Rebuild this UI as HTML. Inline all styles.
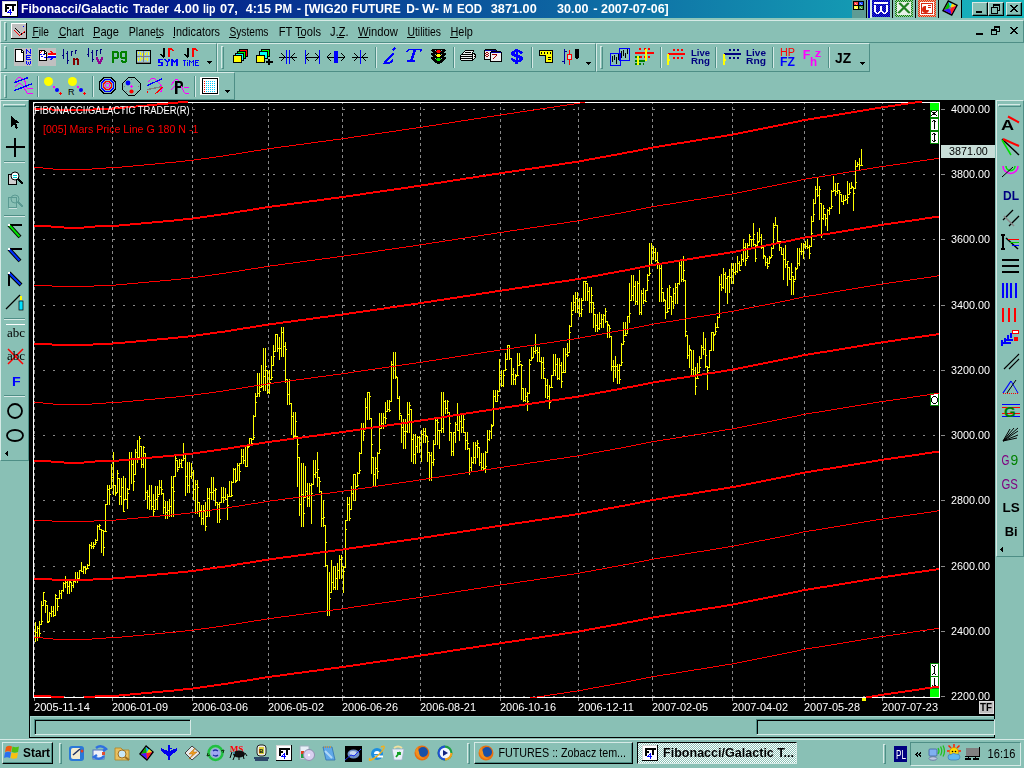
<!DOCTYPE html><html><head><meta charset="utf-8"><style>
html,body{margin:0;padding:0;}body{width:1024px;height:768px;overflow:hidden;position:relative;background:#89C0B5;font-family:"Liberation Sans",sans-serif;}
svg{overflow:visible}
</style></head><body>
<div style="position:absolute;left:0px;top:0px;width:1024px;height:18px;background:linear-gradient(to right,#000080 0%,#18B8BD 100%)"></div>
<svg style="position:absolute;left:2px;top:1px" width="16" height="16" viewBox="0 0 16 16" shape-rendering="crispEdges" ><rect x="0" y="0" width="15" height="1" fill="#d8d8d8"/><rect x="15" y="0" width="1" height="1" fill="#000000"/><rect x="0" y="1" width="1" height="1" fill="#d8d8d8"/><rect x="1" y="1" width="14" height="1" fill="#ffffff"/><rect x="15" y="1" width="1" height="1" fill="#000000"/><rect x="0" y="2" width="1" height="1" fill="#d8d8d8"/><rect x="1" y="2" width="14" height="1" fill="#ffffff"/><rect x="15" y="2" width="1" height="1" fill="#000000"/><rect x="0" y="3" width="1" height="1" fill="#d8d8d8"/><rect x="1" y="3" width="2" height="1" fill="#ffffff"/><rect x="3" y="3" width="11" height="1" fill="#000000"/><rect x="14" y="3" width="1" height="1" fill="#ffffff"/><rect x="15" y="3" width="1" height="1" fill="#000000"/><rect x="0" y="4" width="1" height="1" fill="#d8d8d8"/><rect x="1" y="4" width="2" height="1" fill="#ffffff"/><rect x="3" y="4" width="11" height="1" fill="#000000"/><rect x="14" y="4" width="1" height="1" fill="#ffffff"/><rect x="15" y="4" width="1" height="1" fill="#000000"/><rect x="0" y="5" width="1" height="1" fill="#d8d8d8"/><rect x="1" y="5" width="2" height="1" fill="#ffffff"/><rect x="3" y="5" width="2" height="1" fill="#000000"/><rect x="5" y="5" width="5" height="1" fill="#ffffff"/><rect x="10" y="5" width="2" height="1" fill="#000000"/><rect x="12" y="5" width="3" height="1" fill="#ffffff"/><rect x="15" y="5" width="1" height="1" fill="#000000"/><rect x="0" y="6" width="1" height="1" fill="#d8d8d8"/><rect x="1" y="6" width="2" height="1" fill="#ffffff"/><rect x="3" y="6" width="4" height="1" fill="#000000"/><rect x="7" y="6" width="3" height="1" fill="#ffffff"/><rect x="10" y="6" width="2" height="1" fill="#000000"/><rect x="12" y="6" width="3" height="1" fill="#ffffff"/><rect x="15" y="6" width="1" height="1" fill="#000000"/><rect x="0" y="7" width="1" height="1" fill="#d8d8d8"/><rect x="1" y="7" width="2" height="1" fill="#ffffff"/><rect x="3" y="7" width="4" height="1" fill="#000000"/><rect x="7" y="7" width="3" height="1" fill="#ffffff"/><rect x="10" y="7" width="2" height="1" fill="#000000"/><rect x="12" y="7" width="3" height="1" fill="#ffffff"/><rect x="15" y="7" width="1" height="1" fill="#000000"/><rect x="0" y="8" width="1" height="1" fill="#d8d8d8"/><rect x="1" y="8" width="2" height="1" fill="#ffffff"/><rect x="3" y="8" width="2" height="1" fill="#000000"/><rect x="5" y="8" width="3" height="1" fill="#ffffff"/><rect x="8" y="8" width="1" height="1" fill="#0000ff"/><rect x="9" y="8" width="1" height="1" fill="#ffffff"/><rect x="10" y="8" width="2" height="1" fill="#000000"/><rect x="12" y="8" width="3" height="1" fill="#ffffff"/><rect x="15" y="8" width="1" height="1" fill="#000000"/><rect x="0" y="9" width="1" height="1" fill="#d8d8d8"/><rect x="1" y="9" width="2" height="1" fill="#ffffff"/><rect x="3" y="9" width="2" height="1" fill="#000000"/><rect x="5" y="9" width="2" height="1" fill="#ffffff"/><rect x="7" y="9" width="2" height="1" fill="#0000ff"/><rect x="9" y="9" width="1" height="1" fill="#ffffff"/><rect x="10" y="9" width="2" height="1" fill="#000000"/><rect x="12" y="9" width="3" height="1" fill="#ffffff"/><rect x="15" y="9" width="1" height="1" fill="#000000"/><rect x="0" y="10" width="1" height="1" fill="#d8d8d8"/><rect x="1" y="10" width="2" height="1" fill="#ffffff"/><rect x="3" y="10" width="2" height="1" fill="#000000"/><rect x="5" y="10" width="1" height="1" fill="#ffffff"/><rect x="6" y="10" width="1" height="1" fill="#0000ff"/><rect x="7" y="10" width="1" height="1" fill="#ffffff"/><rect x="8" y="10" width="1" height="1" fill="#0000ff"/><rect x="9" y="10" width="6" height="1" fill="#ffffff"/><rect x="15" y="10" width="1" height="1" fill="#000000"/><rect x="0" y="11" width="1" height="1" fill="#d8d8d8"/><rect x="1" y="11" width="4" height="1" fill="#ffffff"/><rect x="5" y="11" width="5" height="1" fill="#0000ff"/><rect x="10" y="11" width="5" height="1" fill="#ffffff"/><rect x="15" y="11" width="1" height="1" fill="#000000"/><rect x="0" y="12" width="1" height="1" fill="#d8d8d8"/><rect x="1" y="12" width="7" height="1" fill="#ffffff"/><rect x="8" y="12" width="1" height="1" fill="#0000ff"/><rect x="9" y="12" width="6" height="1" fill="#ffffff"/><rect x="15" y="12" width="1" height="1" fill="#000000"/><rect x="0" y="13" width="1" height="1" fill="#d8d8d8"/><rect x="1" y="13" width="7" height="1" fill="#ffffff"/><rect x="8" y="13" width="1" height="1" fill="#0000ff"/><rect x="9" y="13" width="6" height="1" fill="#ffffff"/><rect x="15" y="13" width="1" height="1" fill="#000000"/><rect x="0" y="14" width="1" height="1" fill="#d8d8d8"/><rect x="1" y="14" width="14" height="1" fill="#ffffff"/><rect x="15" y="14" width="1" height="1" fill="#000000"/><rect x="0" y="15" width="16" height="1" fill="#000000"/></svg>
<div style="position:absolute;left:852px;top:0px;width:110px;height:18px;background:#89C0B5"></div>
<div style="position:absolute;left:852px;top:0px;width:14px;height:18px;background:#5E9C94"></div>
<svg style="position:absolute;left:853px;top:1px" width="12" height="10" viewBox="0 0 12 10" shape-rendering="crispEdges" ><rect x="0" y="0" width="11" height="9" fill="#000"/><rect x="1" y="1" width="4" height="3" fill="#ff4040"/><rect x="6" y="1" width="4" height="3" fill="#2050ff"/><rect x="1" y="5" width="4" height="3" fill="#ffff40"/><rect x="6" y="5" width="4" height="3" fill="#40a040"/><path d="M2 2h1M3 3h1M7 2h1M8 3h1M2 6h1M3 7h1M7 6h1M8 7h1" stroke="#fff" transform="translate(0,0.5)" opacity="0.6"/></svg>
<div style="position:absolute;left:866px;top:0px;width:1px;height:18px;background:#000"></div>
<div style="position:absolute;left:868px;top:0px;width:2px;height:18px;background:#0000c0"></div>
<div style="position:absolute;left:870px;top:0px;width:2px;height:18px;background:#D6EAE6"></div>
<svg style="position:absolute;left:872px;top:0px" width="18" height="17" viewBox="0 0 18 17" shape-rendering="crispEdges" ><defs><pattern id="pw" width="2" height="2" patternUnits="userSpaceOnUse"><rect width="2" height="2" fill="#0000a0"/><rect width="1" height="1" fill="#2020e0"/><rect x="1" y="1" width="1" height="1" fill="#2020e0"/></pattern></defs><rect width="18" height="17" fill="url(#pw)"/></svg>
<svg style="position:absolute;left:872px;top:0px" width="18" height="15" viewBox="0 0 18 15" shape-rendering="crispEdges" ><rect x="2" y="2" width="14" height="1" fill="#ffffff"/><rect x="2" y="3" width="14" height="1" fill="#ffffff"/><rect x="2" y="5" width="2" height="1" fill="#ffffff"/><rect x="14" y="5" width="2" height="1" fill="#ffffff"/><rect x="2" y="6" width="2" height="1" fill="#ffffff"/><rect x="8" y="6" width="2" height="1" fill="#ffffff"/><rect x="14" y="6" width="2" height="1" fill="#ffffff"/><rect x="2" y="7" width="2" height="1" fill="#ffffff"/><rect x="8" y="7" width="2" height="1" fill="#ffffff"/><rect x="14" y="7" width="2" height="1" fill="#ffffff"/><rect x="2" y="8" width="2" height="1" fill="#ffffff"/><rect x="8" y="8" width="2" height="1" fill="#ffffff"/><rect x="14" y="8" width="2" height="1" fill="#ffffff"/><rect x="2" y="9" width="2" height="1" fill="#ffffff"/><rect x="8" y="9" width="2" height="1" fill="#ffffff"/><rect x="14" y="9" width="2" height="1" fill="#ffffff"/><rect x="2" y="10" width="2" height="1" fill="#ffffff"/><rect x="8" y="10" width="2" height="1" fill="#ffffff"/><rect x="14" y="10" width="2" height="1" fill="#ffffff"/><rect x="2" y="11" width="2" height="1" fill="#ffffff"/><rect x="7" y="11" width="4" height="1" fill="#ffffff"/><rect x="14" y="11" width="2" height="1" fill="#ffffff"/><rect x="3" y="12" width="2" height="1" fill="#ffffff"/><rect x="6" y="12" width="2" height="1" fill="#ffffff"/><rect x="10" y="12" width="2" height="1" fill="#ffffff"/><rect x="13" y="12" width="2" height="1" fill="#ffffff"/><rect x="4" y="13" width="3" height="1" fill="#ffffff"/><rect x="11" y="13" width="3" height="1" fill="#ffffff"/></svg>
<div style="position:absolute;left:892px;top:0px;width:1px;height:18px;background:#000"></div>
<svg style="position:absolute;left:895px;top:0px" width="18" height="17" viewBox="0 0 18 17" shape-rendering="crispEdges" ><defs><pattern id="px" width="2" height="2" patternUnits="userSpaceOnUse"><rect width="2" height="2" fill="#108010"/><rect width="1" height="1" fill="#a0d0a0"/><rect x="1" y="1" width="1" height="1" fill="#a0d0a0"/></pattern></defs><rect width="18" height="17" fill="url(#px)"/><rect x="2" y="2" width="14" height="13" fill="#e8f0e8"/><path d="M4 3 L14 13 M5 3 L15 13 M14 3 L4 13 M13 3 L3 13" stroke="#208020" stroke-width="1.5" shape-rendering="auto"/></svg>
<div style="position:absolute;left:915px;top:0px;width:1px;height:18px;background:#000"></div>
<svg style="position:absolute;left:918px;top:0px" width="18" height="17" viewBox="0 0 18 17" shape-rendering="crispEdges" ><defs><pattern id="pp" width="2" height="2" patternUnits="userSpaceOnUse"><rect width="2" height="2" fill="#e03010"/><rect width="1" height="1" fill="#f0a080"/><rect x="1" y="1" width="1" height="1" fill="#f0a080"/></pattern></defs><rect width="18" height="17" fill="url(#pp)"/><rect x="2" y="2" width="14" height="13" fill="#fff"/><rect x="3" y="3" width="12" height="11" fill="#d82810"/><rect x="4" y="4" width="10" height="9" fill="#fff"/><path d="M8 6 A3.5 3.5 0 1 0 11 10 H8 Z" fill="#d82810" shape-rendering="auto"/><path d="M10 5h3M10 7h3" stroke="#d82810"/></svg>
<div style="position:absolute;left:938px;top:0px;width:1px;height:18px;background:#000"></div>
<svg style="position:absolute;left:941px;top:0px" width="18" height="17" viewBox="0 0 18 17" shape-rendering="crispEdges" ><g shape-rendering="auto"><polygon points="7,0 17,5 11,16 1,11" fill="#000"/><polygon points="7.5,2 15,5.8 10.5,14 3,10.3" fill="#ff00c0"/><polygon points="7.5,2 15,5.8 9,8" fill="#00e0ff"/><polygon points="3,10.3 7.5,2 9,8" fill="#00c000"/><polygon points="3,10.3 10.5,14 9,8" fill="#3020ff"/><polygon points="15,5.8 10.5,14 9,8" fill="#ff2020"/><polygon points="11,3.5 15,5.8 9,8" fill="#ffe000"/><circle cx="9" cy="8" r="1.3" fill="#808080"/></g></svg>
<div style="position:absolute;left:961px;top:0px;width:1px;height:18px;background:#000"></div>
<div style="position:absolute;left:972px;top:2px;width:16px;height:14px;box-sizing:border-box;background:#89C0B5;border-top:1px solid #D6EAE6;border-left:1px solid #D6EAE6;border-right:1px solid #000;border-bottom:1px solid #000;box-shadow:inset -1px -1px 0 #4E8E86"></div>
<svg style="position:absolute;left:972px;top:2px" width="16" height="14" viewBox="0 0 16 14" shape-rendering="crispEdges" ><rect x="4" y="9" width="6" height="2" fill="#000"/></svg>
<div style="position:absolute;left:988px;top:2px;width:16px;height:14px;box-sizing:border-box;background:#89C0B5;border-top:1px solid #D6EAE6;border-left:1px solid #D6EAE6;border-right:1px solid #000;border-bottom:1px solid #000;box-shadow:inset -1px -1px 0 #4E8E86"></div>
<svg style="position:absolute;left:988px;top:2px" width="16" height="14" viewBox="0 0 16 14" shape-rendering="crispEdges" ><rect x="3" y="5" width="6" height="6" fill="none" stroke="#000" stroke-width="1" transform="translate(0.5,0.5)"/><rect x="3" y="5" width="7" height="1" fill="#000"/><rect x="5" y="2" width="7" height="2" fill="#000"/><rect x="11" y="2" width="1" height="6" fill="#000"/><rect x="5" y="2" width="1" height="3" fill="#000"/><rect x="9" y="8" width="3" height="1" fill="#000"/></svg>
<div style="position:absolute;left:1006px;top:2px;width:16px;height:14px;box-sizing:border-box;background:#89C0B5;border-top:1px solid #D6EAE6;border-left:1px solid #D6EAE6;border-right:1px solid #000;border-bottom:1px solid #000;box-shadow:inset -1px -1px 0 #4E8E86"></div>
<svg style="position:absolute;left:1006px;top:2px" width="16" height="14" viewBox="0 0 16 14" shape-rendering="crispEdges" ><path d="M4 3 L11 10 M5 3 L12 10 M11 3 L4 10 M12 3 L5 10" stroke="#000" stroke-width="1" shape-rendering="crispEdges"/></svg>
<div style="position:absolute;left:0px;top:18px;width:1024px;height:2px;background:#8EC6BA"></div>
<div style="position:absolute;left:0px;top:20px;width:1024px;height:23px;box-sizing:border-box;border-top:1px solid #D6EAE6;border-left:1px solid #D6EAE6;border-bottom:1px solid #4E8E86;border-right:1px solid #4E8E86;"></div>
<div style="position:absolute;left:4px;top:22px;width:3px;height:19px;box-sizing:border-box;border-left:1px solid #D6EAE6;border-top:1px solid #D6EAE6;border-right:1px solid #4E8E86;border-bottom:1px solid #4E8E86;"></div>
<svg style="position:absolute;left:11px;top:23px" width="16" height="16" viewBox="0 0 16 16" shape-rendering="crispEdges" ><rect x="0" y="0" width="15" height="1" fill="#ffffff"/><rect x="15" y="0" width="1" height="1" fill="#000000"/><rect x="0" y="1" width="1" height="1" fill="#ffffff"/><rect x="1" y="1" width="14" height="1" fill="#c0c0c0"/><rect x="15" y="1" width="1" height="1" fill="#000000"/><rect x="0" y="2" width="1" height="1" fill="#ffffff"/><rect x="1" y="2" width="14" height="1" fill="#c0c0c0"/><rect x="15" y="2" width="1" height="1" fill="#000000"/><rect x="0" y="3" width="1" height="1" fill="#ffffff"/><rect x="1" y="3" width="11" height="1" fill="#c0c0c0"/><rect x="12" y="3" width="1" height="1" fill="#0000ff"/><rect x="13" y="3" width="2" height="1" fill="#c0c0c0"/><rect x="15" y="3" width="1" height="1" fill="#000000"/><rect x="0" y="4" width="1" height="1" fill="#ffffff"/><rect x="1" y="4" width="14" height="1" fill="#c0c0c0"/><rect x="15" y="4" width="1" height="1" fill="#000000"/><rect x="0" y="5" width="1" height="1" fill="#ffffff"/><rect x="1" y="5" width="3" height="1" fill="#c0c0c0"/><rect x="4" y="5" width="1" height="1" fill="#000000"/><rect x="5" y="5" width="10" height="1" fill="#c0c0c0"/><rect x="15" y="5" width="1" height="1" fill="#000000"/><rect x="0" y="6" width="1" height="1" fill="#ffffff"/><rect x="1" y="6" width="4" height="1" fill="#c0c0c0"/><rect x="5" y="6" width="1" height="1" fill="#000000"/><rect x="6" y="6" width="9" height="1" fill="#c0c0c0"/><rect x="15" y="6" width="1" height="1" fill="#000000"/><rect x="0" y="7" width="1" height="1" fill="#ffffff"/><rect x="1" y="7" width="2" height="1" fill="#c0c0c0"/><rect x="3" y="7" width="1" height="1" fill="#ff0000"/><rect x="4" y="7" width="2" height="1" fill="#c0c0c0"/><rect x="6" y="7" width="1" height="1" fill="#000000"/><rect x="7" y="7" width="8" height="1" fill="#c0c0c0"/><rect x="15" y="7" width="1" height="1" fill="#000000"/><rect x="0" y="8" width="1" height="1" fill="#ffffff"/><rect x="1" y="8" width="3" height="1" fill="#c0c0c0"/><rect x="4" y="8" width="1" height="1" fill="#ff0000"/><rect x="5" y="8" width="2" height="1" fill="#c0c0c0"/><rect x="7" y="8" width="1" height="1" fill="#000000"/><rect x="8" y="8" width="5" height="1" fill="#c0c0c0"/><rect x="13" y="8" width="1" height="1" fill="#ff0000"/><rect x="14" y="8" width="1" height="1" fill="#c0c0c0"/><rect x="15" y="8" width="1" height="1" fill="#000000"/><rect x="0" y="9" width="1" height="1" fill="#ffffff"/><rect x="1" y="9" width="4" height="1" fill="#c0c0c0"/><rect x="5" y="9" width="1" height="1" fill="#ff0000"/><rect x="6" y="9" width="2" height="1" fill="#c0c0c0"/><rect x="8" y="9" width="1" height="1" fill="#000000"/><rect x="9" y="9" width="3" height="1" fill="#c0c0c0"/><rect x="12" y="9" width="1" height="1" fill="#ff0000"/><rect x="13" y="9" width="1" height="1" fill="#000000"/><rect x="14" y="9" width="1" height="1" fill="#c0c0c0"/><rect x="15" y="9" width="1" height="1" fill="#000000"/><rect x="0" y="10" width="1" height="1" fill="#ffffff"/><rect x="1" y="10" width="5" height="1" fill="#c0c0c0"/><rect x="6" y="10" width="1" height="1" fill="#ff0000"/><rect x="7" y="10" width="3" height="1" fill="#c0c0c0"/><rect x="10" y="10" width="1" height="1" fill="#000000"/><rect x="11" y="10" width="1" height="1" fill="#ff0000"/><rect x="12" y="10" width="3" height="1" fill="#c0c0c0"/><rect x="15" y="10" width="1" height="1" fill="#000000"/><rect x="0" y="11" width="1" height="1" fill="#ffffff"/><rect x="1" y="11" width="6" height="1" fill="#c0c0c0"/><rect x="7" y="11" width="1" height="1" fill="#ff0000"/><rect x="8" y="11" width="1" height="1" fill="#c0c0c0"/><rect x="9" y="11" width="1" height="1" fill="#ff0000"/><rect x="10" y="11" width="1" height="1" fill="#000000"/><rect x="11" y="11" width="4" height="1" fill="#c0c0c0"/><rect x="15" y="11" width="1" height="1" fill="#000000"/><rect x="0" y="12" width="1" height="1" fill="#ffffff"/><rect x="1" y="12" width="7" height="1" fill="#c0c0c0"/><rect x="8" y="12" width="1" height="1" fill="#ff0000"/><rect x="9" y="12" width="6" height="1" fill="#c0c0c0"/><rect x="15" y="12" width="1" height="1" fill="#000000"/><rect x="0" y="13" width="1" height="1" fill="#ffffff"/><rect x="1" y="13" width="14" height="1" fill="#c0c0c0"/><rect x="15" y="13" width="1" height="1" fill="#000000"/><rect x="0" y="14" width="1" height="1" fill="#ffffff"/><rect x="1" y="14" width="14" height="1" fill="#c0c0c0"/><rect x="15" y="14" width="1" height="1" fill="#000000"/><rect x="0" y="15" width="16" height="1" fill="#000000"/></svg>
<svg style="position:absolute;left:976px;top:33px" width="7" height="2" viewBox="0 0 7 2" shape-rendering="crispEdges" ><rect x="0" y="0" width="7" height="1" fill="#000"/><rect x="0" y="1" width="7" height="1" fill="#000"/></svg>
<svg style="position:absolute;left:991px;top:26px" width="9" height="9" viewBox="0 0 9 9" shape-rendering="crispEdges" ><rect x="3" y="0" width="6" height="1" fill="#000"/><rect x="3" y="1" width="6" height="1" fill="#000"/><rect x="3" y="2" width="1" height="1" fill="#000"/><rect x="8" y="2" width="1" height="1" fill="#000"/><rect x="0" y="3" width="6" height="1" fill="#000"/><rect x="8" y="3" width="1" height="1" fill="#000"/><rect x="0" y="4" width="6" height="1" fill="#000"/><rect x="8" y="4" width="1" height="1" fill="#000"/><rect x="0" y="5" width="1" height="1" fill="#000"/><rect x="5" y="5" width="4" height="1" fill="#000"/><rect x="0" y="6" width="1" height="1" fill="#000"/><rect x="5" y="6" width="1" height="1" fill="#000"/><rect x="0" y="7" width="1" height="1" fill="#000"/><rect x="5" y="7" width="1" height="1" fill="#000"/><rect x="0" y="8" width="6" height="1" fill="#000"/></svg>
<svg style="position:absolute;left:1010px;top:27px" width="8" height="7" viewBox="0 0 8 7" shape-rendering="crispEdges" ><rect x="0" y="0" width="2" height="1" fill="#000"/><rect x="6" y="0" width="2" height="1" fill="#000"/><rect x="1" y="1" width="2" height="1" fill="#000"/><rect x="5" y="1" width="2" height="1" fill="#000"/><rect x="2" y="2" width="4" height="1" fill="#000"/><rect x="3" y="3" width="2" height="1" fill="#000"/><rect x="2" y="4" width="4" height="1" fill="#000"/><rect x="1" y="5" width="2" height="1" fill="#000"/><rect x="5" y="5" width="2" height="1" fill="#000"/><rect x="0" y="6" width="2" height="1" fill="#000"/><rect x="6" y="6" width="2" height="1" fill="#000"/></svg>
<div style="position:absolute;left:0px;top:43px;width:217px;height:29px;box-sizing:border-box;border-top:1px solid #D6EAE6;border-left:1px solid #D6EAE6;border-bottom:1px solid #4E8E86;border-right:1px solid #4E8E86;"></div>
<div style="position:absolute;left:217px;top:43px;width:379px;height:29px;box-sizing:border-box;border-top:1px solid #D6EAE6;border-left:1px solid #D6EAE6;border-bottom:1px solid #4E8E86;border-right:1px solid #4E8E86;"></div>
<div style="position:absolute;left:596px;top:43px;width:274px;height:29px;box-sizing:border-box;border-top:1px solid #D6EAE6;border-left:1px solid #D6EAE6;border-bottom:1px solid #4E8E86;border-right:1px solid #4E8E86;"></div>
<div style="position:absolute;left:0px;top:72px;width:235px;height:28px;box-sizing:border-box;border-top:1px solid #D6EAE6;border-left:1px solid #D6EAE6;border-bottom:1px solid #4E8E86;border-right:1px solid #4E8E86;"></div>
<div style="position:absolute;left:4px;top:46px;width:3px;height:23px;box-sizing:border-box;border-left:1px solid #D6EAE6;border-top:1px solid #D6EAE6;border-right:1px solid #4E8E86;border-bottom:1px solid #4E8E86;"></div>
<div style="position:absolute;left:221px;top:46px;width:3px;height:23px;box-sizing:border-box;border-left:1px solid #D6EAE6;border-top:1px solid #D6EAE6;border-right:1px solid #4E8E86;border-bottom:1px solid #4E8E86;"></div>
<div style="position:absolute;left:600px;top:46px;width:3px;height:23px;box-sizing:border-box;border-left:1px solid #D6EAE6;border-top:1px solid #D6EAE6;border-right:1px solid #4E8E86;border-bottom:1px solid #4E8E86;"></div>
<div style="position:absolute;left:4px;top:75px;width:3px;height:23px;box-sizing:border-box;border-left:1px solid #D6EAE6;border-top:1px solid #D6EAE6;border-right:1px solid #4E8E86;border-bottom:1px solid #4E8E86;"></div>
<svg style="position:absolute;left:14px;top:48px" width="18" height="18" viewBox="0 0 18 18" shape-rendering="crispEdges" ><rect x="0" y="0" width="18" height="1" fill="#c0c0c0"/><rect x="0" y="1" width="1" height="1" fill="#c0c0c0"/><rect x="1" y="1" width="7" height="1" fill="#000"/><rect x="8" y="1" width="4" height="1" fill="#c0c0c0"/><rect x="12" y="1" width="1" height="1" fill="#0000ff"/><rect x="13" y="1" width="3" height="1" fill="#c0c0c0"/><rect x="16" y="1" width="1" height="1" fill="#0000ff"/><rect x="17" y="1" width="1" height="1" fill="#c0c0c0"/><rect x="0" y="2" width="1" height="1" fill="#c0c0c0"/><rect x="1" y="2" width="1" height="1" fill="#000"/><rect x="2" y="2" width="5" height="1" fill="#fff"/><rect x="7" y="2" width="2" height="1" fill="#000"/><rect x="9" y="2" width="3" height="1" fill="#c0c0c0"/><rect x="12" y="2" width="2" height="1" fill="#0000ff"/><rect x="14" y="2" width="2" height="1" fill="#c0c0c0"/><rect x="16" y="2" width="1" height="1" fill="#0000ff"/><rect x="17" y="2" width="1" height="1" fill="#c0c0c0"/><rect x="0" y="3" width="1" height="1" fill="#c0c0c0"/><rect x="1" y="3" width="1" height="1" fill="#000"/><rect x="2" y="3" width="5" height="1" fill="#fff"/><rect x="7" y="3" width="1" height="1" fill="#000"/><rect x="8" y="3" width="1" height="1" fill="#fff"/><rect x="9" y="3" width="1" height="1" fill="#000"/><rect x="10" y="3" width="2" height="1" fill="#c0c0c0"/><rect x="12" y="3" width="1" height="1" fill="#0000ff"/><rect x="13" y="3" width="1" height="1" fill="#c0c0c0"/><rect x="14" y="3" width="1" height="1" fill="#0000ff"/><rect x="15" y="3" width="1" height="1" fill="#c0c0c0"/><rect x="16" y="3" width="1" height="1" fill="#0000ff"/><rect x="17" y="3" width="1" height="1" fill="#c0c0c0"/><rect x="0" y="4" width="1" height="1" fill="#c0c0c0"/><rect x="1" y="4" width="1" height="1" fill="#000"/><rect x="2" y="4" width="5" height="1" fill="#fff"/><rect x="7" y="4" width="3" height="1" fill="#000"/><rect x="10" y="4" width="2" height="1" fill="#c0c0c0"/><rect x="12" y="4" width="1" height="1" fill="#0000ff"/><rect x="13" y="4" width="2" height="1" fill="#c0c0c0"/><rect x="15" y="4" width="2" height="1" fill="#0000ff"/><rect x="17" y="4" width="1" height="1" fill="#c0c0c0"/><rect x="0" y="5" width="1" height="1" fill="#c0c0c0"/><rect x="1" y="5" width="1" height="1" fill="#000"/><rect x="2" y="5" width="7" height="1" fill="#fff"/><rect x="9" y="5" width="1" height="1" fill="#000"/><rect x="10" y="5" width="2" height="1" fill="#c0c0c0"/><rect x="12" y="5" width="1" height="1" fill="#0000ff"/><rect x="13" y="5" width="3" height="1" fill="#c0c0c0"/><rect x="16" y="5" width="1" height="1" fill="#0000ff"/><rect x="17" y="5" width="1" height="1" fill="#c0c0c0"/><rect x="0" y="6" width="1" height="1" fill="#c0c0c0"/><rect x="1" y="6" width="1" height="1" fill="#000"/><rect x="2" y="6" width="7" height="1" fill="#fff"/><rect x="9" y="6" width="1" height="1" fill="#000"/><rect x="10" y="6" width="8" height="1" fill="#c0c0c0"/><rect x="0" y="7" width="1" height="1" fill="#c0c0c0"/><rect x="1" y="7" width="1" height="1" fill="#000"/><rect x="2" y="7" width="7" height="1" fill="#fff"/><rect x="9" y="7" width="1" height="1" fill="#000"/><rect x="10" y="7" width="2" height="1" fill="#c0c0c0"/><rect x="12" y="7" width="5" height="1" fill="#0000ff"/><rect x="17" y="7" width="1" height="1" fill="#c0c0c0"/><rect x="0" y="8" width="1" height="1" fill="#c0c0c0"/><rect x="1" y="8" width="1" height="1" fill="#000"/><rect x="2" y="8" width="7" height="1" fill="#fff"/><rect x="9" y="8" width="1" height="1" fill="#000"/><rect x="10" y="8" width="2" height="1" fill="#c0c0c0"/><rect x="12" y="8" width="1" height="1" fill="#0000ff"/><rect x="13" y="8" width="5" height="1" fill="#c0c0c0"/><rect x="0" y="9" width="1" height="1" fill="#c0c0c0"/><rect x="1" y="9" width="1" height="1" fill="#000"/><rect x="2" y="9" width="7" height="1" fill="#fff"/><rect x="9" y="9" width="1" height="1" fill="#000"/><rect x="10" y="9" width="2" height="1" fill="#c0c0c0"/><rect x="12" y="9" width="4" height="1" fill="#0000ff"/><rect x="16" y="9" width="2" height="1" fill="#c0c0c0"/><rect x="0" y="10" width="1" height="1" fill="#c0c0c0"/><rect x="1" y="10" width="1" height="1" fill="#000"/><rect x="2" y="10" width="7" height="1" fill="#fff"/><rect x="9" y="10" width="1" height="1" fill="#000"/><rect x="10" y="10" width="2" height="1" fill="#c0c0c0"/><rect x="12" y="10" width="1" height="1" fill="#0000ff"/><rect x="13" y="10" width="5" height="1" fill="#c0c0c0"/><rect x="0" y="11" width="1" height="1" fill="#c0c0c0"/><rect x="1" y="11" width="1" height="1" fill="#000"/><rect x="2" y="11" width="7" height="1" fill="#fff"/><rect x="9" y="11" width="1" height="1" fill="#000"/><rect x="10" y="11" width="2" height="1" fill="#c0c0c0"/><rect x="12" y="11" width="5" height="1" fill="#0000ff"/><rect x="17" y="11" width="1" height="1" fill="#c0c0c0"/><rect x="0" y="12" width="1" height="1" fill="#c0c0c0"/><rect x="1" y="12" width="1" height="1" fill="#000"/><rect x="2" y="12" width="7" height="1" fill="#fff"/><rect x="9" y="12" width="1" height="1" fill="#000"/><rect x="10" y="12" width="8" height="1" fill="#c0c0c0"/><rect x="0" y="13" width="1" height="1" fill="#c0c0c0"/><rect x="1" y="13" width="9" height="1" fill="#000"/><rect x="10" y="13" width="2" height="1" fill="#c0c0c0"/><rect x="12" y="13" width="1" height="1" fill="#0000ff"/><rect x="13" y="13" width="3" height="1" fill="#c0c0c0"/><rect x="16" y="13" width="1" height="1" fill="#0000ff"/><rect x="17" y="13" width="1" height="1" fill="#c0c0c0"/><rect x="0" y="14" width="12" height="1" fill="#c0c0c0"/><rect x="12" y="14" width="1" height="1" fill="#0000ff"/><rect x="13" y="14" width="1" height="1" fill="#c0c0c0"/><rect x="14" y="14" width="1" height="1" fill="#0000ff"/><rect x="15" y="14" width="1" height="1" fill="#c0c0c0"/><rect x="16" y="14" width="1" height="1" fill="#0000ff"/><rect x="17" y="14" width="1" height="1" fill="#c0c0c0"/><rect x="0" y="15" width="12" height="1" fill="#c0c0c0"/><rect x="12" y="15" width="1" height="1" fill="#0000ff"/><rect x="13" y="15" width="1" height="1" fill="#c0c0c0"/><rect x="14" y="15" width="1" height="1" fill="#0000ff"/><rect x="15" y="15" width="1" height="1" fill="#c0c0c0"/><rect x="16" y="15" width="1" height="1" fill="#0000ff"/><rect x="17" y="15" width="1" height="1" fill="#c0c0c0"/><rect x="0" y="16" width="13" height="1" fill="#c0c0c0"/><rect x="13" y="16" width="1" height="1" fill="#0000ff"/><rect x="14" y="16" width="1" height="1" fill="#c0c0c0"/><rect x="15" y="16" width="1" height="1" fill="#0000ff"/><rect x="16" y="16" width="2" height="1" fill="#c0c0c0"/><rect x="0" y="17" width="18" height="1" fill="#c0c0c0"/></svg>
<svg style="position:absolute;left:38px;top:48px" width="18" height="18" viewBox="0 0 18 18" shape-rendering="crispEdges" ><rect x="0" y="0" width="18" height="1" fill="#c0c0c0"/><rect x="0" y="1" width="18" height="1" fill="#c0c0c0"/><rect x="0" y="2" width="1" height="1" fill="#c0c0c0"/><rect x="1" y="2" width="6" height="1" fill="#000"/><rect x="7" y="2" width="11" height="1" fill="#c0c0c0"/><rect x="0" y="3" width="1" height="1" fill="#c0c0c0"/><rect x="1" y="3" width="1" height="1" fill="#000"/><rect x="2" y="3" width="1" height="1" fill="#fff"/><rect x="3" y="3" width="1" height="1" fill="#ff0000"/><rect x="4" y="3" width="2" height="1" fill="#fff"/><rect x="6" y="3" width="2" height="1" fill="#000"/><rect x="8" y="3" width="4" height="1" fill="#c0c0c0"/><rect x="12" y="3" width="2" height="1" fill="#ff0000"/><rect x="14" y="3" width="4" height="1" fill="#c0c0c0"/><rect x="0" y="4" width="1" height="1" fill="#c0c0c0"/><rect x="1" y="4" width="1" height="1" fill="#000"/><rect x="2" y="4" width="1" height="1" fill="#ff0000"/><rect x="3" y="4" width="3" height="1" fill="#fff"/><rect x="6" y="4" width="1" height="1" fill="#000"/><rect x="7" y="4" width="1" height="1" fill="#fff"/><rect x="8" y="4" width="1" height="1" fill="#000"/><rect x="9" y="4" width="4" height="1" fill="#c0c0c0"/><rect x="13" y="4" width="2" height="1" fill="#ff0000"/><rect x="15" y="4" width="3" height="1" fill="#c0c0c0"/><rect x="0" y="5" width="1" height="1" fill="#c0c0c0"/><rect x="1" y="5" width="1" height="1" fill="#000"/><rect x="2" y="5" width="4" height="1" fill="#fff"/><rect x="6" y="5" width="3" height="1" fill="#000"/><rect x="9" y="5" width="1" height="1" fill="#c0c0c0"/><rect x="10" y="5" width="8" height="1" fill="#ff0000"/><rect x="0" y="6" width="1" height="1" fill="#c0c0c0"/><rect x="1" y="6" width="1" height="1" fill="#000"/><rect x="2" y="6" width="2" height="1" fill="#0000ff"/><rect x="4" y="6" width="1" height="1" fill="#fff"/><rect x="5" y="6" width="2" height="1" fill="#0000ff"/><rect x="7" y="6" width="1" height="1" fill="#fff"/><rect x="8" y="6" width="1" height="1" fill="#000"/><rect x="9" y="6" width="1" height="1" fill="#c0c0c0"/><rect x="10" y="6" width="8" height="1" fill="#ff0000"/><rect x="0" y="7" width="1" height="1" fill="#c0c0c0"/><rect x="1" y="7" width="1" height="1" fill="#000"/><rect x="2" y="7" width="6" height="1" fill="#fff"/><rect x="8" y="7" width="1" height="1" fill="#000"/><rect x="9" y="7" width="1" height="1" fill="#c0c0c0"/><rect x="10" y="7" width="8" height="1" fill="#fff"/><rect x="0" y="8" width="1" height="1" fill="#c0c0c0"/><rect x="1" y="8" width="1" height="1" fill="#000"/><rect x="2" y="8" width="1" height="1" fill="#fff"/><rect x="3" y="8" width="2" height="1" fill="#0000ff"/><rect x="5" y="8" width="3" height="1" fill="#fff"/><rect x="8" y="8" width="1" height="1" fill="#000"/><rect x="9" y="8" width="1" height="1" fill="#c0c0c0"/><rect x="10" y="8" width="8" height="1" fill="#0000ff"/><rect x="0" y="9" width="1" height="1" fill="#c0c0c0"/><rect x="1" y="9" width="1" height="1" fill="#000"/><rect x="2" y="9" width="4" height="1" fill="#fff"/><rect x="6" y="9" width="2" height="1" fill="#0000ff"/><rect x="8" y="9" width="1" height="1" fill="#000"/><rect x="9" y="9" width="9" height="1" fill="#0000ff"/><rect x="0" y="10" width="1" height="1" fill="#c0c0c0"/><rect x="1" y="10" width="1" height="1" fill="#000"/><rect x="2" y="10" width="6" height="1" fill="#fff"/><rect x="8" y="10" width="1" height="1" fill="#000"/><rect x="9" y="10" width="4" height="1" fill="#c0c0c0"/><rect x="13" y="10" width="2" height="1" fill="#0000ff"/><rect x="15" y="10" width="3" height="1" fill="#c0c0c0"/><rect x="0" y="11" width="1" height="1" fill="#c0c0c0"/><rect x="1" y="11" width="1" height="1" fill="#000"/><rect x="2" y="11" width="6" height="1" fill="#fff"/><rect x="8" y="11" width="1" height="1" fill="#000"/><rect x="9" y="11" width="3" height="1" fill="#c0c0c0"/><rect x="12" y="11" width="2" height="1" fill="#0000ff"/><rect x="14" y="11" width="4" height="1" fill="#c0c0c0"/><rect x="0" y="12" width="1" height="1" fill="#c0c0c0"/><rect x="1" y="12" width="8" height="1" fill="#000"/><rect x="9" y="12" width="9" height="1" fill="#c0c0c0"/><rect x="0" y="13" width="18" height="1" fill="#c0c0c0"/><rect x="0" y="14" width="18" height="1" fill="#c0c0c0"/><rect x="0" y="15" width="18" height="1" fill="#c0c0c0"/><rect x="0" y="16" width="18" height="1" fill="#c0c0c0"/><rect x="0" y="17" width="18" height="1" fill="#c0c0c0"/></svg>
<svg style="position:absolute;left:61px;top:48px" width="18" height="18" viewBox="0 0 18 18" shape-rendering="crispEdges" ><rect x="2" y="1" width="1" height="1" fill="#000080"/><rect x="2" y="2" width="1" height="1" fill="#000080"/><rect x="14" y="2" width="2" height="1" fill="#000080"/><rect x="2" y="3" width="1" height="1" fill="#000080"/><rect x="6" y="3" width="1" height="1" fill="#000080"/><rect x="10" y="3" width="2" height="1" fill="#000080"/><rect x="14" y="3" width="1" height="1" fill="#000080"/><rect x="2" y="4" width="1" height="1" fill="#000080"/><rect x="6" y="4" width="1" height="1" fill="#000080"/><rect x="10" y="4" width="1" height="1" fill="#000080"/><rect x="14" y="4" width="1" height="1" fill="#000080"/><rect x="2" y="5" width="1" height="1" fill="#000080"/><rect x="5" y="5" width="2" height="1" fill="#000080"/><rect x="10" y="5" width="1" height="1" fill="#000080"/><rect x="14" y="5" width="1" height="1" fill="#000080"/><rect x="2" y="6" width="1" height="1" fill="#000080"/><rect x="6" y="6" width="1" height="1" fill="#000080"/><rect x="10" y="6" width="1" height="1" fill="#000080"/><rect x="1" y="7" width="2" height="1" fill="#000080"/><rect x="6" y="7" width="1" height="1" fill="#000080"/><rect x="10" y="7" width="1" height="1" fill="#000080"/><rect x="2" y="8" width="1" height="1" fill="#000080"/><rect x="6" y="8" width="1" height="1" fill="#000080"/><rect x="2" y="9" width="1" height="1" fill="#000080"/><rect x="6" y="9" width="1" height="1" fill="#000080"/><rect x="2" y="10" width="1" height="1" fill="#000080"/><rect x="6" y="10" width="1" height="1" fill="#000080"/><rect x="12" y="10" width="2" height="1" fill="#800000"/><rect x="15" y="10" width="2" height="1" fill="#800000"/><rect x="6" y="11" width="1" height="1" fill="#000080"/><rect x="12" y="11" width="6" height="1" fill="#800000"/><rect x="6" y="12" width="2" height="1" fill="#000080"/><rect x="12" y="12" width="2" height="1" fill="#800000"/><rect x="16" y="12" width="2" height="1" fill="#800000"/><rect x="6" y="13" width="1" height="1" fill="#000080"/><rect x="12" y="13" width="2" height="1" fill="#800000"/><rect x="16" y="13" width="2" height="1" fill="#800000"/><rect x="6" y="14" width="1" height="1" fill="#000080"/><rect x="12" y="14" width="2" height="1" fill="#800000"/><rect x="16" y="14" width="2" height="1" fill="#800000"/><rect x="6" y="15" width="1" height="1" fill="#000080"/><rect x="12" y="15" width="2" height="1" fill="#800000"/><rect x="16" y="15" width="2" height="1" fill="#800000"/><rect x="12" y="16" width="2" height="1" fill="#800000"/><rect x="16" y="16" width="2" height="1" fill="#800000"/></svg>
<svg style="position:absolute;left:86px;top:47px" width="18" height="18" viewBox="0 0 18 18" shape-rendering="crispEdges" ><rect x="2" y="1" width="1" height="1" fill="#000080"/><rect x="2" y="2" width="1" height="1" fill="#000080"/><rect x="14" y="2" width="2" height="1" fill="#000080"/><rect x="2" y="3" width="1" height="1" fill="#000080"/><rect x="6" y="3" width="1" height="1" fill="#000080"/><rect x="10" y="3" width="2" height="1" fill="#000080"/><rect x="14" y="3" width="1" height="1" fill="#000080"/><rect x="2" y="4" width="1" height="1" fill="#000080"/><rect x="6" y="4" width="1" height="1" fill="#000080"/><rect x="10" y="4" width="1" height="1" fill="#000080"/><rect x="14" y="4" width="1" height="1" fill="#000080"/><rect x="2" y="5" width="1" height="1" fill="#000080"/><rect x="5" y="5" width="2" height="1" fill="#000080"/><rect x="10" y="5" width="1" height="1" fill="#000080"/><rect x="14" y="5" width="1" height="1" fill="#000080"/><rect x="2" y="6" width="1" height="1" fill="#000080"/><rect x="6" y="6" width="1" height="1" fill="#000080"/><rect x="10" y="6" width="1" height="1" fill="#000080"/><rect x="14" y="6" width="1" height="1" fill="#000080"/><rect x="1" y="7" width="2" height="1" fill="#000080"/><rect x="6" y="7" width="1" height="1" fill="#000080"/><rect x="10" y="7" width="1" height="1" fill="#000080"/><rect x="2" y="8" width="1" height="1" fill="#000080"/><rect x="6" y="8" width="1" height="1" fill="#000080"/><rect x="10" y="8" width="1" height="1" fill="#000080"/><rect x="2" y="9" width="1" height="1" fill="#000080"/><rect x="6" y="9" width="1" height="1" fill="#000080"/><rect x="6" y="10" width="1" height="1" fill="#000080"/><rect x="10" y="10" width="2" height="1" fill="#900090"/><rect x="15" y="10" width="2" height="1" fill="#900090"/><rect x="6" y="11" width="1" height="1" fill="#000080"/><rect x="10" y="11" width="2" height="1" fill="#900090"/><rect x="15" y="11" width="2" height="1" fill="#900090"/><rect x="6" y="12" width="2" height="1" fill="#000080"/><rect x="10" y="12" width="3" height="1" fill="#900090"/><rect x="14" y="12" width="3" height="1" fill="#900090"/><rect x="6" y="13" width="1" height="1" fill="#000080"/><rect x="11" y="13" width="2" height="1" fill="#900090"/><rect x="14" y="13" width="2" height="1" fill="#900090"/><rect x="6" y="14" width="1" height="1" fill="#000080"/><rect x="11" y="14" width="5" height="1" fill="#900090"/><rect x="12" y="15" width="3" height="1" fill="#900090"/><rect x="12" y="16" width="3" height="1" fill="#900090"/></svg>
<svg style="position:absolute;left:112px;top:51px" width="15" height="12" viewBox="0 0 15 12" shape-rendering="crispEdges" ><rect x="0" y="0" width="6" height="1" fill="#008000"/><rect x="9" y="0" width="6" height="1" fill="#008000"/><rect x="0" y="1" width="7" height="1" fill="#008000"/><rect x="8" y="1" width="7" height="1" fill="#008000"/><rect x="0" y="2" width="2" height="1" fill="#008000"/><rect x="5" y="2" width="2" height="1" fill="#008000"/><rect x="8" y="2" width="2" height="1" fill="#008000"/><rect x="13" y="2" width="2" height="1" fill="#008000"/><rect x="0" y="3" width="2" height="1" fill="#008000"/><rect x="5" y="3" width="2" height="1" fill="#008000"/><rect x="8" y="3" width="2" height="1" fill="#008000"/><rect x="13" y="3" width="2" height="1" fill="#008000"/><rect x="0" y="4" width="2" height="1" fill="#008000"/><rect x="5" y="4" width="2" height="1" fill="#008000"/><rect x="8" y="4" width="2" height="1" fill="#008000"/><rect x="13" y="4" width="2" height="1" fill="#008000"/><rect x="0" y="5" width="2" height="1" fill="#008000"/><rect x="5" y="5" width="2" height="1" fill="#008000"/><rect x="8" y="5" width="2" height="1" fill="#008000"/><rect x="13" y="5" width="2" height="1" fill="#008000"/><rect x="0" y="6" width="7" height="1" fill="#008000"/><rect x="8" y="6" width="7" height="1" fill="#008000"/><rect x="0" y="7" width="6" height="1" fill="#008000"/><rect x="9" y="7" width="6" height="1" fill="#008000"/><rect x="0" y="8" width="2" height="1" fill="#008000"/><rect x="13" y="8" width="2" height="1" fill="#008000"/><rect x="0" y="9" width="2" height="1" fill="#008000"/><rect x="9" y="9" width="2" height="1" fill="#008000"/><rect x="13" y="9" width="2" height="1" fill="#008000"/><rect x="0" y="10" width="2" height="1" fill="#008000"/><rect x="9" y="10" width="6" height="1" fill="#008000"/><rect x="0" y="11" width="2" height="1" fill="#008000"/><rect x="10" y="11" width="4" height="1" fill="#008000"/></svg>
<svg style="position:absolute;left:136px;top:50px" width="15" height="14" viewBox="0 0 15 14" shape-rendering="crispEdges" ><rect x="0" y="0" width="15" height="1" fill="#000"/><rect x="0" y="1" width="1" height="1" fill="#000"/><rect x="1" y="1" width="6" height="1" fill="#a0c8d0"/><rect x="7" y="1" width="1" height="1" fill="#808080"/><rect x="8" y="1" width="6" height="1" fill="#a0c8d0"/><rect x="14" y="1" width="1" height="1" fill="#000"/><rect x="0" y="2" width="1" height="1" fill="#000"/><rect x="1" y="2" width="1" height="1" fill="#a0c8d0"/><rect x="2" y="2" width="1" height="1" fill="#ffff00"/><rect x="3" y="2" width="1" height="1" fill="#a0c8d0"/><rect x="4" y="2" width="1" height="1" fill="#ffff00"/><rect x="5" y="2" width="2" height="1" fill="#a0c8d0"/><rect x="7" y="2" width="1" height="1" fill="#808080"/><rect x="8" y="2" width="2" height="1" fill="#a0c8d0"/><rect x="10" y="2" width="1" height="1" fill="#ffff00"/><rect x="11" y="2" width="1" height="1" fill="#a0c8d0"/><rect x="12" y="2" width="1" height="1" fill="#ffff00"/><rect x="13" y="2" width="1" height="1" fill="#a0c8d0"/><rect x="14" y="2" width="1" height="1" fill="#000"/><rect x="0" y="3" width="1" height="1" fill="#000"/><rect x="1" y="3" width="1" height="1" fill="#a0c8d0"/><rect x="2" y="3" width="1" height="1" fill="#ffff00"/><rect x="3" y="3" width="1" height="1" fill="#a0c8d0"/><rect x="4" y="3" width="1" height="1" fill="#ffff00"/><rect x="5" y="3" width="1" height="1" fill="#a0c8d0"/><rect x="6" y="3" width="1" height="1" fill="#ffff00"/><rect x="7" y="3" width="1" height="1" fill="#808080"/><rect x="8" y="3" width="1" height="1" fill="#a0c8d0"/><rect x="9" y="3" width="1" height="1" fill="#ffff00"/><rect x="10" y="3" width="2" height="1" fill="#a0c8d0"/><rect x="12" y="3" width="1" height="1" fill="#ffff00"/><rect x="13" y="3" width="1" height="1" fill="#a0c8d0"/><rect x="14" y="3" width="1" height="1" fill="#000"/><rect x="0" y="4" width="1" height="1" fill="#000"/><rect x="1" y="4" width="3" height="1" fill="#a0c8d0"/><rect x="4" y="4" width="1" height="1" fill="#ffff00"/><rect x="5" y="4" width="1" height="1" fill="#a0c8d0"/><rect x="6" y="4" width="1" height="1" fill="#ffff00"/><rect x="7" y="4" width="1" height="1" fill="#808080"/><rect x="8" y="4" width="1" height="1" fill="#a0c8d0"/><rect x="9" y="4" width="1" height="1" fill="#ffff00"/><rect x="10" y="4" width="2" height="1" fill="#a0c8d0"/><rect x="12" y="4" width="1" height="1" fill="#ffff00"/><rect x="13" y="4" width="1" height="1" fill="#a0c8d0"/><rect x="14" y="4" width="1" height="1" fill="#000"/><rect x="0" y="5" width="1" height="1" fill="#000"/><rect x="1" y="5" width="5" height="1" fill="#a0c8d0"/><rect x="6" y="5" width="1" height="1" fill="#ffff00"/><rect x="7" y="5" width="1" height="1" fill="#808080"/><rect x="8" y="5" width="6" height="1" fill="#a0c8d0"/><rect x="14" y="5" width="1" height="1" fill="#000"/><rect x="0" y="6" width="1" height="1" fill="#000"/><rect x="1" y="6" width="13" height="1" fill="#808080"/><rect x="14" y="6" width="1" height="1" fill="#000"/><rect x="0" y="7" width="1" height="1" fill="#000"/><rect x="1" y="7" width="3" height="1" fill="#a0c8d0"/><rect x="4" y="7" width="1" height="1" fill="#ffff00"/><rect x="5" y="7" width="2" height="1" fill="#a0c8d0"/><rect x="7" y="7" width="1" height="1" fill="#808080"/><rect x="8" y="7" width="6" height="1" fill="#a0c8d0"/><rect x="14" y="7" width="1" height="1" fill="#000"/><rect x="0" y="8" width="1" height="1" fill="#000"/><rect x="1" y="8" width="1" height="1" fill="#a0c8d0"/><rect x="2" y="8" width="1" height="1" fill="#ffff00"/><rect x="3" y="8" width="1" height="1" fill="#a0c8d0"/><rect x="4" y="8" width="1" height="1" fill="#ffff00"/><rect x="5" y="8" width="1" height="1" fill="#a0c8d0"/><rect x="6" y="8" width="1" height="1" fill="#ffff00"/><rect x="7" y="8" width="1" height="1" fill="#808080"/><rect x="8" y="8" width="1" height="1" fill="#a0c8d0"/><rect x="9" y="8" width="1" height="1" fill="#ffff00"/><rect x="10" y="8" width="1" height="1" fill="#a0c8d0"/><rect x="11" y="8" width="1" height="1" fill="#ffff00"/><rect x="12" y="8" width="2" height="1" fill="#a0c8d0"/><rect x="14" y="8" width="1" height="1" fill="#000"/><rect x="0" y="9" width="1" height="1" fill="#000"/><rect x="1" y="9" width="1" height="1" fill="#a0c8d0"/><rect x="2" y="9" width="1" height="1" fill="#ffff00"/><rect x="3" y="9" width="2" height="1" fill="#a0c8d0"/><rect x="5" y="9" width="1" height="1" fill="#ffff00"/><rect x="6" y="9" width="1" height="1" fill="#a0c8d0"/><rect x="7" y="9" width="1" height="1" fill="#808080"/><rect x="8" y="9" width="1" height="1" fill="#a0c8d0"/><rect x="9" y="9" width="1" height="1" fill="#ffff00"/><rect x="10" y="9" width="1" height="1" fill="#a0c8d0"/><rect x="11" y="9" width="1" height="1" fill="#ffff00"/><rect x="12" y="9" width="2" height="1" fill="#a0c8d0"/><rect x="14" y="9" width="1" height="1" fill="#000"/><rect x="0" y="10" width="1" height="1" fill="#000"/><rect x="1" y="10" width="1" height="1" fill="#a0c8d0"/><rect x="2" y="10" width="1" height="1" fill="#ffff00"/><rect x="3" y="10" width="1" height="1" fill="#a0c8d0"/><rect x="4" y="10" width="1" height="1" fill="#ffff00"/><rect x="5" y="10" width="2" height="1" fill="#a0c8d0"/><rect x="7" y="10" width="1" height="1" fill="#808080"/><rect x="8" y="10" width="3" height="1" fill="#a0c8d0"/><rect x="11" y="10" width="1" height="1" fill="#ffff00"/><rect x="12" y="10" width="2" height="1" fill="#a0c8d0"/><rect x="14" y="10" width="1" height="1" fill="#000"/><rect x="0" y="11" width="1" height="1" fill="#000"/><rect x="1" y="11" width="6" height="1" fill="#a0c8d0"/><rect x="7" y="11" width="1" height="1" fill="#808080"/><rect x="8" y="11" width="6" height="1" fill="#a0c8d0"/><rect x="14" y="11" width="1" height="1" fill="#000"/><rect x="0" y="12" width="1" height="1" fill="#000"/><rect x="1" y="12" width="13" height="1" fill="#808080"/><rect x="14" y="12" width="1" height="1" fill="#000"/><rect x="0" y="13" width="15" height="1" fill="#000"/></svg>
<svg style="position:absolute;left:157px;top:48px" width="17" height="10" viewBox="0 0 17 10" shape-rendering="crispEdges" ><rect x="6" y="0" width="2" height="1" fill="#000"/><rect x="11" y="0" width="4" height="1" fill="#ff0000"/><rect x="6" y="1" width="2" height="1" fill="#000"/><rect x="11" y="1" width="5" height="1" fill="#ff0000"/><rect x="6" y="2" width="2" height="1" fill="#000"/><rect x="11" y="2" width="2" height="1" fill="#ff0000"/><rect x="15" y="2" width="2" height="1" fill="#ff0000"/><rect x="6" y="3" width="2" height="1" fill="#000"/><rect x="11" y="3" width="2" height="1" fill="#ff0000"/><rect x="6" y="4" width="2" height="1" fill="#000"/><rect x="11" y="4" width="2" height="1" fill="#ff0000"/><rect x="6" y="5" width="2" height="1" fill="#000"/><rect x="11" y="5" width="2" height="1" fill="#ff0000"/><rect x="3" y="6" width="2" height="1" fill="#000"/><rect x="6" y="6" width="2" height="1" fill="#000"/><rect x="11" y="6" width="2" height="1" fill="#ff0000"/><rect x="4" y="7" width="4" height="1" fill="#000"/><rect x="11" y="7" width="2" height="1" fill="#ff0000"/><rect x="5" y="8" width="3" height="1" fill="#000"/><rect x="11" y="8" width="2" height="1" fill="#ff0000"/><rect x="6" y="9" width="1" height="1" fill="#000"/></svg>
<svg style="position:absolute;left:181px;top:48px" width="17" height="10" viewBox="0 0 17 10" shape-rendering="crispEdges" ><rect x="6" y="0" width="2" height="1" fill="#000"/><rect x="11" y="0" width="4" height="1" fill="#ff0000"/><rect x="6" y="1" width="2" height="1" fill="#000"/><rect x="11" y="1" width="5" height="1" fill="#ff0000"/><rect x="6" y="2" width="2" height="1" fill="#000"/><rect x="11" y="2" width="2" height="1" fill="#ff0000"/><rect x="15" y="2" width="2" height="1" fill="#ff0000"/><rect x="6" y="3" width="2" height="1" fill="#000"/><rect x="11" y="3" width="2" height="1" fill="#ff0000"/><rect x="6" y="4" width="2" height="1" fill="#000"/><rect x="11" y="4" width="2" height="1" fill="#ff0000"/><rect x="6" y="5" width="2" height="1" fill="#000"/><rect x="11" y="5" width="2" height="1" fill="#ff0000"/><rect x="3" y="6" width="2" height="1" fill="#000"/><rect x="6" y="6" width="2" height="1" fill="#000"/><rect x="11" y="6" width="2" height="1" fill="#ff0000"/><rect x="4" y="7" width="4" height="1" fill="#000"/><rect x="11" y="7" width="2" height="1" fill="#ff0000"/><rect x="5" y="8" width="3" height="1" fill="#000"/><rect x="11" y="8" width="2" height="1" fill="#ff0000"/><rect x="6" y="9" width="1" height="1" fill="#000"/></svg>
<svg style="position:absolute;left:158px;top:59px" width="20" height="7" viewBox="0 0 20 7" shape-rendering="crispEdges" ><rect x="0" y="0" width="5" height="1" fill="#0000ff"/><rect x="6" y="0" width="2" height="1" fill="#0000ff"/><rect x="10" y="0" width="2" height="1" fill="#0000ff"/><rect x="13" y="0" width="2" height="1" fill="#0000ff"/><rect x="18" y="0" width="2" height="1" fill="#0000ff"/><rect x="0" y="1" width="2" height="1" fill="#0000ff"/><rect x="7" y="1" width="2" height="1" fill="#0000ff"/><rect x="10" y="1" width="2" height="1" fill="#0000ff"/><rect x="13" y="1" width="3" height="1" fill="#0000ff"/><rect x="17" y="1" width="3" height="1" fill="#0000ff"/><rect x="0" y="2" width="2" height="1" fill="#0000ff"/><rect x="8" y="2" width="3" height="1" fill="#0000ff"/><rect x="13" y="2" width="7" height="1" fill="#0000ff"/><rect x="0" y="3" width="5" height="1" fill="#0000ff"/><rect x="9" y="3" width="1" height="1" fill="#0000ff"/><rect x="13" y="3" width="2" height="1" fill="#0000ff"/><rect x="16" y="3" width="1" height="1" fill="#0000ff"/><rect x="18" y="3" width="2" height="1" fill="#0000ff"/><rect x="3" y="4" width="2" height="1" fill="#0000ff"/><rect x="9" y="4" width="1" height="1" fill="#0000ff"/><rect x="13" y="4" width="2" height="1" fill="#0000ff"/><rect x="18" y="4" width="2" height="1" fill="#0000ff"/><rect x="3" y="5" width="2" height="1" fill="#0000ff"/><rect x="9" y="5" width="1" height="1" fill="#0000ff"/><rect x="13" y="5" width="2" height="1" fill="#0000ff"/><rect x="18" y="5" width="2" height="1" fill="#0000ff"/><rect x="0" y="6" width="5" height="1" fill="#0000ff"/><rect x="8" y="6" width="2" height="1" fill="#0000ff"/><rect x="13" y="6" width="2" height="1" fill="#0000ff"/><rect x="18" y="6" width="2" height="1" fill="#0000ff"/></svg>
<svg style="position:absolute;left:183px;top:60px" width="16" height="6" viewBox="0 0 16 6" shape-rendering="crispEdges" ><rect x="0" y="0" width="3" height="1" fill="#0000ff"/><rect x="4" y="0" width="1" height="1" fill="#0000ff"/><rect x="6" y="0" width="1" height="1" fill="#0000ff"/><rect x="10" y="0" width="1" height="1" fill="#0000ff"/><rect x="12" y="0" width="4" height="1" fill="#0000ff"/><rect x="1" y="1" width="1" height="1" fill="#0000ff"/><rect x="6" y="1" width="2" height="1" fill="#0000ff"/><rect x="9" y="1" width="2" height="1" fill="#0000ff"/><rect x="12" y="1" width="1" height="1" fill="#0000ff"/><rect x="1" y="2" width="1" height="1" fill="#0000ff"/><rect x="4" y="2" width="1" height="1" fill="#0000ff"/><rect x="6" y="2" width="1" height="1" fill="#0000ff"/><rect x="8" y="2" width="1" height="1" fill="#0000ff"/><rect x="10" y="2" width="1" height="1" fill="#0000ff"/><rect x="12" y="2" width="3" height="1" fill="#0000ff"/><rect x="1" y="3" width="1" height="1" fill="#0000ff"/><rect x="4" y="3" width="1" height="1" fill="#0000ff"/><rect x="6" y="3" width="1" height="1" fill="#0000ff"/><rect x="10" y="3" width="1" height="1" fill="#0000ff"/><rect x="12" y="3" width="1" height="1" fill="#0000ff"/><rect x="1" y="4" width="1" height="1" fill="#0000ff"/><rect x="4" y="4" width="1" height="1" fill="#0000ff"/><rect x="6" y="4" width="1" height="1" fill="#0000ff"/><rect x="10" y="4" width="1" height="1" fill="#0000ff"/><rect x="12" y="4" width="1" height="1" fill="#0000ff"/><rect x="1" y="5" width="1" height="1" fill="#0000ff"/><rect x="4" y="5" width="1" height="1" fill="#0000ff"/><rect x="6" y="5" width="1" height="1" fill="#0000ff"/><rect x="10" y="5" width="1" height="1" fill="#0000ff"/><rect x="12" y="5" width="4" height="1" fill="#0000ff"/></svg>
<svg style="position:absolute;left:207px;top:61px" width="5" height="3" viewBox="0 0 5 3" shape-rendering="crispEdges" ><path d="M0 0 H5 V1 H4 V2 H3 V3 H2 V2 H1 V1 H0 Z" fill="#000"/></svg>
<svg style="position:absolute;left:233px;top:49px" width="15" height="15" viewBox="0 0 15 15" shape-rendering="crispEdges" ><rect x="6" y="0" width="8" height="7" fill="#f00" stroke="#000" transform="translate(0.5,0.5)"/><rect x="4" y="2" width="8" height="7" fill="#0f0" stroke="#000" transform="translate(0.5,0.5)"/><rect x="2" y="4" width="8" height="7" fill="#0ff" stroke="#000" transform="translate(0.5,0.5)"/><rect x="0" y="6" width="8" height="7" fill="#ff0" stroke="#000" transform="translate(0.5,0.5)"/></svg>
<svg style="position:absolute;left:256px;top:49px" width="18" height="16" viewBox="0 0 18 16" shape-rendering="crispEdges" ><rect x="5" y="0" width="8" height="7" fill="#0f0" stroke="#000" transform="translate(0.5,0.5)"/><rect x="3" y="2" width="8" height="7" fill="#0ff" stroke="#000" transform="translate(0.5,0.5)"/><rect x="0" y="6" width="8" height="7" fill="#ff0" stroke="#000" transform="translate(0.5,0.5)"/><path d="M10 13 H17 M13 10 V16" stroke="#000" stroke-width="2"/></svg>
<svg style="position:absolute;left:279px;top:50px" width="18" height="14" viewBox="0 0 18 14" shape-rendering="crispEdges" ><path d="M0 7 H18" stroke="#000"/><path d="M2 3 L6 7 L2 11 M16 3 L12 7 L16 11" stroke="#000" fill="none"/><path d="M7 0 V14 M10 0 V14" stroke="#00f" stroke-width="1"/></svg>
<svg style="position:absolute;left:304px;top:50px" width="16" height="14" viewBox="0 0 16 14" shape-rendering="crispEdges" ><path d="M1 7 H15" stroke="#000"/><path d="M5 3 L1 7 L5 11 M11 3 L15 7 L11 11" stroke="#000" fill="none"/><path d="M1 0 V14 M15 0 V14" stroke="#00f"/></svg>
<svg style="position:absolute;left:327px;top:50px" width="18" height="14" viewBox="0 0 18 14" shape-rendering="crispEdges" ><path d="M0 7 H18" stroke="#000"/><path d="M4 3 L0 7 L4 11 M14 3 L18 7 L14 11" stroke="#000" fill="none"/><rect x="7" y="1" width="4" height="12" fill="#00f"/></svg>
<svg style="position:absolute;left:352px;top:50px" width="16" height="14" viewBox="0 0 16 14" shape-rendering="crispEdges" ><path d="M0 7 H16" stroke="#000"/><path d="M2 3 L6 7 L2 11 M14 3 L10 7 L14 11" stroke="#000" fill="none"/><path d="M8 0 V14" stroke="#00f"/></svg>
<div style="position:absolute;left:375px;top:47px;width:1px;height:21px;background:#4E8E86"></div>
<div style="position:absolute;left:376px;top:47px;width:1px;height:21px;background:#D6EAE6"></div>
<svg style="position:absolute;left:383px;top:47px" width="14" height="17" viewBox="0 0 14 17" shape-rendering="crispEdges" ><rect x="11" y="0" width="1" height="1" fill="#0000ff"/><rect x="10" y="1" width="3" height="1" fill="#0000ff"/><rect x="9" y="2" width="3" height="1" fill="#0000ff"/><rect x="10" y="3" width="1" height="1" fill="#0000ff"/><rect x="9" y="6" width="2" height="1" fill="#0000ff"/><rect x="8" y="7" width="3" height="1" fill="#0000ff"/><rect x="7" y="8" width="3" height="1" fill="#0000ff"/><rect x="6" y="9" width="3" height="1" fill="#0000ff"/><rect x="5" y="10" width="3" height="1" fill="#0000ff"/><rect x="4" y="11" width="3" height="1" fill="#0000ff"/><rect x="3" y="12" width="3" height="1" fill="#0000ff"/><rect x="9" y="12" width="1" height="1" fill="#0000ff"/><rect x="2" y="13" width="3" height="1" fill="#0000ff"/><rect x="8" y="13" width="2" height="1" fill="#0000ff"/><rect x="1" y="14" width="3" height="1" fill="#0000ff"/><rect x="7" y="14" width="3" height="1" fill="#0000ff"/><rect x="1" y="15" width="8" height="1" fill="#0000ff"/><rect x="0" y="16" width="7" height="1" fill="#0000ff"/></svg>
<svg style="position:absolute;left:405px;top:49px" width="17" height="13" viewBox="0 0 17 13" shape-rendering="crispEdges" ><rect x="3" y="0" width="14" height="1" fill="#0000ff"/><rect x="2" y="1" width="2" height="1" fill="#0000ff"/><rect x="8" y="1" width="3" height="1" fill="#0000ff"/><rect x="15" y="1" width="2" height="1" fill="#0000ff"/><rect x="1" y="2" width="2" height="1" fill="#0000ff"/><rect x="8" y="2" width="3" height="1" fill="#0000ff"/><rect x="15" y="2" width="1" height="1" fill="#0000ff"/><rect x="8" y="3" width="2" height="1" fill="#0000ff"/><rect x="7" y="4" width="3" height="1" fill="#0000ff"/><rect x="7" y="5" width="3" height="1" fill="#0000ff"/><rect x="7" y="6" width="2" height="1" fill="#0000ff"/><rect x="6" y="7" width="3" height="1" fill="#0000ff"/><rect x="6" y="8" width="3" height="1" fill="#0000ff"/><rect x="6" y="9" width="2" height="1" fill="#0000ff"/><rect x="5" y="10" width="3" height="1" fill="#0000ff"/><rect x="2" y="11" width="8" height="1" fill="#0000ff"/><rect x="2" y="12" width="8" height="1" fill="#0000ff"/></svg>
<svg style="position:absolute;left:431px;top:49px" width="15" height="15" viewBox="0 0 15 15" shape-rendering="crispEdges" ><rect x="0" y="0" width="1" height="1" fill="none"/><rect x="1" y="0" width="13" height="1" fill="#000"/><rect x="14" y="0" width="1" height="1" fill="none"/><rect x="0" y="1" width="4" height="1" fill="#000"/><rect x="4" y="1" width="1" height="1" fill="none"/><rect x="5" y="1" width="1" height="1" fill="#000"/><rect x="6" y="1" width="3" height="1" fill="#ff0000"/><rect x="9" y="1" width="1" height="1" fill="#000"/><rect x="10" y="1" width="1" height="1" fill="none"/><rect x="11" y="1" width="4" height="1" fill="#000"/><rect x="0" y="2" width="1" height="1" fill="none"/><rect x="1" y="2" width="4" height="1" fill="#000"/><rect x="5" y="2" width="5" height="1" fill="#ff0000"/><rect x="10" y="2" width="4" height="1" fill="#000"/><rect x="14" y="2" width="1" height="1" fill="none"/><rect x="0" y="3" width="2" height="1" fill="none"/><rect x="2" y="3" width="4" height="1" fill="#000"/><rect x="6" y="3" width="3" height="1" fill="#ff0000"/><rect x="9" y="3" width="4" height="1" fill="#000"/><rect x="13" y="3" width="2" height="1" fill="none"/><rect x="0" y="4" width="15" height="1" fill="#000"/><rect x="0" y="5" width="4" height="1" fill="#000"/><rect x="4" y="5" width="1" height="1" fill="none"/><rect x="5" y="5" width="1" height="1" fill="#000"/><rect x="6" y="5" width="3" height="1" fill="#ffff00"/><rect x="9" y="5" width="1" height="1" fill="#000"/><rect x="10" y="5" width="1" height="1" fill="none"/><rect x="11" y="5" width="4" height="1" fill="#000"/><rect x="0" y="6" width="1" height="1" fill="none"/><rect x="1" y="6" width="4" height="1" fill="#000"/><rect x="5" y="6" width="5" height="1" fill="#ffff00"/><rect x="10" y="6" width="4" height="1" fill="#000"/><rect x="14" y="6" width="1" height="1" fill="none"/><rect x="0" y="7" width="2" height="1" fill="none"/><rect x="2" y="7" width="4" height="1" fill="#000"/><rect x="6" y="7" width="3" height="1" fill="#ffff00"/><rect x="9" y="7" width="4" height="1" fill="#000"/><rect x="13" y="7" width="2" height="1" fill="none"/><rect x="0" y="8" width="15" height="1" fill="#000"/><rect x="0" y="9" width="4" height="1" fill="#000"/><rect x="4" y="9" width="1" height="1" fill="none"/><rect x="5" y="9" width="1" height="1" fill="#000"/><rect x="6" y="9" width="3" height="1" fill="#00e000"/><rect x="9" y="9" width="1" height="1" fill="#000"/><rect x="10" y="9" width="1" height="1" fill="none"/><rect x="11" y="9" width="4" height="1" fill="#000"/><rect x="0" y="10" width="1" height="1" fill="none"/><rect x="1" y="10" width="4" height="1" fill="#000"/><rect x="5" y="10" width="5" height="1" fill="#00e000"/><rect x="10" y="10" width="4" height="1" fill="#000"/><rect x="14" y="10" width="1" height="1" fill="none"/><rect x="0" y="11" width="2" height="1" fill="none"/><rect x="2" y="11" width="4" height="1" fill="#000"/><rect x="6" y="11" width="3" height="1" fill="#00e000"/><rect x="9" y="11" width="4" height="1" fill="#000"/><rect x="13" y="11" width="2" height="1" fill="none"/><rect x="0" y="12" width="3" height="1" fill="none"/><rect x="3" y="12" width="9" height="1" fill="#000"/><rect x="12" y="12" width="3" height="1" fill="none"/><rect x="0" y="13" width="4" height="1" fill="none"/><rect x="4" y="13" width="7" height="1" fill="#000"/><rect x="11" y="13" width="4" height="1" fill="none"/><rect x="0" y="14" width="6" height="1" fill="none"/><rect x="6" y="14" width="3" height="1" fill="#000"/><rect x="9" y="14" width="6" height="1" fill="none"/></svg>
<div style="position:absolute;left:453px;top:47px;width:1px;height:21px;background:#4E8E86"></div>
<div style="position:absolute;left:454px;top:47px;width:1px;height:21px;background:#D6EAE6"></div>
<svg style="position:absolute;left:460px;top:50px" width="17" height="11" viewBox="0 0 17 11" shape-rendering="crispEdges" ><rect x="5" y="0" width="9" height="1" fill="#000"/><rect x="4" y="1" width="1" height="1" fill="#000"/><rect x="5" y="1" width="8" height="1" fill="#f0f0f0"/><rect x="13" y="1" width="1" height="1" fill="#000"/><rect x="3" y="2" width="1" height="1" fill="#000"/><rect x="4" y="2" width="1" height="1" fill="#f0f0f0"/><rect x="5" y="2" width="6" height="1" fill="#000"/><rect x="11" y="2" width="1" height="1" fill="#f0f0f0"/><rect x="12" y="2" width="1" height="1" fill="#000"/><rect x="2" y="3" width="1" height="1" fill="#000"/><rect x="3" y="3" width="9" height="1" fill="#f0f0f0"/><rect x="12" y="3" width="3" height="1" fill="#000"/><rect x="1" y="4" width="12" height="1" fill="#000"/><rect x="13" y="4" width="1" height="1" fill="#f0f0f0"/><rect x="14" y="4" width="2" height="1" fill="#000"/><rect x="0" y="5" width="1" height="1" fill="#000"/><rect x="1" y="5" width="11" height="1" fill="#f0f0f0"/><rect x="12" y="5" width="1" height="1" fill="#000"/><rect x="13" y="5" width="2" height="1" fill="#f0f0f0"/><rect x="15" y="5" width="1" height="1" fill="#000"/><rect x="0" y="6" width="13" height="1" fill="#000"/><rect x="13" y="6" width="1" height="1" fill="#f0f0f0"/><rect x="14" y="6" width="2" height="1" fill="#000"/><rect x="0" y="7" width="1" height="1" fill="#000"/><rect x="1" y="7" width="11" height="1" fill="#f0f0f0"/><rect x="12" y="7" width="1" height="1" fill="#000"/><rect x="13" y="7" width="2" height="1" fill="#f0f0f0"/><rect x="15" y="7" width="1" height="1" fill="#000"/><rect x="0" y="8" width="13" height="1" fill="#000"/><rect x="13" y="8" width="1" height="1" fill="#f0f0f0"/><rect x="14" y="8" width="1" height="1" fill="#000"/><rect x="0" y="9" width="1" height="1" fill="#000"/><rect x="1" y="9" width="11" height="1" fill="#f0f0f0"/><rect x="12" y="9" width="2" height="1" fill="#000"/><rect x="1" y="10" width="12" height="1" fill="#000"/></svg>
<svg style="position:absolute;left:484px;top:49px" width="18" height="13" viewBox="0 0 18 13" shape-rendering="crispEdges" ><rect x="1" y="0" width="11" height="1" fill="#000"/><rect x="0" y="1" width="1" height="1" fill="#000"/><rect x="1" y="1" width="11" height="1" fill="#0000a0"/><rect x="12" y="1" width="1" height="1" fill="#000"/><rect x="0" y="2" width="1" height="1" fill="#000"/><rect x="1" y="2" width="6" height="1" fill="#f0f0f0"/><rect x="7" y="2" width="10" height="1" fill="#000"/><rect x="0" y="3" width="1" height="1" fill="#000"/><rect x="1" y="3" width="1" height="1" fill="#f0f0f0"/><rect x="2" y="3" width="2" height="1" fill="#a00000"/><rect x="4" y="3" width="2" height="1" fill="#f0f0f0"/><rect x="6" y="3" width="1" height="1" fill="#000"/><rect x="7" y="3" width="10" height="1" fill="#0000a0"/><rect x="17" y="3" width="1" height="1" fill="#000"/><rect x="0" y="4" width="1" height="1" fill="#000"/><rect x="1" y="4" width="1" height="1" fill="#a00000"/><rect x="2" y="4" width="2" height="1" fill="#f0f0f0"/><rect x="4" y="4" width="1" height="1" fill="#a00000"/><rect x="5" y="4" width="1" height="1" fill="#f0f0f0"/><rect x="6" y="4" width="1" height="1" fill="#000"/><rect x="7" y="4" width="10" height="1" fill="#f0f0f0"/><rect x="17" y="4" width="1" height="1" fill="#000"/><rect x="0" y="5" width="1" height="1" fill="#000"/><rect x="1" y="5" width="1" height="1" fill="#f0f0f0"/><rect x="2" y="5" width="2" height="1" fill="#a00000"/><rect x="4" y="5" width="2" height="1" fill="#f0f0f0"/><rect x="6" y="5" width="1" height="1" fill="#000"/><rect x="7" y="5" width="1" height="1" fill="#f0f0f0"/><rect x="8" y="5" width="5" height="1" fill="#a00000"/><rect x="13" y="5" width="4" height="1" fill="#f0f0f0"/><rect x="17" y="5" width="1" height="1" fill="#000"/><rect x="0" y="6" width="1" height="1" fill="#000"/><rect x="1" y="6" width="1" height="1" fill="#a00000"/><rect x="2" y="6" width="2" height="1" fill="#f0f0f0"/><rect x="4" y="6" width="1" height="1" fill="#a00000"/><rect x="5" y="6" width="1" height="1" fill="#f0f0f0"/><rect x="6" y="6" width="1" height="1" fill="#000"/><rect x="7" y="6" width="5" height="1" fill="#f0f0f0"/><rect x="12" y="6" width="1" height="1" fill="#a00000"/><rect x="13" y="6" width="4" height="1" fill="#f0f0f0"/><rect x="17" y="6" width="1" height="1" fill="#000"/><rect x="0" y="7" width="1" height="1" fill="#000"/><rect x="1" y="7" width="1" height="1" fill="#f0f0f0"/><rect x="2" y="7" width="2" height="1" fill="#a00000"/><rect x="4" y="7" width="2" height="1" fill="#f0f0f0"/><rect x="6" y="7" width="1" height="1" fill="#000"/><rect x="7" y="7" width="4" height="1" fill="#f0f0f0"/><rect x="11" y="7" width="1" height="1" fill="#a00000"/><rect x="12" y="7" width="5" height="1" fill="#f0f0f0"/><rect x="17" y="7" width="1" height="1" fill="#000"/><rect x="0" y="8" width="1" height="1" fill="#000"/><rect x="1" y="8" width="5" height="1" fill="#f0f0f0"/><rect x="6" y="8" width="1" height="1" fill="#000"/><rect x="7" y="8" width="3" height="1" fill="#f0f0f0"/><rect x="10" y="8" width="1" height="1" fill="#a00000"/><rect x="11" y="8" width="6" height="1" fill="#f0f0f0"/><rect x="17" y="8" width="1" height="1" fill="#000"/><rect x="0" y="9" width="1" height="1" fill="#000"/><rect x="1" y="9" width="5" height="1" fill="#f0f0f0"/><rect x="6" y="9" width="1" height="1" fill="#000"/><rect x="7" y="9" width="2" height="1" fill="#f0f0f0"/><rect x="9" y="9" width="1" height="1" fill="#a00000"/><rect x="10" y="9" width="7" height="1" fill="#f0f0f0"/><rect x="17" y="9" width="1" height="1" fill="#000"/><rect x="0" y="10" width="7" height="1" fill="#000"/><rect x="7" y="10" width="10" height="1" fill="#f0f0f0"/><rect x="17" y="10" width="1" height="1" fill="#000"/><rect x="6" y="11" width="1" height="1" fill="#000"/><rect x="7" y="11" width="10" height="1" fill="#f0f0f0"/><rect x="17" y="11" width="1" height="1" fill="#000"/><rect x="6" y="12" width="12" height="1" fill="#000"/></svg>
<svg style="position:absolute;left:511px;top:49px" width="12" height="15" viewBox="0 0 12 15" shape-rendering="crispEdges" ><rect x="4" y="0" width="3" height="1" fill="#0000ff"/><rect x="3" y="1" width="6" height="1" fill="#0000ff"/><rect x="1" y="2" width="10" height="1" fill="#0000ff"/><rect x="0" y="3" width="4" height="1" fill="#0000ff"/><rect x="5" y="3" width="2" height="1" fill="#0000ff"/><rect x="8" y="3" width="4" height="1" fill="#0000ff"/><rect x="0" y="4" width="4" height="1" fill="#0000ff"/><rect x="5" y="4" width="2" height="1" fill="#0000ff"/><rect x="9" y="4" width="2" height="1" fill="#0000ff"/><rect x="0" y="5" width="7" height="1" fill="#0000ff"/><rect x="1" y="6" width="8" height="1" fill="#0000ff"/><rect x="3" y="7" width="8" height="1" fill="#0000ff"/><rect x="5" y="8" width="7" height="1" fill="#0000ff"/><rect x="0" y="9" width="2" height="1" fill="#0000ff"/><rect x="5" y="9" width="2" height="1" fill="#0000ff"/><rect x="8" y="9" width="4" height="1" fill="#0000ff"/><rect x="0" y="10" width="4" height="1" fill="#0000ff"/><rect x="5" y="10" width="2" height="1" fill="#0000ff"/><rect x="8" y="10" width="4" height="1" fill="#0000ff"/><rect x="1" y="11" width="10" height="1" fill="#0000ff"/><rect x="2" y="12" width="8" height="1" fill="#0000ff"/><rect x="4" y="13" width="3" height="1" fill="#0000ff"/><rect x="4" y="14" width="3" height="1" fill="#0000ff"/></svg>
<div style="position:absolute;left:531px;top:47px;width:1px;height:21px;background:#4E8E86"></div>
<div style="position:absolute;left:532px;top:47px;width:1px;height:21px;background:#D6EAE6"></div>
<svg style="position:absolute;left:539px;top:50px" width="14" height="13" viewBox="0 0 14 13" shape-rendering="crispEdges" ><rect x="0" y="0" width="14" height="1" fill="#000"/><rect x="0" y="1" width="1" height="1" fill="#000"/><rect x="1" y="1" width="12" height="1" fill="#ffff00"/><rect x="13" y="1" width="1" height="1" fill="#000"/><rect x="0" y="2" width="1" height="1" fill="#000"/><rect x="1" y="2" width="1" height="1" fill="#ffff00"/><rect x="2" y="2" width="1" height="1" fill="#000"/><rect x="3" y="2" width="2" height="1" fill="#ffff00"/><rect x="5" y="2" width="1" height="1" fill="#000"/><rect x="6" y="2" width="2" height="1" fill="#ffff00"/><rect x="8" y="2" width="1" height="1" fill="#000"/><rect x="9" y="2" width="2" height="1" fill="#ffff00"/><rect x="11" y="2" width="1" height="1" fill="#000"/><rect x="12" y="2" width="1" height="1" fill="#ffff00"/><rect x="13" y="2" width="1" height="1" fill="#000"/><rect x="0" y="3" width="1" height="1" fill="#000"/><rect x="1" y="3" width="1" height="1" fill="#ffff00"/><rect x="2" y="3" width="1" height="1" fill="#000"/><rect x="3" y="3" width="2" height="1" fill="#ffff00"/><rect x="5" y="3" width="1" height="1" fill="#000"/><rect x="6" y="3" width="2" height="1" fill="#ffff00"/><rect x="8" y="3" width="1" height="1" fill="#000"/><rect x="9" y="3" width="2" height="1" fill="#ffff00"/><rect x="11" y="3" width="1" height="1" fill="#000"/><rect x="12" y="3" width="1" height="1" fill="#ffff00"/><rect x="13" y="3" width="1" height="1" fill="#000"/><rect x="0" y="4" width="1" height="1" fill="#000"/><rect x="1" y="4" width="12" height="1" fill="#ffff00"/><rect x="13" y="4" width="1" height="1" fill="#000"/><rect x="0" y="5" width="7" height="1" fill="#000"/><rect x="7" y="5" width="6" height="1" fill="#ffff00"/><rect x="13" y="5" width="1" height="1" fill="#000"/><rect x="6" y="6" width="1" height="1" fill="#000"/><rect x="7" y="6" width="6" height="1" fill="#ffff00"/><rect x="13" y="6" width="1" height="1" fill="#000"/><rect x="6" y="7" width="1" height="1" fill="#000"/><rect x="7" y="7" width="2" height="1" fill="#ffff00"/><rect x="9" y="7" width="3" height="1" fill="#000"/><rect x="12" y="7" width="1" height="1" fill="#ffff00"/><rect x="13" y="7" width="1" height="1" fill="#000"/><rect x="6" y="8" width="1" height="1" fill="#000"/><rect x="7" y="8" width="6" height="1" fill="#ffff00"/><rect x="13" y="8" width="1" height="1" fill="#000"/><rect x="6" y="9" width="1" height="1" fill="#000"/><rect x="7" y="9" width="2" height="1" fill="#ffff00"/><rect x="9" y="9" width="3" height="1" fill="#000"/><rect x="12" y="9" width="1" height="1" fill="#ffff00"/><rect x="13" y="9" width="1" height="1" fill="#000"/><rect x="6" y="10" width="1" height="1" fill="#000"/><rect x="7" y="10" width="6" height="1" fill="#ffff00"/><rect x="13" y="10" width="1" height="1" fill="#000"/><rect x="6" y="11" width="1" height="1" fill="#000"/><rect x="7" y="11" width="6" height="1" fill="#ffff00"/><rect x="13" y="11" width="1" height="1" fill="#000"/><rect x="6" y="12" width="8" height="1" fill="#000"/></svg>
<svg style="position:absolute;left:562px;top:49px" width="17" height="16" viewBox="0 0 17 16" shape-rendering="crispEdges" ><rect x="2" y="0" width="1" height="1" fill="#0000a0"/><rect x="13" y="0" width="4" height="1" fill="#000"/><rect x="2" y="1" width="1" height="1" fill="#0000a0"/><rect x="7" y="1" width="1" height="1" fill="#ff0000"/><rect x="13" y="1" width="4" height="1" fill="#000"/><rect x="2" y="2" width="3" height="1" fill="#0000a0"/><rect x="7" y="2" width="1" height="1" fill="#ff0000"/><rect x="13" y="2" width="4" height="1" fill="#000"/><rect x="2" y="3" width="1" height="1" fill="#0000a0"/><rect x="7" y="3" width="1" height="1" fill="#ff0000"/><rect x="13" y="3" width="4" height="1" fill="#000"/><rect x="2" y="4" width="1" height="1" fill="#0000a0"/><rect x="7" y="4" width="1" height="1" fill="#ff0000"/><rect x="13" y="4" width="4" height="1" fill="#000"/><rect x="2" y="5" width="1" height="1" fill="#0000a0"/><rect x="5" y="5" width="5" height="1" fill="#ff0000"/><rect x="13" y="5" width="4" height="1" fill="#000"/><rect x="2" y="6" width="1" height="1" fill="#0000a0"/><rect x="5" y="6" width="1" height="1" fill="#ff0000"/><rect x="6" y="6" width="3" height="1" fill="#d0d8d8"/><rect x="9" y="6" width="1" height="1" fill="#ff0000"/><rect x="13" y="6" width="4" height="1" fill="#000"/><rect x="2" y="7" width="1" height="1" fill="#0000a0"/><rect x="5" y="7" width="1" height="1" fill="#ff0000"/><rect x="6" y="7" width="3" height="1" fill="#d0d8d8"/><rect x="9" y="7" width="1" height="1" fill="#ff0000"/><rect x="13" y="7" width="4" height="1" fill="#000"/><rect x="2" y="8" width="1" height="1" fill="#0000a0"/><rect x="5" y="8" width="1" height="1" fill="#ff0000"/><rect x="6" y="8" width="3" height="1" fill="#d0d8d8"/><rect x="9" y="8" width="1" height="1" fill="#ff0000"/><rect x="13" y="8" width="4" height="1" fill="#000"/><rect x="2" y="9" width="1" height="1" fill="#0000a0"/><rect x="5" y="9" width="1" height="1" fill="#ff0000"/><rect x="6" y="9" width="3" height="1" fill="#d0d8d8"/><rect x="9" y="9" width="1" height="1" fill="#ff0000"/><rect x="14" y="9" width="2" height="1" fill="#000"/><rect x="2" y="10" width="1" height="1" fill="#0000a0"/><rect x="5" y="10" width="5" height="1" fill="#ff0000"/><rect x="2" y="11" width="1" height="1" fill="#0000a0"/><rect x="7" y="11" width="1" height="1" fill="#ff0000"/><rect x="0" y="12" width="3" height="1" fill="#0000a0"/><rect x="7" y="12" width="1" height="1" fill="#ff0000"/><rect x="2" y="13" width="1" height="1" fill="#0000a0"/><rect x="7" y="13" width="1" height="1" fill="#ff0000"/><rect x="2" y="14" width="1" height="1" fill="#0000a0"/><rect x="7" y="14" width="1" height="1" fill="#ff0000"/><rect x="7" y="15" width="1" height="1" fill="#ff0000"/></svg>
<svg style="position:absolute;left:586px;top:62px" width="5" height="3" viewBox="0 0 5 3" shape-rendering="crispEdges" ><path d="M0 0 H5 V1 H4 V2 H3 V3 H2 V2 H1 V1 H0 Z" fill="#000"/></svg>
<svg style="position:absolute;left:610px;top:48px" width="20" height="18" viewBox="0 0 20 18" shape-rendering="crispEdges" ><rect x="0" y="5" width="10" height="12" fill="none" stroke="#00f" transform="translate(0.5,0.5)"/><rect x="9" y="0" width="10" height="12" fill="none" stroke="#00f" transform="translate(0.5,0.5)"/><path d="M2 8 V14 M4 7 V12 M6 9 V16 M8 6 V12 M11 3 V10 M13 2 V8 M15 5 V10 M17 1 V6" stroke="#000"/></svg>
<svg style="position:absolute;left:635px;top:48px" width="19" height="17" viewBox="0 0 19 17" shape-rendering="crispEdges" ><path d="M0 5 H19" stroke="#f00" stroke-width="2"/><path d="M4 1 H6 M9 1 H11 M13 1 H15 M5 9 H7 M9 9 H11 M13 9 H15" stroke="#f00" stroke-width="2"/><path d="M0 13 H10" stroke="#008000" stroke-width="2"/><path d="M0 9 H2 M4 9 H5 M0 16 H2 M4 16 H6 M8 16 H9" stroke="#008000" stroke-width="1.5"/><path d="M3 8 V17 M11 1 V13" stroke="#ff0" stroke-width="2"/></svg>
<div style="position:absolute;left:660px;top:47px;width:1px;height:21px;background:#4E8E86"></div>
<div style="position:absolute;left:661px;top:47px;width:1px;height:21px;background:#D6EAE6"></div>
<svg style="position:absolute;left:667px;top:48px" width="18" height="17" viewBox="0 0 18 17" shape-rendering="crispEdges" ><path d="M1 6 H18" stroke="#f00" stroke-width="2"/><path d="M6 2 H8 M10 2 H12 M14 2 H16 M6 10 H8 M10 10 H12 M14 10 H16" stroke="#f00" stroke-width="2"/><path d="M1 6 V17 M1 12 H3" stroke="#ff0" stroke-width="2"/></svg>
<div style="position:absolute;left:715px;top:47px;width:1px;height:21px;background:#4E8E86"></div>
<div style="position:absolute;left:716px;top:47px;width:1px;height:21px;background:#D6EAE6"></div>
<svg style="position:absolute;left:723px;top:48px" width="18" height="17" viewBox="0 0 18 17" shape-rendering="crispEdges" ><path d="M1 6 H18" stroke="#000080" stroke-width="2"/><path d="M6 2 H8 M10 2 H12 M14 2 H16 M6 10 H8 M10 10 H12 M14 10 H16" stroke="#000080" stroke-width="2"/><path d="M1 6 V17 M1 12 H3" stroke="#ff0" stroke-width="2"/></svg>
<div style="position:absolute;left:772px;top:47px;width:1px;height:21px;background:#4E8E86"></div>
<div style="position:absolute;left:773px;top:47px;width:1px;height:21px;background:#D6EAE6"></div>
<div style="position:absolute;left:828px;top:47px;width:1px;height:21px;background:#4E8E86"></div>
<div style="position:absolute;left:829px;top:47px;width:1px;height:21px;background:#D6EAE6"></div>
<svg style="position:absolute;left:860px;top:62px" width="5" height="3" viewBox="0 0 5 3" shape-rendering="crispEdges" ><path d="M0 0 H5 V1 H4 V2 H3 V3 H2 V2 H1 V1 H0 Z" fill="#000"/></svg>
<svg style="position:absolute;left:14px;top:77px" width="19" height="18" viewBox="0 0 19 18" shape-rendering="crispEdges" ><polyline points="0.5,4.5 4.5,0.5 6.5,0.5 10.5,3.5 11.5,5.5 11.5,8.5 12.5,10.5 13.5,11.5 18.5,11.5" stroke="#ff00ff" fill="none"/><polyline points="0.5,10.5 4.5,6.5 6.5,6.5 9.5,9.5 10.5,11.5 11.5,13.5 13.5,16.5 18.5,16.5" stroke="#ff00ff" fill="none"/><path d="M0.5 5.5 L14.5 0.5 M0.5 13.5 L18.5 6.5" stroke="#0000ff" stroke-width="1.4"/></svg>
<div style="position:absolute;left:37px;top:76px;width:1px;height:21px;background:#4E8E86"></div>
<div style="position:absolute;left:38px;top:76px;width:1px;height:21px;background:#D6EAE6"></div>
<svg style="position:absolute;left:44px;top:77px" width="18" height="18" viewBox="0 0 18 18" shape-rendering="crispEdges" ><circle cx="4.5" cy="4.5" r="4.5" fill="#ff0" shape-rendering="auto"/><rect x="9" y="9" width="2" height="2" fill="#f0f"/><circle cx="13" cy="13" r="2" fill="#00f" shape-rendering="auto"/><path d="M15 16 H18 M16.5 14.5 V17.5" stroke="#f00"/></svg>
<svg style="position:absolute;left:68px;top:77px" width="18" height="18" viewBox="0 0 18 18" shape-rendering="crispEdges" ><circle cx="4.5" cy="4.5" r="4.5" fill="#ff0" shape-rendering="auto"/><text x="0" y="18" font-family="Liberation Sans" font-size="9" fill="#000">R</text><rect x="9" y="9" width="2" height="2" fill="#f0f"/><circle cx="13" cy="13" r="2" fill="#00f" shape-rendering="auto"/><path d="M15 16 H18 M16.5 14.5 V17.5" stroke="#f00"/></svg>
<div style="position:absolute;left:92px;top:76px;width:1px;height:21px;background:#4E8E86"></div>
<div style="position:absolute;left:93px;top:76px;width:1px;height:21px;background:#D6EAE6"></div>
<svg style="position:absolute;left:99px;top:77px" width="17" height="17" viewBox="0 0 17 17" shape-rendering="crispEdges" ><polygon points="5.19,0.50 11.81,0.50 16.50,5.19 16.50,11.81 11.81,16.50 5.19,16.50 0.50,11.81 0.50,5.19" fill="none" stroke="#000" stroke-width="1.1"/><polygon points="6.02,2.50 10.98,2.50 14.50,6.02 14.50,10.98 10.98,14.50 6.02,14.50 2.50,10.98 2.50,6.02" fill="none" stroke="#0000ff" stroke-width="1.1"/><polygon points="6.84,4.50 10.16,4.50 12.50,6.84 12.50,10.16 10.16,12.50 6.84,12.50 4.50,10.16 4.50,6.84" fill="none" stroke="#ff0000" stroke-width="1.1"/><polygon points="7.67,6.50 9.33,6.50 10.50,7.67 10.50,9.33 9.33,10.50 7.67,10.50 6.50,9.33 6.50,7.67" fill="none" stroke="#ff00ff" stroke-width="1.1"/></svg>
<svg style="position:absolute;left:122px;top:77px" width="19" height="19" viewBox="0 0 19 19" shape-rendering="crispEdges" ><polygon points="5.94,0.90 13.06,0.90 18.10,5.94 18.10,13.06 13.06,18.10 5.94,18.10 0.90,13.06 0.90,5.94" fill="none" stroke="#000" stroke-width="1.1"/><g shape-rendering="auto"><circle cx="6" cy="6" r="2.4" fill="#0000ff"/><circle cx="9.5" cy="14.5" r="2.1" fill="#ff0000"/></g><path d="M9.5 8 V11 M8 9.5 H11" stroke="#ff00ff" stroke-width="1.2"/><path d="M9.5 2v1 M16 9.5h1 M2 9.5h1 M14.5 14.5h1 M4 14.5h1" stroke="#808080"/></svg>
<svg style="position:absolute;left:147px;top:77px" width="17" height="18" viewBox="0 0 17 18" shape-rendering="crispEdges" ><polyline points="0.5,5.5 4.5,1.5 7.5,1.5 12.5,6.5 15.5,10.5 14.5,13.5 13.5,15.5" stroke="#ff00ff" fill="none"/><path d="M0.5 8.5 L15.5 1.5" stroke="#0000ff" stroke-width="1.3"/><path d="M0.5 12.5 L15.5 9.5" stroke="#808080" stroke-width="1.3"/><polyline points="0.5,13.5 0.5,15.5 1.5,16.5" stroke="#ff0000" fill="none"/><path d="M8.5 16.5 L16.5 9.5" stroke="#ff0000" stroke-width="1.2"/></svg>
<svg style="position:absolute;left:170px;top:77px" width="19" height="19" viewBox="0 0 19 19" shape-rendering="crispEdges" ><polyline points="0.5,8.5 5.5,2.5 7.5,2.5 11.5,6.5" stroke="#ff00ff" fill="none"/><polyline points="0.5,13.5 5.5,8.5" stroke="#ff00ff" fill="none"/><path d="M5 4 H10 Q13 4 13 7.5 Q13 11 10 11 H7.5 V17 H5 Z M7.5 6 V9 H9.5 Q10.8 9 10.8 7.5 Q10.8 6 9.5 6 Z" fill="#000" fill-rule="evenodd" shape-rendering="auto"/><polyline points="11.5,9.5 13.5,14.5 15.5,16.5 18.5,16.5" stroke="#ff00ff" fill="none"/><path d="M14 10.5 H18.5" stroke="#ff00ff"/></svg>
<div style="position:absolute;left:194px;top:76px;width:1px;height:21px;background:#4E8E86"></div>
<div style="position:absolute;left:195px;top:76px;width:1px;height:21px;background:#D6EAE6"></div>
<svg style="position:absolute;left:200px;top:77px" width="19" height="18" viewBox="0 0 19 18" shape-rendering="crispEdges" ><rect x="0" y="0" width="19" height="18" fill="#fff"/><rect x="2" y="1" width="15" height="15" fill="#fff" stroke="#000" transform="translate(0.5,0.5)"/><rect x="4" y="4" width="1" height="1" fill="#f00"/><rect x="4" y="6" width="1" height="1" fill="#f00"/><rect x="4" y="8" width="1" height="1" fill="#f00"/><rect x="4" y="10" width="1" height="1" fill="#f00"/><rect x="4" y="12" width="1" height="1" fill="#f00"/><rect x="4" y="14" width="1" height="1" fill="#f00"/><rect x="6" y="4" width="1" height="1" fill="#0cf"/><rect x="6" y="6" width="1" height="1" fill="#0cf"/><rect x="6" y="8" width="1" height="1" fill="#0cf"/><rect x="6" y="10" width="1" height="1" fill="#0cf"/><rect x="6" y="12" width="1" height="1" fill="#0cf"/><rect x="6" y="14" width="1" height="1" fill="#0cf"/><rect x="8" y="4" width="1" height="1" fill="#0cf"/><rect x="8" y="6" width="1" height="1" fill="#0cf"/><rect x="8" y="8" width="1" height="1" fill="#0cf"/><rect x="8" y="10" width="1" height="1" fill="#0cf"/><rect x="8" y="12" width="1" height="1" fill="#0cf"/><rect x="8" y="14" width="1" height="1" fill="#0cf"/><rect x="10" y="4" width="1" height="1" fill="#0cf"/><rect x="10" y="6" width="1" height="1" fill="#0cf"/><rect x="10" y="8" width="1" height="1" fill="#0cf"/><rect x="10" y="10" width="1" height="1" fill="#0cf"/><rect x="10" y="12" width="1" height="1" fill="#0cf"/><rect x="10" y="14" width="1" height="1" fill="#0cf"/><rect x="12" y="4" width="1" height="1" fill="#0cf"/><rect x="12" y="6" width="1" height="1" fill="#0cf"/><rect x="12" y="8" width="1" height="1" fill="#0cf"/><rect x="12" y="10" width="1" height="1" fill="#0cf"/><rect x="12" y="12" width="1" height="1" fill="#0cf"/><rect x="12" y="14" width="1" height="1" fill="#0cf"/><rect x="14" y="4" width="1" height="1" fill="#0cf"/><rect x="14" y="6" width="1" height="1" fill="#0cf"/><rect x="14" y="8" width="1" height="1" fill="#0cf"/><rect x="14" y="10" width="1" height="1" fill="#0cf"/><rect x="14" y="12" width="1" height="1" fill="#0cf"/><rect x="14" y="14" width="1" height="1" fill="#0cf"/><path d="M2 3 V15" stroke="#000" stroke-dasharray="1 1"/></svg>
<svg style="position:absolute;left:225px;top:90px" width="5" height="3" viewBox="0 0 5 3" shape-rendering="crispEdges" ><path d="M0 0 H5 V1 H4 V2 H3 V3 H2 V2 H1 V1 H0 Z" fill="#000"/></svg>
<div style="position:absolute;left:0px;top:100px;width:29px;height:361px;box-sizing:border-box;border-top:1px solid #D6EAE6;border-left:1px solid #D6EAE6;border-bottom:1px solid #4E8E86;border-right:1px solid #4E8E86;"></div>
<div style="position:absolute;left:3px;top:104px;width:23px;height:3px;box-sizing:border-box;border-top:1px solid #D6EAE6;border-left:1px solid #D6EAE6;border-right:1px solid #4E8E86;border-bottom:1px solid #4E8E86;"></div>
<svg style="position:absolute;left:11px;top:116px" width="9" height="14" viewBox="0 0 9 14" shape-rendering="crispEdges" ><path d="M0 0 V11 L3 8 L5 13 L7 12 L5 7 L9 7 Z" fill="#000"/></svg>
<svg style="position:absolute;left:6px;top:138px" width="19" height="19" viewBox="0 0 19 19" shape-rendering="crispEdges" ><path d="M9 0 V19 M0 9 H19" stroke="#000" stroke-width="2"/></svg>
<div style="position:absolute;left:4px;top:161px;width:21px;height:1px;background:#4E8E86"></div>
<div style="position:absolute;left:4px;top:162px;width:21px;height:1px;background:#D6EAE6"></div>
<svg style="position:absolute;left:7px;top:170px" width="17" height="16" viewBox="0 0 17 16" shape-rendering="crispEdges" ><rect x="1" y="4" width="8" height="10" fill="#d0d0d0" stroke="#000" transform="translate(0.5,0.5)"/><circle cx="8" cy="6" r="4" fill="#fff" stroke="#000" shape-rendering="auto"/><path d="M6 5 H10 M6 7 H10" stroke="#0cc"/><path d="M11 9 L16 14" stroke="#000" stroke-width="2"/></svg>
<svg style="position:absolute;left:7px;top:193px" width="17" height="16" viewBox="0 0 17 16" shape-rendering="crispEdges" ><rect x="1" y="4" width="8" height="10" fill="none" stroke="#5a9a92" transform="translate(0.5,0.5)"/><circle cx="8" cy="6" r="4" fill="none" stroke="#5a9a92" shape-rendering="auto"/><path d="M11 9 L16 14" stroke="#5a9a92" stroke-width="2"/><path d="M2 15 H10" stroke="#c8e0dc"/></svg>
<div style="position:absolute;left:4px;top:215px;width:21px;height:1px;background:#4E8E86"></div>
<div style="position:absolute;left:4px;top:216px;width:21px;height:1px;background:#D6EAE6"></div>
<svg style="position:absolute;left:7px;top:223px" width="16" height="16" viewBox="0 0 16 16" shape-rendering="crispEdges" ><path d="M2 2 H15" stroke="#000" stroke-width="1.5"/><path d="M2 2 L13 14" stroke="#000" stroke-width="4" shape-rendering="auto"/><path d="M2.5 2.5 L12.5 13.5" stroke="#00e000" stroke-width="2" shape-rendering="auto"/><rect x="1" y="1" width="2" height="2" fill="#fff"/></svg>
<svg style="position:absolute;left:7px;top:247px" width="16" height="16" viewBox="0 0 16 16" shape-rendering="crispEdges" ><path d="M2 2 H15" stroke="#000" stroke-width="1.5"/><path d="M2 2 L13 14" stroke="#000" stroke-width="4" shape-rendering="auto"/><path d="M2.5 2.5 L12.5 13.5" stroke="#0030ff" stroke-width="2" shape-rendering="auto"/><rect x="1" y="1" width="2" height="2" fill="#fff"/></svg>
<svg style="position:absolute;left:7px;top:271px" width="16" height="16" viewBox="0 0 16 16" shape-rendering="crispEdges" ><path d="M2 2 V15" stroke="#000" stroke-width="1.5"/><path d="M2 2 L14 14" stroke="#000" stroke-width="4" shape-rendering="auto"/><path d="M2.5 2.5 L13.5 13.5" stroke="#0030ff" stroke-width="2" shape-rendering="auto"/><rect x="1" y="1" width="2" height="2" fill="#fff"/></svg>
<svg style="position:absolute;left:6px;top:294px" width="18" height="17" viewBox="0 0 18 17" shape-rendering="crispEdges" ><path d="M0 15 L14 1" stroke="#000" stroke-width="1.3" shape-rendering="auto"/><rect x="13" y="7" width="4" height="9" fill="#00e0ff" stroke="#000" stroke-width="0.7" shape-rendering="auto"/><path d="M15 2 V6" stroke="#ff0" stroke-width="2"/></svg>
<div style="position:absolute;left:4px;top:318px;width:21px;height:1px;background:#4E8E86"></div>
<div style="position:absolute;left:4px;top:319px;width:21px;height:1px;background:#D6EAE6"></div>
<div style="position:absolute;left:6px;top:324px;width:19px;height:1px;background:#fff"></div>
<svg style="position:absolute;left:8px;top:349px" width="15" height="15" viewBox="0 0 15 15" shape-rendering="crispEdges" ><path d="M0 0 L15 15 M15 0 L0 15" stroke="#f00" stroke-width="1.5" shape-rendering="auto"/></svg>
<div style="position:absolute;left:4px;top:395px;width:21px;height:1px;background:#4E8E86"></div>
<div style="position:absolute;left:4px;top:396px;width:21px;height:1px;background:#D6EAE6"></div>
<svg style="position:absolute;left:7px;top:403px" width="16" height="16" viewBox="0 0 16 16" shape-rendering="crispEdges" ><circle cx="8" cy="8" r="7" fill="none" stroke="#000" stroke-width="1.8" shape-rendering="auto"/></svg>
<svg style="position:absolute;left:6px;top:429px" width="18" height="13" viewBox="0 0 18 13" shape-rendering="crispEdges" ><ellipse cx="9" cy="6.5" rx="8" ry="5.5" fill="none" stroke="#000" stroke-width="1.8" shape-rendering="auto"/></svg>
<svg style="position:absolute;left:4px;top:451px" width="4" height="5" viewBox="0 0 4 5" shape-rendering="crispEdges" ><rect x="3" y="0" width="1" height="1" fill="#000"/><rect x="2" y="1" width="2" height="1" fill="#000"/><rect x="1" y="2" width="3" height="1" fill="#000"/><rect x="2" y="3" width="2" height="1" fill="#000"/><rect x="3" y="4" width="1" height="1" fill="#000"/></svg>
<div style="position:absolute;left:996px;top:100px;width:28px;height:457px;box-sizing:border-box;border-top:1px solid #D6EAE6;border-left:1px solid #D6EAE6;border-bottom:1px solid #4E8E86;border-right:1px solid #4E8E86;"></div>
<div style="position:absolute;left:998px;top:104px;width:23px;height:3px;box-sizing:border-box;border-top:1px solid #D6EAE6;border-left:1px solid #D6EAE6;border-right:1px solid #4E8E86;border-bottom:1px solid #4E8E86;"></div>
<svg style="position:absolute;left:1007px;top:116px" width="13" height="8" viewBox="0 0 13 8" shape-rendering="crispEdges" ><path d="M1 0.5 L12 6.5" stroke="#f00" stroke-width="2" shape-rendering="auto"/></svg>
<svg style="position:absolute;left:1001px;top:138px" width="19" height="18" viewBox="0 0 19 18" shape-rendering="crispEdges" ><path d="M1 1 L18 17" stroke="#000" stroke-width="1.5" shape-rendering="auto"/><path d="M2 1 L18 8" stroke="#f00" stroke-width="2" shape-rendering="auto"/><path d="M1 2 L10 17" stroke="#0d0" stroke-width="1.5" shape-rendering="auto"/></svg>
<svg style="position:absolute;left:1001px;top:164px" width="19" height="14" viewBox="0 0 19 14" shape-rendering="crispEdges" ><path d="M2 2 A7.5 7.5 0 0 0 17 2" stroke="#f0f" stroke-width="1.5" fill="none" shape-rendering="auto"/><path d="M5 2 A4.5 4.5 0 0 0 14 2" stroke="#0d0" stroke-width="1.5" fill="none" shape-rendering="auto"/><path d="M1 13 L12 3" stroke="#000" shape-rendering="auto"/></svg>
<svg style="position:absolute;left:1002px;top:209px" width="18" height="18" viewBox="0 0 18 18" shape-rendering="crispEdges" ><path d="M1 11 L11 1 M7 17 L17 7" stroke="#000" stroke-width="1.3" shape-rendering="auto"/><path d="M2 7 L12 17" stroke="#888" stroke-width="1.5" shape-rendering="auto"/></svg>
<svg style="position:absolute;left:1001px;top:235px" width="19" height="16" viewBox="0 0 19 16" shape-rendering="crispEdges" ><path d="M2 0 V14 M0 0 H4 M0 14 H4" stroke="#000" stroke-width="1.5"/><path d="M5 3 L17 14" stroke="#000" stroke-width="1.5" shape-rendering="auto"/><path d="M7 4 H18" stroke="#f00"/><path d="M9 7 H18" stroke="#0c0"/><path d="M11 10 H18" stroke="#00f"/></svg>
<svg style="position:absolute;left:1002px;top:259px" width="17" height="15" viewBox="0 0 17 15" shape-rendering="crispEdges" ><path d="M0 1 H17 M0 7 H17 M0 13 H17" stroke="#000" stroke-width="1.5"/></svg>
<svg style="position:absolute;left:1002px;top:283px" width="16" height="15" viewBox="0 0 16 15" shape-rendering="crispEdges" ><path d="M1 0 V15 M5 0 V15 M9 0 V15 M14 0 V15" stroke="#00f" stroke-width="1.5"/></svg>
<svg style="position:absolute;left:1002px;top:308px" width="17" height="14" viewBox="0 0 17 14" shape-rendering="crispEdges" ><path d="M1 0 V14 M7 0 V14 M13 0 V14" stroke="#f00" stroke-width="1.5"/></svg>
<svg style="position:absolute;left:1001px;top:329px" width="19" height="17" viewBox="0 0 19 17" shape-rendering="crispEdges" ><path d="M1 11 V17 M4 9 V14 M7 6 V12 M10 4 V9 M0 14 H10 M3 11 H12" stroke="#00f" stroke-width="1.2"/><rect x="11" y="1" width="7" height="4" fill="#f00"/><rect x="12" y="2" width="5" height="2" fill="#fff"/><rect x="13" y="8" width="4" height="4" fill="#f00"/></svg>
<svg style="position:absolute;left:1004px;top:354px" width="16" height="16" viewBox="0 0 16 16" shape-rendering="crispEdges" ><path d="M0 15 L15 0 M5 15 L15 5" stroke="#000" stroke-width="1.2" shape-rendering="auto"/></svg>
<svg style="position:absolute;left:1003px;top:380px" width="16" height="14" viewBox="0 0 16 14" shape-rendering="crispEdges" ><path d="M0 13 L8 1" stroke="#00f" stroke-width="1.3" shape-rendering="auto"/><path d="M8 1 L15 13" stroke="#00f" stroke-width="1" shape-rendering="auto"/><path d="M4 13 L13 0" stroke="#000" stroke-width="1" shape-rendering="auto"/><path d="M0 13 H15" stroke="#f00" stroke-dasharray="1 1"/></svg>
<svg style="position:absolute;left:1002px;top:402px" width="18" height="17" viewBox="0 0 18 17" shape-rendering="crispEdges" ><path d="M0 2 H18 M0 14 H18" stroke="#00f"/><path d="M0 5 H18 M0 11 H18" stroke="#f00"/><text x="2" y="15" font-family="Liberation Sans" font-weight="bold" font-size="15" fill="#008000">G</text></svg>
<svg style="position:absolute;left:1002px;top:428px" width="17" height="14" viewBox="0 0 17 14" shape-rendering="crispEdges" ><path d="M1 13 L16 0 M1 13 L16 3 M1 13 L16 7 M1 13 L15 10 M1 13 L12 0 M1 13 L8 1" stroke="#000" shape-rendering="auto"/></svg>
<svg style="position:absolute;left:999px;top:547px" width="4" height="5" viewBox="0 0 4 5" shape-rendering="crispEdges" ><rect x="3" y="0" width="1" height="1" fill="#000"/><rect x="2" y="1" width="2" height="1" fill="#000"/><rect x="1" y="2" width="3" height="1" fill="#000"/><rect x="2" y="3" width="2" height="1" fill="#000"/><rect x="3" y="4" width="1" height="1" fill="#000"/></svg>
<svg style="position:absolute;left:29px;top:100px" width="966" height="616" viewBox="0 0 966 616" shape-rendering="crispEdges" ><rect x="0" y="0" width="966" height="616" fill="#000"/><path d="M4 9.5h2M14 9.5h2M24 9.5h2M34 9.5h2M44 9.5h2M54 9.5h2M64 9.5h2M74 9.5h2M84 9.5h2M94 9.5h2M104 9.5h2M114 9.5h2M124 9.5h2M134 9.5h2M144 9.5h2M154 9.5h2M164 9.5h2M174 9.5h2M184 9.5h2M194 9.5h2M204 9.5h2M214 9.5h2M224 9.5h2M234 9.5h2M244 9.5h2M254 9.5h2M264 9.5h2M274 9.5h2M284 9.5h2M294 9.5h2M304 9.5h2M314 9.5h2M324 9.5h2M334 9.5h2M344 9.5h2M354 9.5h2M364 9.5h2M374 9.5h2M384 9.5h2M394 9.5h2M404 9.5h2M414 9.5h2M424 9.5h2M434 9.5h2M444 9.5h2M454 9.5h2M464 9.5h2M474 9.5h2M484 9.5h2M494 9.5h2M504 9.5h2M514 9.5h2M524 9.5h2M534 9.5h2M544 9.5h2M554 9.5h2M564 9.5h2M574 9.5h2M584 9.5h2M594 9.5h2M604 9.5h2M614 9.5h2M624 9.5h2M634 9.5h2M644 9.5h2M654 9.5h2M664 9.5h2M674 9.5h2M684 9.5h2M694 9.5h2M704 9.5h2M714 9.5h2M724 9.5h2M734 9.5h2M744 9.5h2M754 9.5h2M764 9.5h2M774 9.5h2M784 9.5h2M794 9.5h2M804 9.5h2M814 9.5h2M824 9.5h2M834 9.5h2M844 9.5h2M854 9.5h2M864 9.5h2M874 9.5h2M884 9.5h2M894 9.5h2M904 9.5h2M4 74.5h2M14 74.5h2M24 74.5h2M34 74.5h2M44 74.5h2M54 74.5h2M64 74.5h2M74 74.5h2M84 74.5h2M94 74.5h2M104 74.5h2M114 74.5h2M124 74.5h2M134 74.5h2M144 74.5h2M154 74.5h2M164 74.5h2M174 74.5h2M184 74.5h2M194 74.5h2M204 74.5h2M214 74.5h2M224 74.5h2M234 74.5h2M244 74.5h2M254 74.5h2M264 74.5h2M274 74.5h2M284 74.5h2M294 74.5h2M304 74.5h2M314 74.5h2M324 74.5h2M334 74.5h2M344 74.5h2M354 74.5h2M364 74.5h2M374 74.5h2M384 74.5h2M394 74.5h2M404 74.5h2M414 74.5h2M424 74.5h2M434 74.5h2M444 74.5h2M454 74.5h2M464 74.5h2M474 74.5h2M484 74.5h2M494 74.5h2M504 74.5h2M514 74.5h2M524 74.5h2M534 74.5h2M544 74.5h2M554 74.5h2M564 74.5h2M574 74.5h2M584 74.5h2M594 74.5h2M604 74.5h2M614 74.5h2M624 74.5h2M634 74.5h2M644 74.5h2M654 74.5h2M664 74.5h2M674 74.5h2M684 74.5h2M694 74.5h2M704 74.5h2M714 74.5h2M724 74.5h2M734 74.5h2M744 74.5h2M754 74.5h2M764 74.5h2M774 74.5h2M784 74.5h2M794 74.5h2M804 74.5h2M814 74.5h2M824 74.5h2M834 74.5h2M844 74.5h2M854 74.5h2M864 74.5h2M874 74.5h2M884 74.5h2M894 74.5h2M904 74.5h2M4 139.5h2M14 139.5h2M24 139.5h2M34 139.5h2M44 139.5h2M54 139.5h2M64 139.5h2M74 139.5h2M84 139.5h2M94 139.5h2M104 139.5h2M114 139.5h2M124 139.5h2M134 139.5h2M144 139.5h2M154 139.5h2M164 139.5h2M174 139.5h2M184 139.5h2M194 139.5h2M204 139.5h2M214 139.5h2M224 139.5h2M234 139.5h2M244 139.5h2M254 139.5h2M264 139.5h2M274 139.5h2M284 139.5h2M294 139.5h2M304 139.5h2M314 139.5h2M324 139.5h2M334 139.5h2M344 139.5h2M354 139.5h2M364 139.5h2M374 139.5h2M384 139.5h2M394 139.5h2M404 139.5h2M414 139.5h2M424 139.5h2M434 139.5h2M444 139.5h2M454 139.5h2M464 139.5h2M474 139.5h2M484 139.5h2M494 139.5h2M504 139.5h2M514 139.5h2M524 139.5h2M534 139.5h2M544 139.5h2M554 139.5h2M564 139.5h2M574 139.5h2M584 139.5h2M594 139.5h2M604 139.5h2M614 139.5h2M624 139.5h2M634 139.5h2M644 139.5h2M654 139.5h2M664 139.5h2M674 139.5h2M684 139.5h2M694 139.5h2M704 139.5h2M714 139.5h2M724 139.5h2M734 139.5h2M744 139.5h2M754 139.5h2M764 139.5h2M774 139.5h2M784 139.5h2M794 139.5h2M804 139.5h2M814 139.5h2M824 139.5h2M834 139.5h2M844 139.5h2M854 139.5h2M864 139.5h2M874 139.5h2M884 139.5h2M894 139.5h2M904 139.5h2M4 205.5h2M14 205.5h2M24 205.5h2M34 205.5h2M44 205.5h2M54 205.5h2M64 205.5h2M74 205.5h2M84 205.5h2M94 205.5h2M104 205.5h2M114 205.5h2M124 205.5h2M134 205.5h2M144 205.5h2M154 205.5h2M164 205.5h2M174 205.5h2M184 205.5h2M194 205.5h2M204 205.5h2M214 205.5h2M224 205.5h2M234 205.5h2M244 205.5h2M254 205.5h2M264 205.5h2M274 205.5h2M284 205.5h2M294 205.5h2M304 205.5h2M314 205.5h2M324 205.5h2M334 205.5h2M344 205.5h2M354 205.5h2M364 205.5h2M374 205.5h2M384 205.5h2M394 205.5h2M404 205.5h2M414 205.5h2M424 205.5h2M434 205.5h2M444 205.5h2M454 205.5h2M464 205.5h2M474 205.5h2M484 205.5h2M494 205.5h2M504 205.5h2M514 205.5h2M524 205.5h2M534 205.5h2M544 205.5h2M554 205.5h2M564 205.5h2M574 205.5h2M584 205.5h2M594 205.5h2M604 205.5h2M614 205.5h2M624 205.5h2M634 205.5h2M644 205.5h2M654 205.5h2M664 205.5h2M674 205.5h2M684 205.5h2M694 205.5h2M704 205.5h2M714 205.5h2M724 205.5h2M734 205.5h2M744 205.5h2M754 205.5h2M764 205.5h2M774 205.5h2M784 205.5h2M794 205.5h2M804 205.5h2M814 205.5h2M824 205.5h2M834 205.5h2M844 205.5h2M854 205.5h2M864 205.5h2M874 205.5h2M884 205.5h2M894 205.5h2M904 205.5h2M4 270.5h2M14 270.5h2M24 270.5h2M34 270.5h2M44 270.5h2M54 270.5h2M64 270.5h2M74 270.5h2M84 270.5h2M94 270.5h2M104 270.5h2M114 270.5h2M124 270.5h2M134 270.5h2M144 270.5h2M154 270.5h2M164 270.5h2M174 270.5h2M184 270.5h2M194 270.5h2M204 270.5h2M214 270.5h2M224 270.5h2M234 270.5h2M244 270.5h2M254 270.5h2M264 270.5h2M274 270.5h2M284 270.5h2M294 270.5h2M304 270.5h2M314 270.5h2M324 270.5h2M334 270.5h2M344 270.5h2M354 270.5h2M364 270.5h2M374 270.5h2M384 270.5h2M394 270.5h2M404 270.5h2M414 270.5h2M424 270.5h2M434 270.5h2M444 270.5h2M454 270.5h2M464 270.5h2M474 270.5h2M484 270.5h2M494 270.5h2M504 270.5h2M514 270.5h2M524 270.5h2M534 270.5h2M544 270.5h2M554 270.5h2M564 270.5h2M574 270.5h2M584 270.5h2M594 270.5h2M604 270.5h2M614 270.5h2M624 270.5h2M634 270.5h2M644 270.5h2M654 270.5h2M664 270.5h2M674 270.5h2M684 270.5h2M694 270.5h2M704 270.5h2M714 270.5h2M724 270.5h2M734 270.5h2M744 270.5h2M754 270.5h2M764 270.5h2M774 270.5h2M784 270.5h2M794 270.5h2M804 270.5h2M814 270.5h2M824 270.5h2M834 270.5h2M844 270.5h2M854 270.5h2M864 270.5h2M874 270.5h2M884 270.5h2M894 270.5h2M904 270.5h2M4 335.5h2M14 335.5h2M24 335.5h2M34 335.5h2M44 335.5h2M54 335.5h2M64 335.5h2M74 335.5h2M84 335.5h2M94 335.5h2M104 335.5h2M114 335.5h2M124 335.5h2M134 335.5h2M144 335.5h2M154 335.5h2M164 335.5h2M174 335.5h2M184 335.5h2M194 335.5h2M204 335.5h2M214 335.5h2M224 335.5h2M234 335.5h2M244 335.5h2M254 335.5h2M264 335.5h2M274 335.5h2M284 335.5h2M294 335.5h2M304 335.5h2M314 335.5h2M324 335.5h2M334 335.5h2M344 335.5h2M354 335.5h2M364 335.5h2M374 335.5h2M384 335.5h2M394 335.5h2M404 335.5h2M414 335.5h2M424 335.5h2M434 335.5h2M444 335.5h2M454 335.5h2M464 335.5h2M474 335.5h2M484 335.5h2M494 335.5h2M504 335.5h2M514 335.5h2M524 335.5h2M534 335.5h2M544 335.5h2M554 335.5h2M564 335.5h2M574 335.5h2M584 335.5h2M594 335.5h2M604 335.5h2M614 335.5h2M624 335.5h2M634 335.5h2M644 335.5h2M654 335.5h2M664 335.5h2M674 335.5h2M684 335.5h2M694 335.5h2M704 335.5h2M714 335.5h2M724 335.5h2M734 335.5h2M744 335.5h2M754 335.5h2M764 335.5h2M774 335.5h2M784 335.5h2M794 335.5h2M804 335.5h2M814 335.5h2M824 335.5h2M834 335.5h2M844 335.5h2M854 335.5h2M864 335.5h2M874 335.5h2M884 335.5h2M894 335.5h2M904 335.5h2M4 400.5h2M14 400.5h2M24 400.5h2M34 400.5h2M44 400.5h2M54 400.5h2M64 400.5h2M74 400.5h2M84 400.5h2M94 400.5h2M104 400.5h2M114 400.5h2M124 400.5h2M134 400.5h2M144 400.5h2M154 400.5h2M164 400.5h2M174 400.5h2M184 400.5h2M194 400.5h2M204 400.5h2M214 400.5h2M224 400.5h2M234 400.5h2M244 400.5h2M254 400.5h2M264 400.5h2M274 400.5h2M284 400.5h2M294 400.5h2M304 400.5h2M314 400.5h2M324 400.5h2M334 400.5h2M344 400.5h2M354 400.5h2M364 400.5h2M374 400.5h2M384 400.5h2M394 400.5h2M404 400.5h2M414 400.5h2M424 400.5h2M434 400.5h2M444 400.5h2M454 400.5h2M464 400.5h2M474 400.5h2M484 400.5h2M494 400.5h2M504 400.5h2M514 400.5h2M524 400.5h2M534 400.5h2M544 400.5h2M554 400.5h2M564 400.5h2M574 400.5h2M584 400.5h2M594 400.5h2M604 400.5h2M614 400.5h2M624 400.5h2M634 400.5h2M644 400.5h2M654 400.5h2M664 400.5h2M674 400.5h2M684 400.5h2M694 400.5h2M704 400.5h2M714 400.5h2M724 400.5h2M734 400.5h2M744 400.5h2M754 400.5h2M764 400.5h2M774 400.5h2M784 400.5h2M794 400.5h2M804 400.5h2M814 400.5h2M824 400.5h2M834 400.5h2M844 400.5h2M854 400.5h2M864 400.5h2M874 400.5h2M884 400.5h2M894 400.5h2M904 400.5h2M4 466.5h2M14 466.5h2M24 466.5h2M34 466.5h2M44 466.5h2M54 466.5h2M64 466.5h2M74 466.5h2M84 466.5h2M94 466.5h2M104 466.5h2M114 466.5h2M124 466.5h2M134 466.5h2M144 466.5h2M154 466.5h2M164 466.5h2M174 466.5h2M184 466.5h2M194 466.5h2M204 466.5h2M214 466.5h2M224 466.5h2M234 466.5h2M244 466.5h2M254 466.5h2M264 466.5h2M274 466.5h2M284 466.5h2M294 466.5h2M304 466.5h2M314 466.5h2M324 466.5h2M334 466.5h2M344 466.5h2M354 466.5h2M364 466.5h2M374 466.5h2M384 466.5h2M394 466.5h2M404 466.5h2M414 466.5h2M424 466.5h2M434 466.5h2M444 466.5h2M454 466.5h2M464 466.5h2M474 466.5h2M484 466.5h2M494 466.5h2M504 466.5h2M514 466.5h2M524 466.5h2M534 466.5h2M544 466.5h2M554 466.5h2M564 466.5h2M574 466.5h2M584 466.5h2M594 466.5h2M604 466.5h2M614 466.5h2M624 466.5h2M634 466.5h2M644 466.5h2M654 466.5h2M664 466.5h2M674 466.5h2M684 466.5h2M694 466.5h2M704 466.5h2M714 466.5h2M724 466.5h2M734 466.5h2M744 466.5h2M754 466.5h2M764 466.5h2M774 466.5h2M784 466.5h2M794 466.5h2M804 466.5h2M814 466.5h2M824 466.5h2M834 466.5h2M844 466.5h2M854 466.5h2M864 466.5h2M874 466.5h2M884 466.5h2M894 466.5h2M904 466.5h2M4 531.5h2M14 531.5h2M24 531.5h2M34 531.5h2M44 531.5h2M54 531.5h2M64 531.5h2M74 531.5h2M84 531.5h2M94 531.5h2M104 531.5h2M114 531.5h2M124 531.5h2M134 531.5h2M144 531.5h2M154 531.5h2M164 531.5h2M174 531.5h2M184 531.5h2M194 531.5h2M204 531.5h2M214 531.5h2M224 531.5h2M234 531.5h2M244 531.5h2M254 531.5h2M264 531.5h2M274 531.5h2M284 531.5h2M294 531.5h2M304 531.5h2M314 531.5h2M324 531.5h2M334 531.5h2M344 531.5h2M354 531.5h2M364 531.5h2M374 531.5h2M384 531.5h2M394 531.5h2M404 531.5h2M414 531.5h2M424 531.5h2M434 531.5h2M444 531.5h2M454 531.5h2M464 531.5h2M474 531.5h2M484 531.5h2M494 531.5h2M504 531.5h2M514 531.5h2M524 531.5h2M534 531.5h2M544 531.5h2M554 531.5h2M564 531.5h2M574 531.5h2M584 531.5h2M594 531.5h2M604 531.5h2M614 531.5h2M624 531.5h2M634 531.5h2M644 531.5h2M654 531.5h2M664 531.5h2M674 531.5h2M684 531.5h2M694 531.5h2M704 531.5h2M714 531.5h2M724 531.5h2M734 531.5h2M744 531.5h2M754 531.5h2M764 531.5h2M774 531.5h2M784 531.5h2M794 531.5h2M804 531.5h2M814 531.5h2M824 531.5h2M834 531.5h2M844 531.5h2M854 531.5h2M864 531.5h2M874 531.5h2M884 531.5h2M894 531.5h2M904 531.5h2M4 596.5h2M14 596.5h2M24 596.5h2M34 596.5h2M44 596.5h2M54 596.5h2M64 596.5h2M74 596.5h2M84 596.5h2M94 596.5h2M104 596.5h2M114 596.5h2M124 596.5h2M134 596.5h2M144 596.5h2M154 596.5h2M164 596.5h2M174 596.5h2M184 596.5h2M194 596.5h2M204 596.5h2M214 596.5h2M224 596.5h2M234 596.5h2M244 596.5h2M254 596.5h2M264 596.5h2M274 596.5h2M284 596.5h2M294 596.5h2M304 596.5h2M314 596.5h2M324 596.5h2M334 596.5h2M344 596.5h2M354 596.5h2M364 596.5h2M374 596.5h2M384 596.5h2M394 596.5h2M404 596.5h2M414 596.5h2M424 596.5h2M434 596.5h2M444 596.5h2M454 596.5h2M464 596.5h2M474 596.5h2M484 596.5h2M494 596.5h2M504 596.5h2M514 596.5h2M524 596.5h2M534 596.5h2M544 596.5h2M554 596.5h2M564 596.5h2M574 596.5h2M584 596.5h2M594 596.5h2M604 596.5h2M614 596.5h2M624 596.5h2M634 596.5h2M644 596.5h2M654 596.5h2M664 596.5h2M674 596.5h2M684 596.5h2M694 596.5h2M704 596.5h2M714 596.5h2M724 596.5h2M734 596.5h2M744 596.5h2M754 596.5h2M764 596.5h2M774 596.5h2M784 596.5h2M794 596.5h2M804 596.5h2M814 596.5h2M824 596.5h2M834 596.5h2M844 596.5h2M854 596.5h2M864 596.5h2M874 596.5h2M884 596.5h2M894 596.5h2M904 596.5h2" stroke="#888888" stroke-width="1" fill="none"/><path d="M5.5 3v1M5.5 7v3M5.5 13v3M5.5 19v3M5.5 25v3M5.5 31v3M5.5 37v3M5.5 43v3M5.5 49v3M5.5 55v3M5.5 61v3M5.5 67v3M5.5 73v3M5.5 79v3M5.5 85v3M5.5 91v3M5.5 97v3M5.5 103v3M5.5 109v3M5.5 115v3M5.5 121v3M5.5 127v3M5.5 133v3M5.5 139v3M5.5 145v3M5.5 151v3M5.5 157v3M5.5 163v3M5.5 169v3M5.5 175v3M5.5 181v3M5.5 187v3M5.5 193v3M5.5 199v3M5.5 205v3M5.5 211v3M5.5 217v3M5.5 223v3M5.5 229v3M5.5 235v3M5.5 241v3M5.5 247v3M5.5 253v3M5.5 259v3M5.5 265v3M5.5 271v3M5.5 277v3M5.5 283v3M5.5 289v3M5.5 295v3M5.5 301v3M5.5 307v3M5.5 313v3M5.5 319v3M5.5 325v3M5.5 331v3M5.5 337v3M5.5 343v3M5.5 349v3M5.5 355v3M5.5 361v3M5.5 367v3M5.5 373v3M5.5 379v3M5.5 385v3M5.5 391v3M5.5 397v3M5.5 403v3M5.5 409v3M5.5 415v3M5.5 421v3M5.5 427v3M5.5 433v3M5.5 439v3M5.5 445v3M5.5 451v3M5.5 457v3M5.5 463v3M5.5 469v3M5.5 475v3M5.5 481v3M5.5 487v3M5.5 493v3M5.5 499v3M5.5 505v3M5.5 511v3M5.5 517v3M5.5 523v3M5.5 529v3M5.5 535v3M5.5 541v3M5.5 547v3M5.5 553v3M5.5 559v3M5.5 565v3M5.5 571v3M5.5 577v3M5.5 583v3M5.5 589v3M5.5 595v2M5.5 598v3M83.5 3v1M83.5 7v3M83.5 13v3M83.5 19v3M83.5 25v3M83.5 31v3M83.5 37v3M83.5 43v3M83.5 49v3M83.5 55v3M83.5 61v3M83.5 67v3M83.5 73v3M83.5 79v3M83.5 85v3M83.5 91v3M83.5 97v3M83.5 103v3M83.5 109v3M83.5 115v3M83.5 121v3M83.5 127v3M83.5 133v3M83.5 139v3M83.5 145v3M83.5 151v3M83.5 157v3M83.5 163v3M83.5 169v3M83.5 175v3M83.5 181v3M83.5 187v3M83.5 193v3M83.5 199v3M83.5 205v3M83.5 211v3M83.5 217v3M83.5 223v3M83.5 229v3M83.5 235v3M83.5 241v3M83.5 247v3M83.5 253v3M83.5 259v3M83.5 265v3M83.5 271v3M83.5 277v3M83.5 283v3M83.5 289v3M83.5 295v3M83.5 301v3M83.5 307v3M83.5 313v3M83.5 319v3M83.5 325v3M83.5 331v3M83.5 337v3M83.5 343v3M83.5 349v3M83.5 355v3M83.5 361v3M83.5 367v3M83.5 373v3M83.5 379v3M83.5 385v3M83.5 391v3M83.5 397v3M83.5 403v3M83.5 409v3M83.5 415v3M83.5 421v3M83.5 427v3M83.5 433v3M83.5 439v3M83.5 445v3M83.5 451v3M83.5 457v3M83.5 463v3M83.5 469v3M83.5 475v3M83.5 481v3M83.5 487v3M83.5 493v3M83.5 499v3M83.5 505v3M83.5 511v3M83.5 517v3M83.5 523v3M83.5 529v3M83.5 535v3M83.5 541v3M83.5 547v3M83.5 553v3M83.5 559v3M83.5 565v3M83.5 571v3M83.5 577v3M83.5 583v3M83.5 589v3M83.5 595v2M83.5 598v3M163.5 3v1M163.5 7v3M163.5 13v3M163.5 19v3M163.5 25v3M163.5 31v3M163.5 37v3M163.5 43v3M163.5 49v3M163.5 55v3M163.5 61v3M163.5 67v3M163.5 73v3M163.5 79v3M163.5 85v3M163.5 91v3M163.5 97v3M163.5 103v3M163.5 109v3M163.5 115v3M163.5 121v3M163.5 127v3M163.5 133v3M163.5 139v3M163.5 145v3M163.5 151v3M163.5 157v3M163.5 163v3M163.5 169v3M163.5 175v3M163.5 181v3M163.5 187v3M163.5 193v3M163.5 199v3M163.5 205v3M163.5 211v3M163.5 217v3M163.5 223v3M163.5 229v3M163.5 235v3M163.5 241v3M163.5 247v3M163.5 253v3M163.5 259v3M163.5 265v3M163.5 271v3M163.5 277v3M163.5 283v3M163.5 289v3M163.5 295v3M163.5 301v3M163.5 307v3M163.5 313v3M163.5 319v3M163.5 325v3M163.5 331v3M163.5 337v3M163.5 343v3M163.5 349v3M163.5 355v3M163.5 361v3M163.5 367v3M163.5 373v3M163.5 379v3M163.5 385v3M163.5 391v3M163.5 397v3M163.5 403v3M163.5 409v3M163.5 415v3M163.5 421v3M163.5 427v3M163.5 433v3M163.5 439v3M163.5 445v3M163.5 451v3M163.5 457v3M163.5 463v3M163.5 469v3M163.5 475v3M163.5 481v3M163.5 487v3M163.5 493v3M163.5 499v3M163.5 505v3M163.5 511v3M163.5 517v3M163.5 523v3M163.5 529v3M163.5 535v3M163.5 541v3M163.5 547v3M163.5 553v3M163.5 559v3M163.5 565v3M163.5 571v3M163.5 577v3M163.5 583v3M163.5 589v3M163.5 595v2M163.5 598v3M239.5 3v1M239.5 7v3M239.5 13v3M239.5 19v3M239.5 25v3M239.5 31v3M239.5 37v3M239.5 43v3M239.5 49v3M239.5 55v3M239.5 61v3M239.5 67v3M239.5 73v3M239.5 79v3M239.5 85v3M239.5 91v3M239.5 97v3M239.5 103v3M239.5 109v3M239.5 115v3M239.5 121v3M239.5 127v3M239.5 133v3M239.5 139v3M239.5 145v3M239.5 151v3M239.5 157v3M239.5 163v3M239.5 169v3M239.5 175v3M239.5 181v3M239.5 187v3M239.5 193v3M239.5 199v3M239.5 205v3M239.5 211v3M239.5 217v3M239.5 223v3M239.5 229v3M239.5 235v3M239.5 241v3M239.5 247v3M239.5 253v3M239.5 259v3M239.5 265v3M239.5 271v3M239.5 277v3M239.5 283v3M239.5 289v3M239.5 295v3M239.5 301v3M239.5 307v3M239.5 313v3M239.5 319v3M239.5 325v3M239.5 331v3M239.5 337v3M239.5 343v3M239.5 349v3M239.5 355v3M239.5 361v3M239.5 367v3M239.5 373v3M239.5 379v3M239.5 385v3M239.5 391v3M239.5 397v3M239.5 403v3M239.5 409v3M239.5 415v3M239.5 421v3M239.5 427v3M239.5 433v3M239.5 439v3M239.5 445v3M239.5 451v3M239.5 457v3M239.5 463v3M239.5 469v3M239.5 475v3M239.5 481v3M239.5 487v3M239.5 493v3M239.5 499v3M239.5 505v3M239.5 511v3M239.5 517v3M239.5 523v3M239.5 529v3M239.5 535v3M239.5 541v3M239.5 547v3M239.5 553v3M239.5 559v3M239.5 565v3M239.5 571v3M239.5 577v3M239.5 583v3M239.5 589v3M239.5 595v2M239.5 598v3M313.5 3v1M313.5 7v3M313.5 13v3M313.5 19v3M313.5 25v3M313.5 31v3M313.5 37v3M313.5 43v3M313.5 49v3M313.5 55v3M313.5 61v3M313.5 67v3M313.5 73v3M313.5 79v3M313.5 85v3M313.5 91v3M313.5 97v3M313.5 103v3M313.5 109v3M313.5 115v3M313.5 121v3M313.5 127v3M313.5 133v3M313.5 139v3M313.5 145v3M313.5 151v3M313.5 157v3M313.5 163v3M313.5 169v3M313.5 175v3M313.5 181v3M313.5 187v3M313.5 193v3M313.5 199v3M313.5 205v3M313.5 211v3M313.5 217v3M313.5 223v3M313.5 229v3M313.5 235v3M313.5 241v3M313.5 247v3M313.5 253v3M313.5 259v3M313.5 265v3M313.5 271v3M313.5 277v3M313.5 283v3M313.5 289v3M313.5 295v3M313.5 301v3M313.5 307v3M313.5 313v3M313.5 319v3M313.5 325v3M313.5 331v3M313.5 337v3M313.5 343v3M313.5 349v3M313.5 355v3M313.5 361v3M313.5 367v3M313.5 373v3M313.5 379v3M313.5 385v3M313.5 391v3M313.5 397v3M313.5 403v3M313.5 409v3M313.5 415v3M313.5 421v3M313.5 427v3M313.5 433v3M313.5 439v3M313.5 445v3M313.5 451v3M313.5 457v3M313.5 463v3M313.5 469v3M313.5 475v3M313.5 481v3M313.5 487v3M313.5 493v3M313.5 499v3M313.5 505v3M313.5 511v3M313.5 517v3M313.5 523v3M313.5 529v3M313.5 535v3M313.5 541v3M313.5 547v3M313.5 553v3M313.5 559v3M313.5 565v3M313.5 571v3M313.5 577v3M313.5 583v3M313.5 589v3M313.5 595v2M313.5 598v3M391.5 3v1M391.5 7v3M391.5 13v3M391.5 19v3M391.5 25v3M391.5 31v3M391.5 37v3M391.5 43v3M391.5 49v3M391.5 55v3M391.5 61v3M391.5 67v3M391.5 73v3M391.5 79v3M391.5 85v3M391.5 91v3M391.5 97v3M391.5 103v3M391.5 109v3M391.5 115v3M391.5 121v3M391.5 127v3M391.5 133v3M391.5 139v3M391.5 145v3M391.5 151v3M391.5 157v3M391.5 163v3M391.5 169v3M391.5 175v3M391.5 181v3M391.5 187v3M391.5 193v3M391.5 199v3M391.5 205v3M391.5 211v3M391.5 217v3M391.5 223v3M391.5 229v3M391.5 235v3M391.5 241v3M391.5 247v3M391.5 253v3M391.5 259v3M391.5 265v3M391.5 271v3M391.5 277v3M391.5 283v3M391.5 289v3M391.5 295v3M391.5 301v3M391.5 307v3M391.5 313v3M391.5 319v3M391.5 325v3M391.5 331v3M391.5 337v3M391.5 343v3M391.5 349v3M391.5 355v3M391.5 361v3M391.5 367v3M391.5 373v3M391.5 379v3M391.5 385v3M391.5 391v3M391.5 397v3M391.5 403v3M391.5 409v3M391.5 415v3M391.5 421v3M391.5 427v3M391.5 433v3M391.5 439v3M391.5 445v3M391.5 451v3M391.5 457v3M391.5 463v3M391.5 469v3M391.5 475v3M391.5 481v3M391.5 487v3M391.5 493v3M391.5 499v3M391.5 505v3M391.5 511v3M391.5 517v3M391.5 523v3M391.5 529v3M391.5 535v3M391.5 541v3M391.5 547v3M391.5 553v3M391.5 559v3M391.5 565v3M391.5 571v3M391.5 577v3M391.5 583v3M391.5 589v3M391.5 595v2M391.5 598v3M471.5 3v1M471.5 7v3M471.5 13v3M471.5 19v3M471.5 25v3M471.5 31v3M471.5 37v3M471.5 43v3M471.5 49v3M471.5 55v3M471.5 61v3M471.5 67v3M471.5 73v3M471.5 79v3M471.5 85v3M471.5 91v3M471.5 97v3M471.5 103v3M471.5 109v3M471.5 115v3M471.5 121v3M471.5 127v3M471.5 133v3M471.5 139v3M471.5 145v3M471.5 151v3M471.5 157v3M471.5 163v3M471.5 169v3M471.5 175v3M471.5 181v3M471.5 187v3M471.5 193v3M471.5 199v3M471.5 205v3M471.5 211v3M471.5 217v3M471.5 223v3M471.5 229v3M471.5 235v3M471.5 241v3M471.5 247v3M471.5 253v3M471.5 259v3M471.5 265v3M471.5 271v3M471.5 277v3M471.5 283v3M471.5 289v3M471.5 295v3M471.5 301v3M471.5 307v3M471.5 313v3M471.5 319v3M471.5 325v3M471.5 331v3M471.5 337v3M471.5 343v3M471.5 349v3M471.5 355v3M471.5 361v3M471.5 367v3M471.5 373v3M471.5 379v3M471.5 385v3M471.5 391v3M471.5 397v3M471.5 403v3M471.5 409v3M471.5 415v3M471.5 421v3M471.5 427v3M471.5 433v3M471.5 439v3M471.5 445v3M471.5 451v3M471.5 457v3M471.5 463v3M471.5 469v3M471.5 475v3M471.5 481v3M471.5 487v3M471.5 493v3M471.5 499v3M471.5 505v3M471.5 511v3M471.5 517v3M471.5 523v3M471.5 529v3M471.5 535v3M471.5 541v3M471.5 547v3M471.5 553v3M471.5 559v3M471.5 565v3M471.5 571v3M471.5 577v3M471.5 583v3M471.5 589v3M471.5 595v2M471.5 598v3M549.5 3v1M549.5 7v3M549.5 13v3M549.5 19v3M549.5 25v3M549.5 31v3M549.5 37v3M549.5 43v3M549.5 49v3M549.5 55v3M549.5 61v3M549.5 67v3M549.5 73v3M549.5 79v3M549.5 85v3M549.5 91v3M549.5 97v3M549.5 103v3M549.5 109v3M549.5 115v3M549.5 121v3M549.5 127v3M549.5 133v3M549.5 139v3M549.5 145v3M549.5 151v3M549.5 157v3M549.5 163v3M549.5 169v3M549.5 175v3M549.5 181v3M549.5 187v3M549.5 193v3M549.5 199v3M549.5 205v3M549.5 211v3M549.5 217v3M549.5 223v3M549.5 229v3M549.5 235v3M549.5 241v3M549.5 247v3M549.5 253v3M549.5 259v3M549.5 265v3M549.5 271v3M549.5 277v3M549.5 283v3M549.5 289v3M549.5 295v3M549.5 301v3M549.5 307v3M549.5 313v3M549.5 319v3M549.5 325v3M549.5 331v3M549.5 337v3M549.5 343v3M549.5 349v3M549.5 355v3M549.5 361v3M549.5 367v3M549.5 373v3M549.5 379v3M549.5 385v3M549.5 391v3M549.5 397v3M549.5 403v3M549.5 409v3M549.5 415v3M549.5 421v3M549.5 427v3M549.5 433v3M549.5 439v3M549.5 445v3M549.5 451v3M549.5 457v3M549.5 463v3M549.5 469v3M549.5 475v3M549.5 481v3M549.5 487v3M549.5 493v3M549.5 499v3M549.5 505v3M549.5 511v3M549.5 517v3M549.5 523v3M549.5 529v3M549.5 535v3M549.5 541v3M549.5 547v3M549.5 553v3M549.5 559v3M549.5 565v3M549.5 571v3M549.5 577v3M549.5 583v3M549.5 589v3M549.5 595v2M549.5 598v3M623.5 3v1M623.5 7v3M623.5 13v3M623.5 19v3M623.5 25v3M623.5 31v3M623.5 37v3M623.5 43v3M623.5 49v3M623.5 55v3M623.5 61v3M623.5 67v3M623.5 73v3M623.5 79v3M623.5 85v3M623.5 91v3M623.5 97v3M623.5 103v3M623.5 109v3M623.5 115v3M623.5 121v3M623.5 127v3M623.5 133v3M623.5 139v3M623.5 145v3M623.5 151v3M623.5 157v3M623.5 163v3M623.5 169v3M623.5 175v3M623.5 181v3M623.5 187v3M623.5 193v3M623.5 199v3M623.5 205v3M623.5 211v3M623.5 217v3M623.5 223v3M623.5 229v3M623.5 235v3M623.5 241v3M623.5 247v3M623.5 253v3M623.5 259v3M623.5 265v3M623.5 271v3M623.5 277v3M623.5 283v3M623.5 289v3M623.5 295v3M623.5 301v3M623.5 307v3M623.5 313v3M623.5 319v3M623.5 325v3M623.5 331v3M623.5 337v3M623.5 343v3M623.5 349v3M623.5 355v3M623.5 361v3M623.5 367v3M623.5 373v3M623.5 379v3M623.5 385v3M623.5 391v3M623.5 397v3M623.5 403v3M623.5 409v3M623.5 415v3M623.5 421v3M623.5 427v3M623.5 433v3M623.5 439v3M623.5 445v3M623.5 451v3M623.5 457v3M623.5 463v3M623.5 469v3M623.5 475v3M623.5 481v3M623.5 487v3M623.5 493v3M623.5 499v3M623.5 505v3M623.5 511v3M623.5 517v3M623.5 523v3M623.5 529v3M623.5 535v3M623.5 541v3M623.5 547v3M623.5 553v3M623.5 559v3M623.5 565v3M623.5 571v3M623.5 577v3M623.5 583v3M623.5 589v3M623.5 595v2M623.5 598v3M703.5 3v1M703.5 7v3M703.5 13v3M703.5 19v3M703.5 25v3M703.5 31v3M703.5 37v3M703.5 43v3M703.5 49v3M703.5 55v3M703.5 61v3M703.5 67v3M703.5 73v3M703.5 79v3M703.5 85v3M703.5 91v3M703.5 97v3M703.5 103v3M703.5 109v3M703.5 115v3M703.5 121v3M703.5 127v3M703.5 133v3M703.5 139v3M703.5 145v3M703.5 151v3M703.5 157v3M703.5 163v3M703.5 169v3M703.5 175v3M703.5 181v3M703.5 187v3M703.5 193v3M703.5 199v3M703.5 205v3M703.5 211v3M703.5 217v3M703.5 223v3M703.5 229v3M703.5 235v3M703.5 241v3M703.5 247v3M703.5 253v3M703.5 259v3M703.5 265v3M703.5 271v3M703.5 277v3M703.5 283v3M703.5 289v3M703.5 295v3M703.5 301v3M703.5 307v3M703.5 313v3M703.5 319v3M703.5 325v3M703.5 331v3M703.5 337v3M703.5 343v3M703.5 349v3M703.5 355v3M703.5 361v3M703.5 367v3M703.5 373v3M703.5 379v3M703.5 385v3M703.5 391v3M703.5 397v3M703.5 403v3M703.5 409v3M703.5 415v3M703.5 421v3M703.5 427v3M703.5 433v3M703.5 439v3M703.5 445v3M703.5 451v3M703.5 457v3M703.5 463v3M703.5 469v3M703.5 475v3M703.5 481v3M703.5 487v3M703.5 493v3M703.5 499v3M703.5 505v3M703.5 511v3M703.5 517v3M703.5 523v3M703.5 529v3M703.5 535v3M703.5 541v3M703.5 547v3M703.5 553v3M703.5 559v3M703.5 565v3M703.5 571v3M703.5 577v3M703.5 583v3M703.5 589v3M703.5 595v2M703.5 598v3M775.5 3v1M775.5 7v3M775.5 13v3M775.5 19v3M775.5 25v3M775.5 31v3M775.5 37v3M775.5 43v3M775.5 49v3M775.5 55v3M775.5 61v3M775.5 67v3M775.5 73v3M775.5 79v3M775.5 85v3M775.5 91v3M775.5 97v3M775.5 103v3M775.5 109v3M775.5 115v3M775.5 121v3M775.5 127v3M775.5 133v3M775.5 139v3M775.5 145v3M775.5 151v3M775.5 157v3M775.5 163v3M775.5 169v3M775.5 175v3M775.5 181v3M775.5 187v3M775.5 193v3M775.5 199v3M775.5 205v3M775.5 211v3M775.5 217v3M775.5 223v3M775.5 229v3M775.5 235v3M775.5 241v3M775.5 247v3M775.5 253v3M775.5 259v3M775.5 265v3M775.5 271v3M775.5 277v3M775.5 283v3M775.5 289v3M775.5 295v3M775.5 301v3M775.5 307v3M775.5 313v3M775.5 319v3M775.5 325v3M775.5 331v3M775.5 337v3M775.5 343v3M775.5 349v3M775.5 355v3M775.5 361v3M775.5 367v3M775.5 373v3M775.5 379v3M775.5 385v3M775.5 391v3M775.5 397v3M775.5 403v3M775.5 409v3M775.5 415v3M775.5 421v3M775.5 427v3M775.5 433v3M775.5 439v3M775.5 445v3M775.5 451v3M775.5 457v3M775.5 463v3M775.5 469v3M775.5 475v3M775.5 481v3M775.5 487v3M775.5 493v3M775.5 499v3M775.5 505v3M775.5 511v3M775.5 517v3M775.5 523v3M775.5 529v3M775.5 535v3M775.5 541v3M775.5 547v3M775.5 553v3M775.5 559v3M775.5 565v3M775.5 571v3M775.5 577v3M775.5 583v3M775.5 589v3M775.5 595v2M775.5 598v3M853.5 3v1M853.5 7v3M853.5 13v3M853.5 19v3M853.5 25v3M853.5 31v3M853.5 37v3M853.5 43v3M853.5 49v3M853.5 55v3M853.5 61v3M853.5 67v3M853.5 73v3M853.5 79v3M853.5 85v3M853.5 91v3M853.5 97v3M853.5 103v3M853.5 109v3M853.5 115v3M853.5 121v3M853.5 127v3M853.5 133v3M853.5 139v3M853.5 145v3M853.5 151v3M853.5 157v3M853.5 163v3M853.5 169v3M853.5 175v3M853.5 181v3M853.5 187v3M853.5 193v3M853.5 199v3M853.5 205v3M853.5 211v3M853.5 217v3M853.5 223v3M853.5 229v3M853.5 235v3M853.5 241v3M853.5 247v3M853.5 253v3M853.5 259v3M853.5 265v3M853.5 271v3M853.5 277v3M853.5 283v3M853.5 289v3M853.5 295v3M853.5 301v3M853.5 307v3M853.5 313v3M853.5 319v3M853.5 325v3M853.5 331v3M853.5 337v3M853.5 343v3M853.5 349v3M853.5 355v3M853.5 361v3M853.5 367v3M853.5 373v3M853.5 379v3M853.5 385v3M853.5 391v3M853.5 397v3M853.5 403v3M853.5 409v3M853.5 415v3M853.5 421v3M853.5 427v3M853.5 433v3M853.5 439v3M853.5 445v3M853.5 451v3M853.5 457v3M853.5 463v3M853.5 469v3M853.5 475v3M853.5 481v3M853.5 487v3M853.5 493v3M853.5 499v3M853.5 505v3M853.5 511v3M853.5 517v3M853.5 523v3M853.5 529v3M853.5 535v3M853.5 541v3M853.5 547v3M853.5 553v3M853.5 559v3M853.5 565v3M853.5 571v3M853.5 577v3M853.5 583v3M853.5 589v3M853.5 595v2M853.5 598v3" stroke="#888888" stroke-width="1" fill="none"/><path d="M6.5 522V542M5 531.5h1M7 532.5h1M8.5 526V541M7 532.5h1M9 528.5h1M10.5 521V537M9 528.5h1M11 533.5h1M12.5 501V525M11 524.5h1M13 521.5h1M14.5 492V506M13 505.5h1M15 492.5h1M16.5 500V513M15 500.5h1M17 501.5h1M18.5 505V523M17 505.5h1M19 522.5h1M20.5 512V522M19 521.5h1M21 513.5h1M22.5 506V517M21 513.5h1M23 511.5h1M24.5 506V517M23 511.5h1M25 515.5h1M26.5 494V516M25 515.5h1M27 495.5h1M28.5 498V511M27 498.5h1M29 506.5h1M30.5 490V499M29 498.5h1M31 493.5h1M32.5 490V499M31 493.5h1M33 490.5h1M34.5 482V492M33 490.5h1M35 483.5h1M36.5 476V488M35 483.5h1M37 482.5h1M38.5 480V494M37 482.5h1M39 486.5h1M40.5 480V494M39 486.5h1M41 481.5h1M42.5 482V492M41 482.5h1M43 485.5h1M44.5 480V488M43 485.5h1M45 481.5h1M46.5 472V483M45 481.5h1M47 480.5h1M48.5 472V483M47 480.5h1M49 478.5h1M50.5 470V479M49 478.5h1M51 470.5h1M52.5 462V472M51 470.5h1M53 471.5h1M54.5 466V474M53 471.5h1M55 467.5h1M56.5 466V474M55 467.5h1M57 469.5h1M58.5 464V469M57 468.5h1M59 468.5h1M60.5 444V466M59 465.5h1M61 445.5h1M62.5 442V449M61 445.5h1M63 446.5h1M64.5 442V449M63 446.5h1M65 446.5h1M66.5 439V445M65 444.5h1M67 442.5h1M68.5 425V441M67 440.5h1M69 426.5h1M70.5 424V430M69 426.5h1M71 425.5h1M72.5 429V453M71 429.5h1M73 430.5h1M74.5 430V456M73 430.5h1M75 447.5h1M76.5 404V432M75 431.5h1M77 431.5h1M78.5 385V405M77 404.5h1M79 389.5h1M80.5 385V405M79 389.5h1M81 394.5h1M82.5 364V389M81 388.5h1M83 377.5h1M84.5 352V395M83 377.5h1M85 361.5h1M86.5 385V396M85 385.5h1M87 393.5h1M88.5 370V393M87 392.5h1M89 373.5h1M90.5 378V405M89 378.5h1M91 396.5h1M92.5 378V405M91 396.5h1M93 387.5h1M94.5 376V412M93 387.5h1M95 411.5h1M96.5 378V400M95 399.5h1M97 399.5h1M98.5 388V409M97 399.5h1M99 393.5h1M100.5 352V390M99 389.5h1M101 358.5h1M102.5 352V384M101 358.5h1M103 364.5h1M104.5 358V391M103 364.5h1M105 381.5h1M106.5 349V375M105 374.5h1M107 352.5h1M108.5 340V363M107 352.5h1M109 357.5h1M110.5 336V358M109 357.5h1M111 338.5h1M112.5 346V368M111 346.5h1M113 364.5h1M114.5 346V368M113 364.5h1M115 347.5h1M116.5 353V400M115 353.5h1M117 392.5h1M118.5 390V409M117 392.5h1M119 396.5h1M120.5 385V410M119 396.5h1M121 400.5h1M122.5 385V410M121 400.5h1M123 406.5h1M124.5 394V417M123 406.5h1M125 411.5h1M126.5 386V410M125 409.5h1M127 399.5h1M128.5 386V410M127 399.5h1M129 396.5h1M130.5 380V395M129 394.5h1M131 387.5h1M132.5 380V395M131 387.5h1M133 389.5h1M134.5 393V414M133 393.5h1M135 407.5h1M136.5 401V419M135 407.5h1M137 412.5h1M138.5 401V419M137 412.5h1M139 410.5h1M140.5 399V417M139 410.5h1M141 406.5h1M142.5 376V417M141 406.5h1M143 387.5h1M144.5 376V417M143 387.5h1M145 391.5h1M146.5 356V377M145 376.5h1M147 358.5h1M148.5 360V372M147 360.5h1M149 369.5h1M150.5 359V368M149 367.5h1M151 363.5h1M152.5 359V368M151 363.5h1M153 367.5h1M154.5 343V361M153 360.5h1M155 358.5h1M156.5 355V396M155 358.5h1M157 376.5h1M158.5 362V393M157 376.5h1M159 385.5h1M160.5 362V393M159 385.5h1M161 376.5h1M162.5 363V379M161 376.5h1M163 372.5h1M164.5 370V400M163 372.5h1M165 389.5h1M166.5 380V414M165 389.5h1M167 384.5h1M168.5 380V414M167 384.5h1M169 387.5h1M170.5 402V417M169 402.5h1M171 410.5h1M172.5 405V425M171 410.5h1M173 418.5h1M174.5 405V425M173 418.5h1M175 410.5h1M176.5 402V431M175 410.5h1M177 426.5h1M178.5 388V417M177 416.5h1M179 398.5h1M180.5 388V417M179 398.5h1M181 392.5h1M182.5 377V400M181 392.5h1M183 392.5h1M184.5 377V400M183 392.5h1M185 390.5h1M186.5 388V406M185 390.5h1M187 389.5h1M188.5 402V423M187 402.5h1M189 404.5h1M190.5 402V423M189 404.5h1M191 419.5h1M192.5 387V403M191 402.5h1M193 397.5h1M194.5 387V403M193 397.5h1M195 397.5h1M196.5 388V400M195 397.5h1M197 399.5h1M198.5 394V420M197 399.5h1M199 405.5h1M200.5 381V397M199 396.5h1M201 396.5h1M202.5 381V397M201 396.5h1M203 395.5h1M204.5 368V383M203 382.5h1M205 369.5h1M206.5 368V383M205 369.5h1M207 381.5h1M208.5 363V381M207 380.5h1M209 365.5h1M210.5 363V381M209 365.5h1M211 371.5h1M212.5 349V364M211 363.5h1M213 356.5h1M214.5 349V364M213 356.5h1M215 360.5h1M216.5 345V367M215 360.5h1M217 366.5h1M218.5 345V367M217 366.5h1M219 347.5h1M220.5 338V347M219 346.5h1M221 338.5h1M222.5 338V344M221 338.5h1M223 343.5h1M224.5 315V340M223 339.5h1M225 337.5h1M226.5 293V317M225 316.5h1M227 302.5h1M228.5 273V297M227 296.5h1M229 293.5h1M230.5 273V297M229 293.5h1M231 291.5h1M232.5 265V288M231 287.5h1M233 286.5h1M234.5 248V291M233 286.5h1M235 276.5h1M236.5 248V291M235 276.5h1M237 266.5h1M238.5 270V294M237 270.5h1M239 292.5h1M240.5 270V294M239 292.5h1M241 282.5h1M242.5 256V280M241 279.5h1M243 277.5h1M244.5 245V266M243 265.5h1M245 256.5h1M246.5 234V252M245 251.5h1M247 234.5h1M248.5 234V252M247 234.5h1M249 248.5h1M250.5 237V260M249 248.5h1M251 248.5h1M252.5 227V257M251 248.5h1M253 232.5h1M254.5 227V257M253 232.5h1M255 246.5h1M256.5 242V283M255 246.5h1M257 249.5h1M258.5 279V305M257 279.5h1M259 294.5h1M260.5 279V305M259 294.5h1M261 280.5h1M262.5 303V335M261 303.5h1M263 316.5h1M264.5 312V338M263 316.5h1M265 336.5h1M266.5 312V338M265 336.5h1M267 321.5h1M268.5 336V387M267 336.5h1M269 344.5h1M270.5 357V416M269 357.5h1M271 404.5h1M272.5 363V427M271 404.5h1M273 394.5h1M274.5 363V427M273 394.5h1M275 413.5h1M276.5 366V398M275 397.5h1M277 391.5h1M278.5 383V407M277 391.5h1M279 398.5h1M280.5 383V407M279 398.5h1M281 385.5h1M282.5 383V424M281 385.5h1M283 393.5h1M284.5 360V385M283 384.5h1M285 374.5h1M286.5 360V378M285 374.5h1M287 372.5h1M288.5 352V387M287 372.5h1M289 369.5h1M290.5 377V393M289 377.5h1M291 381.5h1M292.5 391V427M291 391.5h1M293 418.5h1M294.5 400V427M293 418.5h1M295 417.5h1M296.5 425V467M295 425.5h1M297 442.5h1M298.5 465V516M297 465.5h1M299 510.5h1M300.5 472V516M299 510.5h1M301 498.5h1M302.5 460V493M301 492.5h1M303 482.5h1M304.5 466V490M303 482.5h1M305 487.5h1M306.5 466V490M305 487.5h1M307 478.5h1M308.5 463V490M307 478.5h1M309 470.5h1M310.5 455V479M309 470.5h1M311 459.5h1M312.5 455V479M311 459.5h1M313 457.5h1M314.5 466V493M313 466.5h1M315 471.5h1M316.5 420V468M315 467.5h1M317 429.5h1M318.5 397V421M317 420.5h1M319 404.5h1M320.5 397V421M319 404.5h1M321 418.5h1M322.5 386V410M321 409.5h1M323 393.5h1M324.5 374V401M323 393.5h1M325 374.5h1M326.5 374V401M325 374.5h1M327 389.5h1M328.5 372V387M327 386.5h1M329 385.5h1M330.5 352V374M329 373.5h1M331 370.5h1M332.5 323V354M331 353.5h1M333 328.5h1M334.5 323V341M333 328.5h1M335 331.5h1M336.5 298V329M335 328.5h1M337 307.5h1M338.5 292V320M337 307.5h1M339 292.5h1M340.5 292V320M339 292.5h1M341 296.5h1M342.5 318V374M341 318.5h1M343 344.5h1M344.5 357V387M343 357.5h1M345 374.5h1M346.5 357V387M345 374.5h1M347 368.5h1M348.5 352V379M347 368.5h1M349 371.5h1M350.5 313V354M349 353.5h1M351 349.5h1M352.5 313V329M351 328.5h1M353 323.5h1M354.5 313V329M353 323.5h1M355 317.5h1M356.5 302V324M355 317.5h1M357 318.5h1M358.5 300V312M357 311.5h1M359 309.5h1M360.5 300V312M359 309.5h1M361 310.5h1M362.5 261V302M361 301.5h1M363 264.5h1M364.5 252V279M363 264.5h1M365 266.5h1M366.5 252V279M365 266.5h1M367 276.5h1M368.5 277V299M367 277.5h1M369 298.5h1M370.5 296V320M369 298.5h1M371 313.5h1M372.5 315V343M371 315.5h1M373 327.5h1M374.5 319V349M373 327.5h1M375 331.5h1M376.5 319V349M375 331.5h1M377 331.5h1M378.5 302V333M377 331.5h1M379 314.5h1M380.5 302V333M379 314.5h1M381 305.5h1M382.5 309V362M381 309.5h1M383 339.5h1M384.5 334V364M383 339.5h1M385 354.5h1M386.5 334V364M385 354.5h1M387 346.5h1M388.5 336V353M387 346.5h1M389 337.5h1M390.5 336V353M389 337.5h1M391 342.5h1M392.5 330V362M391 342.5h1M393 334.5h1M394.5 328V343M393 334.5h1M395 331.5h1M396.5 328V343M395 331.5h1M397 335.5h1M398.5 336V362M397 336.5h1M399 341.5h1M400.5 352V381M399 352.5h1M401 355.5h1M402.5 352V381M401 355.5h1M403 362.5h1M404.5 340V366M403 362.5h1M405 359.5h1M406.5 319V345M405 344.5h1M407 320.5h1M408.5 319V345M407 320.5h1M409 322.5h1M410.5 330V349M409 330.5h1M411 330.5h1M412.5 292V333M411 330.5h1M413 328.5h1M414.5 292V333M413 328.5h1M415 301.5h1M416.5 300V314M415 301.5h1M417 308.5h1M418.5 300V314M417 308.5h1M419 301.5h1M420.5 312V341M419 312.5h1M421 323.5h1M422.5 332V356M421 332.5h1M423 351.5h1M424.5 332V356M423 351.5h1M425 332.5h1M426.5 322V343M425 332.5h1M427 324.5h1M428.5 303V331M427 324.5h1M429 330.5h1M430.5 315V341M429 330.5h1M431 321.5h1M432.5 315V333M431 321.5h1M433 327.5h1M434.5 315V333M433 327.5h1M435 319.5h1M436.5 332V350M435 332.5h1M437 340.5h1M438.5 332V350M437 340.5h1M439 343.5h1M440.5 348V375M439 348.5h1M441 367.5h1M442.5 357V371M441 367.5h1M443 362.5h1M444.5 342V364M443 362.5h1M445 357.5h1M446.5 342V364M445 357.5h1M447 345.5h1M448.5 340V358M447 345.5h1M449 343.5h1M450.5 347V366M449 347.5h1M451 362.5h1M452.5 353V371M451 362.5h1M453 367.5h1M454.5 353V371M453 367.5h1M455 368.5h1M456.5 351V373M455 368.5h1M457 366.5h1M458.5 330V353M457 352.5h1M459 339.5h1M460.5 330V341M459 339.5h1M461 331.5h1M462.5 324V339M461 331.5h1M463 326.5h1M464.5 290V326M463 325.5h1M465 296.5h1M466.5 290V302M465 296.5h1M467 301.5h1M468.5 290V302M467 301.5h1M469 295.5h1M470.5 259V292M469 291.5h1M471 275.5h1M472.5 270V287M471 275.5h1M473 285.5h1M474.5 270V287M473 285.5h1M475 275.5h1M476.5 253V271M475 270.5h1M477 269.5h1M478.5 245V260M477 259.5h1M479 245.5h1M480.5 245V260M479 245.5h1M481 248.5h1M482.5 258V285M481 258.5h1M483 274.5h1M484.5 268V285M483 274.5h1M485 279.5h1M486.5 274V285M485 279.5h1M487 276.5h1M488.5 253V276M487 275.5h1M489 275.5h1M490.5 253V266M489 265.5h1M491 261.5h1M492.5 264V300M491 264.5h1M493 265.5h1M494.5 288V302M493 288.5h1M495 300.5h1M496.5 288V302M495 300.5h1M497 296.5h1M498.5 292V311M497 296.5h1M499 301.5h1M500.5 259V294M499 293.5h1M501 264.5h1M502.5 247V261M501 260.5h1M503 258.5h1M504.5 247V258M503 257.5h1M505 251.5h1M506.5 234V254M505 251.5h1M507 250.5h1M508.5 247V262M507 250.5h1M509 252.5h1M510.5 247V262M509 252.5h1M511 261.5h1M512.5 257V279M511 261.5h1M513 262.5h1M514.5 257V279M513 262.5h1M515 268.5h1M516.5 278V298M515 278.5h1M517 285.5h1M518.5 279V299M517 285.5h1M519 296.5h1M520.5 285V309M519 296.5h1M521 302.5h1M522.5 275V288M521 287.5h1M523 287.5h1M524.5 254V276M523 275.5h1M525 270.5h1M526.5 254V276M525 270.5h1M527 264.5h1M528.5 258V280M527 264.5h1M529 278.5h1M530.5 258V280M529 278.5h1M531 265.5h1M532.5 262V288M531 265.5h1M533 281.5h1M534.5 248V273M533 272.5h1M535 272.5h1M536.5 248V273M535 272.5h1M537 254.5h1M538.5 243V257M537 254.5h1M539 255.5h1M540.5 225V253M539 252.5h1M541 232.5h1M542.5 202V227M541 226.5h1M543 214.5h1M544.5 195V211M543 210.5h1M545 202.5h1M546.5 192V213M545 202.5h1M547 198.5h1M548.5 192V213M547 198.5h1M549 208.5h1M550.5 198V217M549 208.5h1M551 213.5h1M552.5 198V217M551 213.5h1M553 209.5h1M554.5 181V201M553 200.5h1M555 181.5h1M556.5 181V201M555 181.5h1M557 181.5h1M558.5 183V201M557 183.5h1M559 191.5h1M560.5 187V213M559 191.5h1M561 202.5h1M562.5 187V213M561 202.5h1M563 195.5h1M564.5 202V228M563 202.5h1M565 208.5h1M566.5 214V232M565 214.5h1M567 225.5h1M568.5 214V232M567 225.5h1M569 228.5h1M570.5 212V230M569 228.5h1M571 223.5h1M572.5 214V228M571 223.5h1M573 219.5h1M574.5 214V228M573 219.5h1M575 215.5h1M576.5 208V223M575 215.5h1M577 211.5h1M578.5 221V238M577 221.5h1M579 224.5h1M580.5 225V238M579 225.5h1M581 228.5h1M582.5 236V271M581 236.5h1M583 266.5h1M584.5 260V282M583 266.5h1M585 266.5h1M586.5 256V278M585 266.5h1M587 266.5h1M588.5 264V284M587 266.5h1M589 270.5h1M590.5 264V284M589 270.5h1M591 279.5h1M592.5 243V266M591 265.5h1M593 262.5h1M594.5 222V245M593 244.5h1M595 241.5h1M596.5 222V236M595 235.5h1M597 235.5h1M598.5 216V234M597 233.5h1M599 216.5h1M600.5 183V223M599 216.5h1M601 213.5h1M602.5 175V201M601 200.5h1M603 195.5h1M604.5 175V201M603 195.5h1M605 186.5h1M606.5 181V205M605 186.5h1M607 201.5h1M608.5 181V205M607 201.5h1M609 183.5h1M610.5 170V215M609 183.5h1M611 212.5h1M612.5 190V215M611 212.5h1M613 193.5h1M614.5 188V204M613 193.5h1M615 200.5h1M616.5 190V202M615 200.5h1M617 201.5h1M618.5 174V191M617 190.5h1M619 180.5h1M620.5 143V176M619 175.5h1M621 173.5h1M622.5 143V166M621 165.5h1M623 148.5h1M624.5 146V160M623 148.5h1M625 152.5h1M626.5 148V162M625 152.5h1M627 160.5h1M628.5 152V169M627 160.5h1M629 162.5h1M630.5 163V202M629 163.5h1M631 168.5h1M632.5 163V202M631 168.5h1M633 188.5h1M634.5 192V202M633 192.5h1M635 199.5h1M636.5 200V219M635 200.5h1M637 212.5h1M638.5 188V213M637 212.5h1M639 211.5h1M640.5 185V209M639 208.5h1M641 187.5h1M642.5 196V215M641 196.5h1M643 201.5h1M644.5 188V209M643 201.5h1M645 193.5h1M646.5 183V204M645 193.5h1M647 187.5h1M648.5 183V204M647 187.5h1M649 183.5h1M650.5 161V185M649 183.5h1M651 165.5h1M652.5 161V182M651 165.5h1M653 179.5h1M654.5 156V182M653 179.5h1M655 170.5h1M656.5 180V237M655 180.5h1M657 231.5h1M658.5 235V259M657 235.5h1M659 255.5h1M660.5 245V268M659 255.5h1M661 249.5h1M662.5 250V277M661 250.5h1M663 269.5h1M664.5 250V277M663 269.5h1M665 276.5h1M666.5 267V295M665 276.5h1M667 286.5h1M668.5 263V279M667 278.5h1M669 278.5h1M670.5 256V273M669 272.5h1M671 267.5h1M672.5 245V259M671 258.5h1M673 247.5h1M674.5 232V255M673 247.5h1M675 249.5h1M676.5 238V268M675 249.5h1M677 255.5h1M678.5 266V290M677 266.5h1M679 270.5h1M680.5 250V268M679 267.5h1M681 250.5h1M682.5 232V251M681 250.5h1M683 232.5h1M684.5 232V251M683 232.5h1M685 235.5h1M686.5 223V235M685 234.5h1M687 231.5h1M688.5 216V228M687 227.5h1M689 227.5h1M690.5 176V218M689 217.5h1M691 184.5h1M692.5 174V191M691 184.5h1M693 187.5h1M694.5 168V189M693 187.5h1M695 174.5h1M696.5 172V193M695 174.5h1M697 178.5h1M698.5 176V204M697 178.5h1M699 176.5h1M700.5 169V193M699 176.5h1M701 177.5h1M702.5 163V184M701 177.5h1M703 169.5h1M704.5 163V184M703 169.5h1M705 172.5h1M706.5 163V175M705 172.5h1M707 171.5h1M708.5 156V173M707 171.5h1M709 163.5h1M710.5 161V171M709 163.5h1M711 170.5h1M712.5 154V166M711 165.5h1M713 159.5h1M714.5 139V162M713 159.5h1M715 147.5h1M716.5 143V166M715 147.5h1M717 160.5h1M718.5 143V159M717 158.5h1M719 156.5h1M720.5 134V146M719 145.5h1M721 136.5h1M722.5 139V148M721 139.5h1M723 139.5h1M724.5 123V146M723 139.5h1M725 134.5h1M726.5 144V162M725 144.5h1M727 158.5h1M728.5 132V146M727 145.5h1M729 142.5h1M730.5 128V142M729 141.5h1M731 137.5h1M732.5 134V149M731 137.5h1M733 147.5h1M734.5 147V159M733 147.5h1M735 155.5h1M736.5 156V166M735 156.5h1M737 162.5h1M738.5 158V169M737 162.5h1M739 166.5h1M740.5 156V164M739 163.5h1M741 158.5h1M742.5 147V158M741 157.5h1M743 155.5h1M744.5 123V149M743 148.5h1M745 127.5h1M746.5 117V126M745 125.5h1M747 125.5h1M748.5 125V142M747 125.5h1M749 141.5h1M750.5 141V151M749 141.5h1M751 141.5h1M752.5 147V155M751 147.5h1M753 154.5h1M754.5 148V180M753 154.5h1M755 159.5h1M756.5 145V168M755 159.5h1M757 164.5h1M758.5 161V186M757 164.5h1M759 161.5h1M760.5 167V180M759 167.5h1M761 179.5h1M762.5 163V195M761 179.5h1M763 172.5h1M764.5 176V195M763 176.5h1M765 181.5h1M766.5 167V180M765 179.5h1M767 169.5h1M768.5 148V169M767 168.5h1M769 163.5h1M770.5 148V166M769 163.5h1M771 151.5h1M772.5 143V155M771 151.5h1M773 151.5h1M774.5 143V159M773 151.5h1M775 144.5h1M776.5 141V149M775 144.5h1M777 146.5h1M778.5 139V149M777 146.5h1M779 147.5h1M780.5 145V159M779 147.5h1M781 153.5h1M782.5 116V147M781 146.5h1M783 133.5h1M784.5 99V122M783 121.5h1M785 114.5h1M786.5 86V104M785 103.5h1M787 89.5h1M788.5 78V97M787 89.5h1M789 95.5h1M790.5 86V120M789 95.5h1M791 89.5h1M792.5 103V138M791 103.5h1M793 118.5h1M794.5 105V120M793 118.5h1M795 108.5h1M796.5 114V126M795 114.5h1M797 118.5h1M798.5 109V131M797 118.5h1M799 110.5h1M800.5 107V115M799 110.5h1M801 108.5h1M802.5 90V109M801 108.5h1M803 106.5h1M804.5 76V92M803 91.5h1M805 90.5h1M806.5 83V96M805 90.5h1M807 91.5h1M808.5 83V94M807 91.5h1M809 83.5h1M810.5 90V114M809 90.5h1M811 92.5h1M812.5 94V102M811 94.5h1M813 101.5h1M814.5 95V105M813 101.5h1M815 100.5h1M816.5 95V101M815 100.5h1M817 99.5h1M818.5 81V104M817 99.5h1M819 97.5h1M820.5 83V95M819 94.5h1M821 92.5h1M822.5 82V89M821 88.5h1M823 86.5h1M824.5 87V111M823 87.5h1M825 93.5h1M826.5 60V89M825 88.5h1M827 82.5h1M828.5 62V67M827 66.5h1M829 64.5h1M830.5 58V70M829 64.5h1M831 65.5h1M832.5 49V66M831 65.5h1M833 65.5h1" stroke="#FFFF00" stroke-width="1" fill="none"/><rect x="901" y="3" width="9" height="7" fill="#00FF00"/><rect x="901" y="10" width="9" height="34" fill="#008000"/><rect x="902" y="11" width="7" height="6" fill="#fff"/><rect x="902" y="19" width="7" height="11" fill="#fff"/><rect x="902" y="32" width="7" height="11" fill="#fff"/><path d="M902 11l6 5M908 11l-6 5M905.5 20v9M903 22l2 -2l2 2M905.5 33v9M903 35l2 -2l2 2M903 40l2 2l2 -2" stroke="#000" fill="none"/><rect x="901" y="589" width="9" height="8" fill="#00FF00"/><rect x="901" y="563" width="9" height="26" fill="#008000"/><rect x="902" y="564" width="7" height="12" fill="#fff"/><rect x="902" y="577" width="7" height="11" fill="#fff"/><path d="M905.5 578v9M903 585l2 2l2 -2M903 565l2 2l2 -2M903 575l2 -2l2 2M905.5 567v6" stroke="#000" fill="none"/><rect x="901" y="293" width="9" height="13" fill="#008000"/><rect x="902" y="294" width="7" height="11" fill="#fff"/><path d="M904 296h3M904 303h3M903 297h1M907 297h1M903 302h1M907 302h1" stroke="#000" transform="translate(0,0.5)"/><path d="M902.5 298v4M908.5 298v4" stroke="#000"/><rect x="833" y="597" width="4" height="4" fill="#FFFF00"/><path d="M4.5 2V598 M4 2.5H911 M910.5 2V598 M4 597.5H911" stroke="#FFFFFF" stroke-width="1" fill="none"/><path d="M5 8h18v2h-18zM23 9h41v2h-41zM64 8h20v2h-20zM84 7h12v2h-12zM96 6h11v2h-11zM107 5h11v2h-11zM118 4h10v2h-10zM128 3h11v2h-11zM139 2h10v2h-10zM149 1h10v2h-10zM5 67h9v1h-9zM14 68h10v1h-10zM24 69h39v1h-39zM63 68h14v1h-14zM77 67h16v1h-16zM93 66h11v1h-11zM104 65h11v1h-11zM115 64h11v1h-11zM126 63h10v1h-10zM136 62h11v1h-11zM147 61h9v1h-9zM156 60h9v1h-9zM165 59h7v1h-7zM172 58h8v1h-8zM180 57h7v1h-7zM187 56h7v1h-7zM194 55h6v1h-6zM200 54h7v1h-7zM207 53h6v1h-6zM213 52h6v1h-6zM219 51h6v1h-6zM225 50h7v1h-7zM232 49h6v1h-6zM238 48h7v1h-7zM245 47h7v1h-7zM252 46h8v1h-8zM260 45h7v1h-7zM267 44h8v1h-8zM275 43h7v1h-7zM282 42h7v1h-7zM289 41h8v1h-8zM297 40h7v1h-7zM304 39h8v1h-8zM312 38h7v1h-7zM319 37h6v1h-6zM325 36h7v1h-7zM332 35h7v1h-7zM339 34h7v1h-7zM346 33h7v1h-7zM353 32h7v1h-7zM360 31h7v1h-7zM367 30h6v1h-6zM373 29h7v1h-7zM380 28h7v1h-7zM387 27h7v1h-7zM394 26h6v1h-6zM400 25h7v1h-7zM407 24h6v1h-6zM413 23h7v1h-7zM420 22h6v1h-6zM426 21h6v1h-6zM432 20h7v1h-7zM439 19h6v1h-6zM445 18h7v1h-7zM452 17h6v1h-6zM458 16h7v1h-7zM465 15h6v1h-6zM471 14h7v1h-7zM478 13h7v1h-7zM485 12h6v1h-6zM491 11h7v1h-7zM498 10h7v1h-7zM505 9h6v1h-6zM511 8h7v1h-7zM518 7h7v1h-7zM525 6h6v1h-6zM531 5h7v1h-7zM538 4h7v1h-7zM545 3h6v1h-6zM551 2h5v1h-5zM5 125h17v2h-17zM22 126h13v2h-13zM35 127h20v2h-20zM55 126h11v2h-11zM66 125h24v2h-24zM90 124h11v2h-11zM101 123h11v2h-11zM112 122h11v2h-11zM123 121h11v2h-11zM134 120h11v2h-11zM145 119h9v2h-9zM154 118h10v2h-10zM164 117h7v2h-7zM171 116h7v2h-7zM178 115h7v2h-7zM185 114h7v2h-7zM192 113h7v2h-7zM199 112h6v2h-6zM205 111h6v2h-6zM211 110h7v2h-7zM218 109h6v2h-6zM224 108h6v2h-6zM230 107h6v2h-6zM236 106h7v2h-7zM243 105h8v2h-8zM251 104h7v2h-7zM258 103h7v2h-7zM265 102h8v2h-8zM273 101h7v2h-7zM280 100h8v2h-8zM288 99h7v2h-7zM295 98h7v2h-7zM302 97h8v2h-8zM310 96h7v2h-7zM317 95h7v2h-7zM324 94h7v2h-7zM331 93h6v2h-6zM337 92h7v2h-7zM344 91h7v2h-7zM351 90h7v2h-7zM358 89h7v2h-7zM365 88h7v2h-7zM372 87h7v2h-7zM379 86h6v2h-6zM385 85h7v2h-7zM392 84h7v2h-7zM399 83h6v2h-6zM405 82h7v2h-7zM412 81h6v2h-6zM418 80h6v2h-6zM424 79h7v2h-7zM431 78h6v2h-6zM437 77h7v2h-7zM444 76h6v2h-6zM450 75h7v2h-7zM457 74h6v2h-6zM463 73h7v2h-7zM470 72h6v2h-6zM476 71h7v2h-7zM483 70h7v2h-7zM490 69h6v2h-6zM496 68h7v2h-7zM503 67h7v2h-7zM510 66h6v2h-6zM516 65h7v2h-7zM523 64h7v2h-7zM530 63h6v2h-6zM536 62h7v2h-7zM543 61h7v2h-7zM550 60h5v2h-5zM555 59h5v2h-5zM560 58h6v2h-6zM566 57h5v2h-5zM571 56h6v2h-6zM577 55h5v2h-5zM582 54h6v2h-6zM588 53h5v2h-5zM593 52h5v2h-5zM598 51h6v2h-6zM604 50h5v2h-5zM609 49h5v2h-5zM614 48h5v2h-5zM619 47h5v2h-5zM624 46h6v2h-6zM630 45h6v2h-6zM636 44h6v2h-6zM642 43h6v2h-6zM648 42h7v2h-7zM655 41h6v2h-6zM661 40h6v2h-6zM667 39h6v2h-6zM673 38h6v2h-6zM679 37h7v2h-7zM686 36h6v2h-6zM692 35h6v2h-6zM698 34h6v2h-6zM704 33h5v2h-5zM709 32h5v2h-5zM714 31h5v2h-5zM719 30h5v2h-5zM724 29h5v2h-5zM729 28h5v2h-5zM734 27h5v2h-5zM739 26h5v2h-5zM744 25h5v2h-5zM749 24h5v2h-5zM754 23h5v2h-5zM759 22h5v2h-5zM764 21h5v2h-5zM769 20h4v2h-4zM773 19h6v2h-6zM779 18h6v2h-6zM785 17h6v2h-6zM791 16h7v2h-7zM798 15h6v2h-6zM804 14h6v2h-6zM810 13h6v2h-6zM816 12h6v2h-6zM822 11h6v2h-6zM828 10h6v2h-6zM834 9h6v2h-6zM840 8h6v2h-6zM846 7h6v2h-6zM852 6h7v2h-7zM859 5h7v2h-7zM866 4h6v2h-6zM872 3h7v2h-7zM879 2h7v2h-7zM886 1h7v2h-7zM5 185h18v1h-18zM23 186h42v1h-42zM65 185h22v1h-22zM87 184h11v1h-11zM98 183h11v1h-11zM109 182h11v1h-11zM120 181h11v1h-11zM131 180h11v1h-11zM142 179h10v1h-10zM152 178h9v1h-9zM161 177h8v1h-8zM169 176h7v1h-7zM176 175h7v1h-7zM183 174h7v1h-7zM190 173h7v1h-7zM197 172h6v1h-6zM203 171h7v1h-7zM210 170h6v1h-6zM216 169h6v1h-6zM222 168h7v1h-7zM229 167h6v1h-6zM235 166h6v1h-6zM241 165h8v1h-8zM249 164h7v1h-7zM256 163h8v1h-8zM264 162h7v1h-7zM271 161h7v1h-7zM278 160h8v1h-8zM286 159h7v1h-7zM293 158h8v1h-8zM301 157h7v1h-7zM308 156h7v1h-7zM315 155h7v1h-7zM322 154h7v1h-7zM329 153h7v1h-7zM336 152h7v1h-7zM343 151h6v1h-6zM349 150h7v1h-7zM356 149h7v1h-7zM363 148h7v1h-7zM370 147h7v1h-7zM377 146h7v1h-7zM384 145h6v1h-6zM390 144h7v1h-7zM397 143h6v1h-6zM403 142h7v1h-7zM410 141h6v1h-6zM416 140h7v1h-7zM423 139h6v1h-6zM429 138h7v1h-7zM436 137h6v1h-6zM442 136h7v1h-7zM449 135h6v1h-6zM455 134h7v1h-7zM462 133h6v1h-6zM468 132h7v1h-7zM475 131h6v1h-6zM481 130h7v1h-7zM488 129h7v1h-7zM495 128h6v1h-6zM501 127h7v1h-7zM508 126h7v1h-7zM515 125h6v1h-6zM521 124h7v1h-7zM528 123h7v1h-7zM535 122h6v1h-6zM541 121h7v1h-7zM548 120h6v1h-6zM554 119h5v1h-5zM559 118h5v1h-5zM564 117h6v1h-6zM570 116h5v1h-5zM575 115h6v1h-6zM581 114h5v1h-5zM586 113h6v1h-6zM592 112h5v1h-5zM597 111h5v1h-5zM602 110h5v1h-5zM607 109h5v1h-5zM612 108h5v1h-5zM617 107h5v1h-5zM622 106h6v1h-6zM628 105h6v1h-6zM634 104h7v1h-7zM641 103h6v1h-6zM647 102h6v1h-6zM653 101h6v1h-6zM659 100h6v1h-6zM665 99h7v1h-7zM672 98h6v1h-6zM678 97h6v1h-6zM684 96h6v1h-6zM690 95h6v1h-6zM696 94h7v1h-7zM703 93h5v1h-5zM708 92h5v1h-5zM713 91h5v1h-5zM718 90h5v1h-5zM723 89h5v1h-5zM728 88h5v1h-5zM733 87h5v1h-5zM738 86h5v1h-5zM743 85h5v1h-5zM748 84h5v1h-5zM753 83h5v1h-5zM758 82h5v1h-5zM763 81h5v1h-5zM768 80h4v1h-4zM772 79h5v1h-5zM777 78h6v1h-6zM783 77h7v1h-7zM790 76h6v1h-6zM796 75h6v1h-6zM802 74h6v1h-6zM808 73h6v1h-6zM814 72h6v1h-6zM820 71h6v1h-6zM826 70h6v1h-6zM832 69h6v1h-6zM838 68h6v1h-6zM844 67h6v1h-6zM850 66h7v1h-7zM857 65h7v1h-7zM864 64h7v1h-7zM871 63h7v1h-7zM878 62h6v1h-6zM884 61h7v1h-7zM891 60h7v1h-7zM898 59h7v1h-7zM905 58h5v1h-5zM5 243h18v2h-18zM23 244h41v2h-41zM64 243h20v2h-20zM84 242h12v2h-12zM96 241h11v2h-11zM107 240h11v2h-11zM118 239h10v2h-10zM128 238h11v2h-11zM139 237h10v2h-10zM149 236h10v2h-10zM159 235h8v2h-8zM167 234h7v2h-7zM174 233h7v2h-7zM181 232h7v2h-7zM188 231h8v2h-8zM196 230h6v2h-6zM202 229h6v2h-6zM208 228h6v2h-6zM214 227h7v2h-7zM221 226h6v2h-6zM227 225h6v2h-6zM233 224h7v2h-7zM240 223h7v2h-7zM247 222h7v2h-7zM254 221h8v2h-8zM262 220h7v2h-7zM269 219h8v2h-8zM277 218h7v2h-7zM284 217h7v2h-7zM291 216h8v2h-8zM299 215h7v2h-7zM306 214h8v2h-8zM314 213h6v2h-6zM320 212h7v2h-7zM327 211h7v2h-7zM334 210h7v2h-7zM341 209h7v2h-7zM348 208h7v2h-7zM355 207h6v2h-6zM361 206h7v2h-7zM368 205h7v2h-7zM375 204h7v2h-7zM382 203h7v2h-7zM389 202h6v2h-6zM395 201h7v2h-7zM402 200h6v2h-6zM408 199h7v2h-7zM415 198h6v2h-6zM421 197h7v2h-7zM428 196h6v2h-6zM434 195h7v2h-7zM441 194h6v2h-6zM447 193h6v2h-6zM453 192h7v2h-7zM460 191h6v2h-6zM466 190h7v2h-7zM473 189h7v2h-7zM480 188h6v2h-6zM486 187h7v2h-7zM493 186h7v2h-7zM500 185h6v2h-6zM506 184h7v2h-7zM513 183h7v2h-7zM520 182h6v2h-6zM526 181h7v2h-7zM533 180h7v2h-7zM540 179h6v2h-6zM546 178h6v2h-6zM552 177h6v2h-6zM558 176h5v2h-5zM563 175h6v2h-6zM569 174h5v2h-5zM574 173h5v2h-5zM579 172h6v2h-6zM585 171h5v2h-5zM590 170h6v2h-6zM596 169h5v2h-5zM601 168h5v2h-5zM606 167h5v2h-5zM611 166h5v2h-5zM616 165h5v2h-5zM621 164h6v2h-6zM627 163h6v2h-6zM633 162h6v2h-6zM639 161h6v2h-6zM645 160h6v2h-6zM651 159h7v2h-7zM658 158h6v2h-6zM664 157h6v2h-6zM670 156h6v2h-6zM676 155h6v2h-6zM682 154h7v2h-7zM689 153h6v2h-6zM695 152h6v2h-6zM701 151h6v2h-6zM707 150h5v2h-5zM712 149h5v2h-5zM717 148h5v2h-5zM722 147h5v2h-5zM727 146h5v2h-5zM732 145h5v2h-5zM737 144h5v2h-5zM742 143h5v2h-5zM747 142h5v2h-5zM752 141h5v2h-5zM757 140h5v2h-5zM762 139h4v2h-4zM766 138h5v2h-5zM771 137h5v2h-5zM776 136h6v2h-6zM782 135h6v2h-6zM788 134h6v2h-6zM794 133h7v2h-7zM801 132h6v2h-6zM807 131h6v2h-6zM813 130h6v2h-6zM819 129h6v2h-6zM825 128h6v2h-6zM831 127h6v2h-6zM837 126h6v2h-6zM843 125h6v2h-6zM849 124h6v2h-6zM855 123h7v2h-7zM862 122h7v2h-7zM869 121h7v2h-7zM876 120h7v2h-7zM883 119h7v2h-7zM890 118h6v2h-6zM896 117h7v2h-7zM903 116h7v2h-7zM5 302h9v1h-9zM14 303h10v1h-10zM24 304h39v1h-39zM63 303h14v1h-14zM77 302h16v1h-16zM93 301h11v1h-11zM104 300h11v1h-11zM115 299h11v1h-11zM126 298h10v1h-10zM136 297h11v1h-11zM147 296h9v1h-9zM156 295h9v1h-9zM165 294h7v1h-7zM172 293h8v1h-8zM180 292h7v1h-7zM187 291h7v1h-7zM194 290h6v1h-6zM200 289h7v1h-7zM207 288h6v1h-6zM213 287h6v1h-6zM219 286h6v1h-6zM225 285h7v1h-7zM232 284h6v1h-6zM238 283h7v1h-7zM245 282h7v1h-7zM252 281h8v1h-8zM260 280h7v1h-7zM267 279h8v1h-8zM275 278h7v1h-7zM282 277h7v1h-7zM289 276h8v1h-8zM297 275h7v1h-7zM304 274h8v1h-8zM312 273h7v1h-7zM319 272h6v1h-6zM325 271h7v1h-7zM332 270h7v1h-7zM339 269h7v1h-7zM346 268h7v1h-7zM353 267h7v1h-7zM360 266h7v1h-7zM367 265h6v1h-6zM373 264h7v1h-7zM380 263h7v1h-7zM387 262h7v1h-7zM394 261h6v1h-6zM400 260h7v1h-7zM407 259h6v1h-6zM413 258h7v1h-7zM420 257h6v1h-6zM426 256h6v1h-6zM432 255h7v1h-7zM439 254h6v1h-6zM445 253h7v1h-7zM452 252h6v1h-6zM458 251h7v1h-7zM465 250h6v1h-6zM471 249h7v1h-7zM478 248h7v1h-7zM485 247h6v1h-6zM491 246h7v1h-7zM498 245h7v1h-7zM505 244h6v1h-6zM511 243h7v1h-7zM518 242h7v1h-7zM525 241h6v1h-6zM531 240h7v1h-7zM538 239h7v1h-7zM545 238h6v1h-6zM551 237h5v1h-5zM556 236h6v1h-6zM562 235h5v1h-5zM567 234h6v1h-6zM573 233h5v1h-5zM578 232h5v1h-5zM583 231h6v1h-6zM589 230h5v1h-5zM594 229h6v1h-6zM600 228h5v1h-5zM605 227h5v1h-5zM610 226h5v1h-5zM615 225h5v1h-5zM620 224h5v1h-5zM625 223h6v1h-6zM631 222h6v1h-6zM637 221h7v1h-7zM644 220h6v1h-6zM650 219h6v1h-6zM656 218h6v1h-6zM662 217h6v1h-6zM668 216h7v1h-7zM675 215h6v1h-6zM681 214h6v1h-6zM687 213h6v1h-6zM693 212h6v1h-6zM699 211h6v1h-6zM705 210h5v1h-5zM710 209h5v1h-5zM715 208h5v1h-5zM720 207h5v1h-5zM725 206h5v1h-5zM730 205h6v1h-6zM736 204h5v1h-5zM741 203h5v1h-5zM746 202h5v1h-5zM751 201h5v1h-5zM756 200h5v1h-5zM761 199h4v1h-4zM765 198h5v1h-5zM770 197h4v1h-4zM774 196h6v1h-6zM780 195h7v1h-7zM787 194h6v1h-6zM793 193h6v1h-6zM799 192h6v1h-6zM805 191h6v1h-6zM811 190h6v1h-6zM817 189h6v1h-6zM823 188h6v1h-6zM829 187h6v1h-6zM835 186h6v1h-6zM841 185h6v1h-6zM847 184h7v1h-7zM854 183h6v1h-6zM860 182h7v1h-7zM867 181h7v1h-7zM874 180h7v1h-7zM881 179h7v1h-7zM888 178h7v1h-7zM895 177h7v1h-7zM902 176h6v1h-6zM908 175h2v1h-2zM5 360h17v2h-17zM22 361h13v2h-13zM35 362h20v2h-20zM55 361h11v2h-11zM66 360h24v2h-24zM90 359h11v2h-11zM101 358h11v2h-11zM112 357h11v2h-11zM123 356h11v2h-11zM134 355h11v2h-11zM145 354h9v2h-9zM154 353h10v2h-10zM164 352h7v2h-7zM171 351h7v2h-7zM178 350h7v2h-7zM185 349h7v2h-7zM192 348h7v2h-7zM199 347h6v2h-6zM205 346h6v2h-6zM211 345h7v2h-7zM218 344h6v2h-6zM224 343h6v2h-6zM230 342h6v2h-6zM236 341h7v2h-7zM243 340h8v2h-8zM251 339h7v2h-7zM258 338h7v2h-7zM265 337h8v2h-8zM273 336h7v2h-7zM280 335h8v2h-8zM288 334h7v2h-7zM295 333h7v2h-7zM302 332h8v2h-8zM310 331h7v2h-7zM317 330h7v2h-7zM324 329h7v2h-7zM331 328h6v2h-6zM337 327h7v2h-7zM344 326h7v2h-7zM351 325h7v2h-7zM358 324h7v2h-7zM365 323h7v2h-7zM372 322h7v2h-7zM379 321h6v2h-6zM385 320h7v2h-7zM392 319h7v2h-7zM399 318h6v2h-6zM405 317h7v2h-7zM412 316h6v2h-6zM418 315h6v2h-6zM424 314h7v2h-7zM431 313h6v2h-6zM437 312h7v2h-7zM444 311h6v2h-6zM450 310h7v2h-7zM457 309h6v2h-6zM463 308h7v2h-7zM470 307h6v2h-6zM476 306h7v2h-7zM483 305h7v2h-7zM490 304h6v2h-6zM496 303h7v2h-7zM503 302h7v2h-7zM510 301h6v2h-6zM516 300h7v2h-7zM523 299h7v2h-7zM530 298h6v2h-6zM536 297h7v2h-7zM543 296h7v2h-7zM550 295h5v2h-5zM555 294h5v2h-5zM560 293h6v2h-6zM566 292h5v2h-5zM571 291h6v2h-6zM577 290h5v2h-5zM582 289h6v2h-6zM588 288h5v2h-5zM593 287h5v2h-5zM598 286h6v2h-6zM604 285h5v2h-5zM609 284h5v2h-5zM614 283h5v2h-5zM619 282h5v2h-5zM624 281h6v2h-6zM630 280h6v2h-6zM636 279h6v2h-6zM642 278h6v2h-6zM648 277h7v2h-7zM655 276h6v2h-6zM661 275h6v2h-6zM667 274h6v2h-6zM673 273h6v2h-6zM679 272h7v2h-7zM686 271h6v2h-6zM692 270h6v2h-6zM698 269h6v2h-6zM704 268h5v2h-5zM709 267h5v2h-5zM714 266h5v2h-5zM719 265h5v2h-5zM724 264h5v2h-5zM729 263h5v2h-5zM734 262h5v2h-5zM739 261h5v2h-5zM744 260h5v2h-5zM749 259h5v2h-5zM754 258h5v2h-5zM759 257h5v2h-5zM764 256h5v2h-5zM769 255h4v2h-4zM773 254h6v2h-6zM779 253h6v2h-6zM785 252h6v2h-6zM791 251h7v2h-7zM798 250h6v2h-6zM804 249h6v2h-6zM810 248h6v2h-6zM816 247h6v2h-6zM822 246h6v2h-6zM828 245h6v2h-6zM834 244h6v2h-6zM840 243h6v2h-6zM846 242h6v2h-6zM852 241h7v2h-7zM859 240h7v2h-7zM866 239h6v2h-6zM872 238h7v2h-7zM879 237h7v2h-7zM886 236h7v2h-7zM893 235h7v2h-7zM900 234h7v2h-7zM907 233h3v2h-3zM5 420h18v1h-18zM23 421h42v1h-42zM65 420h22v1h-22zM87 419h11v1h-11zM98 418h11v1h-11zM109 417h11v1h-11zM120 416h11v1h-11zM131 415h11v1h-11zM142 414h10v1h-10zM152 413h9v1h-9zM161 412h8v1h-8zM169 411h7v1h-7zM176 410h7v1h-7zM183 409h7v1h-7zM190 408h7v1h-7zM197 407h6v1h-6zM203 406h7v1h-7zM210 405h6v1h-6zM216 404h6v1h-6zM222 403h7v1h-7zM229 402h6v1h-6zM235 401h6v1h-6zM241 400h8v1h-8zM249 399h7v1h-7zM256 398h8v1h-8zM264 397h7v1h-7zM271 396h7v1h-7zM278 395h8v1h-8zM286 394h7v1h-7zM293 393h8v1h-8zM301 392h7v1h-7zM308 391h7v1h-7zM315 390h7v1h-7zM322 389h7v1h-7zM329 388h7v1h-7zM336 387h7v1h-7zM343 386h6v1h-6zM349 385h7v1h-7zM356 384h7v1h-7zM363 383h7v1h-7zM370 382h7v1h-7zM377 381h7v1h-7zM384 380h6v1h-6zM390 379h7v1h-7zM397 378h6v1h-6zM403 377h7v1h-7zM410 376h6v1h-6zM416 375h7v1h-7zM423 374h6v1h-6zM429 373h7v1h-7zM436 372h6v1h-6zM442 371h7v1h-7zM449 370h6v1h-6zM455 369h7v1h-7zM462 368h6v1h-6zM468 367h7v1h-7zM475 366h6v1h-6zM481 365h7v1h-7zM488 364h7v1h-7zM495 363h6v1h-6zM501 362h7v1h-7zM508 361h7v1h-7zM515 360h6v1h-6zM521 359h7v1h-7zM528 358h7v1h-7zM535 357h6v1h-6zM541 356h7v1h-7zM548 355h6v1h-6zM554 354h5v1h-5zM559 353h5v1h-5zM564 352h6v1h-6zM570 351h5v1h-5zM575 350h6v1h-6zM581 349h5v1h-5zM586 348h6v1h-6zM592 347h5v1h-5zM597 346h5v1h-5zM602 345h5v1h-5zM607 344h5v1h-5zM612 343h5v1h-5zM617 342h5v1h-5zM622 341h6v1h-6zM628 340h6v1h-6zM634 339h7v1h-7zM641 338h6v1h-6zM647 337h6v1h-6zM653 336h6v1h-6zM659 335h6v1h-6zM665 334h7v1h-7zM672 333h6v1h-6zM678 332h6v1h-6zM684 331h6v1h-6zM690 330h6v1h-6zM696 329h7v1h-7zM703 328h5v1h-5zM708 327h5v1h-5zM713 326h5v1h-5zM718 325h5v1h-5zM723 324h5v1h-5zM728 323h5v1h-5zM733 322h5v1h-5zM738 321h5v1h-5zM743 320h5v1h-5zM748 319h5v1h-5zM753 318h5v1h-5zM758 317h5v1h-5zM763 316h5v1h-5zM768 315h4v1h-4zM772 314h5v1h-5zM777 313h6v1h-6zM783 312h7v1h-7zM790 311h6v1h-6zM796 310h6v1h-6zM802 309h6v1h-6zM808 308h6v1h-6zM814 307h6v1h-6zM820 306h6v1h-6zM826 305h6v1h-6zM832 304h6v1h-6zM838 303h6v1h-6zM844 302h6v1h-6zM850 301h7v1h-7zM857 300h7v1h-7zM864 299h7v1h-7zM871 298h7v1h-7zM878 297h6v1h-6zM884 296h7v1h-7zM891 295h7v1h-7zM898 294h7v1h-7zM905 293h5v1h-5zM5 478h18v2h-18zM23 479h41v2h-41zM64 478h20v2h-20zM84 477h12v2h-12zM96 476h11v2h-11zM107 475h11v2h-11zM118 474h10v2h-10zM128 473h11v2h-11zM139 472h10v2h-10zM149 471h10v2h-10zM159 470h8v2h-8zM167 469h7v2h-7zM174 468h7v2h-7zM181 467h7v2h-7zM188 466h8v2h-8zM196 465h6v2h-6zM202 464h6v2h-6zM208 463h6v2h-6zM214 462h7v2h-7zM221 461h6v2h-6zM227 460h6v2h-6zM233 459h7v2h-7zM240 458h7v2h-7zM247 457h7v2h-7zM254 456h8v2h-8zM262 455h7v2h-7zM269 454h8v2h-8zM277 453h7v2h-7zM284 452h7v2h-7zM291 451h8v2h-8zM299 450h7v2h-7zM306 449h8v2h-8zM314 448h6v2h-6zM320 447h7v2h-7zM327 446h7v2h-7zM334 445h7v2h-7zM341 444h7v2h-7zM348 443h7v2h-7zM355 442h6v2h-6zM361 441h7v2h-7zM368 440h7v2h-7zM375 439h7v2h-7zM382 438h7v2h-7zM389 437h6v2h-6zM395 436h7v2h-7zM402 435h6v2h-6zM408 434h7v2h-7zM415 433h6v2h-6zM421 432h7v2h-7zM428 431h6v2h-6zM434 430h7v2h-7zM441 429h6v2h-6zM447 428h6v2h-6zM453 427h7v2h-7zM460 426h6v2h-6zM466 425h7v2h-7zM473 424h7v2h-7zM480 423h6v2h-6zM486 422h7v2h-7zM493 421h7v2h-7zM500 420h6v2h-6zM506 419h7v2h-7zM513 418h7v2h-7zM520 417h6v2h-6zM526 416h7v2h-7zM533 415h7v2h-7zM540 414h6v2h-6zM546 413h6v2h-6zM552 412h6v2h-6zM558 411h5v2h-5zM563 410h6v2h-6zM569 409h5v2h-5zM574 408h5v2h-5zM579 407h6v2h-6zM585 406h5v2h-5zM590 405h6v2h-6zM596 404h5v2h-5zM601 403h5v2h-5zM606 402h5v2h-5zM611 401h5v2h-5zM616 400h5v2h-5zM621 399h6v2h-6zM627 398h6v2h-6zM633 397h6v2h-6zM639 396h6v2h-6zM645 395h6v2h-6zM651 394h7v2h-7zM658 393h6v2h-6zM664 392h6v2h-6zM670 391h6v2h-6zM676 390h6v2h-6zM682 389h7v2h-7zM689 388h6v2h-6zM695 387h6v2h-6zM701 386h6v2h-6zM707 385h5v2h-5zM712 384h5v2h-5zM717 383h5v2h-5zM722 382h5v2h-5zM727 381h5v2h-5zM732 380h5v2h-5zM737 379h5v2h-5zM742 378h5v2h-5zM747 377h5v2h-5zM752 376h5v2h-5zM757 375h5v2h-5zM762 374h4v2h-4zM766 373h5v2h-5zM771 372h5v2h-5zM776 371h6v2h-6zM782 370h6v2h-6zM788 369h6v2h-6zM794 368h7v2h-7zM801 367h6v2h-6zM807 366h6v2h-6zM813 365h6v2h-6zM819 364h6v2h-6zM825 363h6v2h-6zM831 362h6v2h-6zM837 361h6v2h-6zM843 360h6v2h-6zM849 359h6v2h-6zM855 358h7v2h-7zM862 357h7v2h-7zM869 356h7v2h-7zM876 355h7v2h-7zM883 354h7v2h-7zM890 353h6v2h-6zM896 352h7v2h-7zM903 351h7v2h-7zM5 537h9v1h-9zM14 538h10v1h-10zM24 539h39v1h-39zM63 538h14v1h-14zM77 537h16v1h-16zM93 536h11v1h-11zM104 535h11v1h-11zM115 534h11v1h-11zM126 533h10v1h-10zM136 532h11v1h-11zM147 531h9v1h-9zM156 530h9v1h-9zM165 529h7v1h-7zM172 528h8v1h-8zM180 527h7v1h-7zM187 526h7v1h-7zM194 525h6v1h-6zM200 524h7v1h-7zM207 523h6v1h-6zM213 522h6v1h-6zM219 521h6v1h-6zM225 520h7v1h-7zM232 519h6v1h-6zM238 518h7v1h-7zM245 517h7v1h-7zM252 516h8v1h-8zM260 515h7v1h-7zM267 514h8v1h-8zM275 513h7v1h-7zM282 512h7v1h-7zM289 511h8v1h-8zM297 510h7v1h-7zM304 509h8v1h-8zM312 508h7v1h-7zM319 507h6v1h-6zM325 506h7v1h-7zM332 505h7v1h-7zM339 504h7v1h-7zM346 503h7v1h-7zM353 502h7v1h-7zM360 501h7v1h-7zM367 500h6v1h-6zM373 499h7v1h-7zM380 498h7v1h-7zM387 497h7v1h-7zM394 496h6v1h-6zM400 495h7v1h-7zM407 494h6v1h-6zM413 493h7v1h-7zM420 492h6v1h-6zM426 491h6v1h-6zM432 490h7v1h-7zM439 489h6v1h-6zM445 488h7v1h-7zM452 487h6v1h-6zM458 486h7v1h-7zM465 485h6v1h-6zM471 484h7v1h-7zM478 483h7v1h-7zM485 482h6v1h-6zM491 481h7v1h-7zM498 480h7v1h-7zM505 479h6v1h-6zM511 478h7v1h-7zM518 477h7v1h-7zM525 476h6v1h-6zM531 475h7v1h-7zM538 474h7v1h-7zM545 473h6v1h-6zM551 472h5v1h-5zM556 471h6v1h-6zM562 470h5v1h-5zM567 469h6v1h-6zM573 468h5v1h-5zM578 467h5v1h-5zM583 466h6v1h-6zM589 465h5v1h-5zM594 464h6v1h-6zM600 463h5v1h-5zM605 462h5v1h-5zM610 461h5v1h-5zM615 460h5v1h-5zM620 459h5v1h-5zM625 458h6v1h-6zM631 457h6v1h-6zM637 456h7v1h-7zM644 455h6v1h-6zM650 454h6v1h-6zM656 453h6v1h-6zM662 452h6v1h-6zM668 451h7v1h-7zM675 450h6v1h-6zM681 449h6v1h-6zM687 448h6v1h-6zM693 447h6v1h-6zM699 446h6v1h-6zM705 445h5v1h-5zM710 444h5v1h-5zM715 443h5v1h-5zM720 442h5v1h-5zM725 441h5v1h-5zM730 440h6v1h-6zM736 439h5v1h-5zM741 438h5v1h-5zM746 437h5v1h-5zM751 436h5v1h-5zM756 435h5v1h-5zM761 434h4v1h-4zM765 433h5v1h-5zM770 432h4v1h-4zM774 431h6v1h-6zM780 430h7v1h-7zM787 429h6v1h-6zM793 428h6v1h-6zM799 427h6v1h-6zM805 426h6v1h-6zM811 425h6v1h-6zM817 424h6v1h-6zM823 423h6v1h-6zM829 422h6v1h-6zM835 421h6v1h-6zM841 420h6v1h-6zM847 419h7v1h-7zM854 418h6v1h-6zM860 417h7v1h-7zM867 416h7v1h-7zM874 415h7v1h-7zM881 414h7v1h-7zM888 413h7v1h-7zM895 412h7v1h-7zM902 411h6v1h-6zM908 410h2v1h-2zM5 595h17v2h-17zM22 596h13v2h-13zM55 596h11v2h-11zM66 595h24v2h-24zM90 594h11v2h-11zM101 593h11v2h-11zM112 592h11v2h-11zM123 591h11v2h-11zM134 590h11v2h-11zM145 589h9v2h-9zM154 588h10v2h-10zM164 587h7v2h-7zM171 586h7v2h-7zM178 585h7v2h-7zM185 584h7v2h-7zM192 583h7v2h-7zM199 582h6v2h-6zM205 581h6v2h-6zM211 580h7v2h-7zM218 579h6v2h-6zM224 578h6v2h-6zM230 577h6v2h-6zM236 576h7v2h-7zM243 575h8v2h-8zM251 574h7v2h-7zM258 573h7v2h-7zM265 572h8v2h-8zM273 571h7v2h-7zM280 570h8v2h-8zM288 569h7v2h-7zM295 568h7v2h-7zM302 567h8v2h-8zM310 566h7v2h-7zM317 565h7v2h-7zM324 564h7v2h-7zM331 563h6v2h-6zM337 562h7v2h-7zM344 561h7v2h-7zM351 560h7v2h-7zM358 559h7v2h-7zM365 558h7v2h-7zM372 557h7v2h-7zM379 556h6v2h-6zM385 555h7v2h-7zM392 554h7v2h-7zM399 553h6v2h-6zM405 552h7v2h-7zM412 551h6v2h-6zM418 550h6v2h-6zM424 549h7v2h-7zM431 548h6v2h-6zM437 547h7v2h-7zM444 546h6v2h-6zM450 545h7v2h-7zM457 544h6v2h-6zM463 543h7v2h-7zM470 542h6v2h-6zM476 541h7v2h-7zM483 540h7v2h-7zM490 539h6v2h-6zM496 538h7v2h-7zM503 537h7v2h-7zM510 536h6v2h-6zM516 535h7v2h-7zM523 534h7v2h-7zM530 533h6v2h-6zM536 532h7v2h-7zM543 531h7v2h-7zM550 530h5v2h-5zM555 529h5v2h-5zM560 528h6v2h-6zM566 527h5v2h-5zM571 526h6v2h-6zM577 525h5v2h-5zM582 524h6v2h-6zM588 523h5v2h-5zM593 522h5v2h-5zM598 521h6v2h-6zM604 520h5v2h-5zM609 519h5v2h-5zM614 518h5v2h-5zM619 517h5v2h-5zM624 516h6v2h-6zM630 515h6v2h-6zM636 514h6v2h-6zM642 513h6v2h-6zM648 512h7v2h-7zM655 511h6v2h-6zM661 510h6v2h-6zM667 509h6v2h-6zM673 508h6v2h-6zM679 507h7v2h-7zM686 506h6v2h-6zM692 505h6v2h-6zM698 504h6v2h-6zM704 503h5v2h-5zM709 502h5v2h-5zM714 501h5v2h-5zM719 500h5v2h-5zM724 499h5v2h-5zM729 498h5v2h-5zM734 497h5v2h-5zM739 496h5v2h-5zM744 495h5v2h-5zM749 494h5v2h-5zM754 493h5v2h-5zM759 492h5v2h-5zM764 491h5v2h-5zM769 490h4v2h-4zM773 489h6v2h-6zM779 488h6v2h-6zM785 487h6v2h-6zM791 486h7v2h-7zM798 485h6v2h-6zM804 484h6v2h-6zM810 483h6v2h-6zM816 482h6v2h-6zM822 481h6v2h-6zM828 480h6v2h-6zM834 479h6v2h-6zM840 478h6v2h-6zM846 477h6v2h-6zM852 476h7v2h-7zM859 475h7v2h-7zM866 474h6v2h-6zM872 473h7v2h-7zM879 472h7v2h-7zM886 471h7v2h-7zM893 470h7v2h-7zM900 469h7v2h-7zM907 468h3v2h-3zM501 597h7v1h-7zM508 596h7v1h-7zM515 595h6v1h-6zM521 594h7v1h-7zM528 593h7v1h-7zM535 592h6v1h-6zM541 591h7v1h-7zM548 590h6v1h-6zM554 589h5v1h-5zM559 588h5v1h-5zM564 587h6v1h-6zM570 586h5v1h-5zM575 585h6v1h-6zM581 584h5v1h-5zM586 583h6v1h-6zM592 582h5v1h-5zM597 581h5v1h-5zM602 580h5v1h-5zM607 579h5v1h-5zM612 578h5v1h-5zM617 577h5v1h-5zM622 576h6v1h-6zM628 575h6v1h-6zM634 574h7v1h-7zM641 573h6v1h-6zM647 572h6v1h-6zM653 571h6v1h-6zM659 570h6v1h-6zM665 569h7v1h-7zM672 568h6v1h-6zM678 567h6v1h-6zM684 566h6v1h-6zM690 565h6v1h-6zM696 564h7v1h-7zM703 563h5v1h-5zM708 562h5v1h-5zM713 561h5v1h-5zM718 560h5v1h-5zM723 559h5v1h-5zM728 558h5v1h-5zM733 557h5v1h-5zM738 556h5v1h-5zM743 555h5v1h-5zM748 554h5v1h-5zM753 553h5v1h-5zM758 552h5v1h-5zM763 551h5v1h-5zM768 550h4v1h-4zM772 549h5v1h-5zM777 548h6v1h-6zM783 547h7v1h-7zM790 546h6v1h-6zM796 545h6v1h-6zM802 544h6v1h-6zM808 543h6v1h-6zM814 542h6v1h-6zM820 541h6v1h-6zM826 540h6v1h-6zM832 539h6v1h-6zM838 538h6v1h-6zM844 537h6v1h-6zM850 536h7v1h-7zM857 535h7v1h-7zM864 534h7v1h-7zM871 533h7v1h-7zM878 532h6v1h-6zM884 531h7v1h-7zM891 530h7v1h-7zM898 529h7v1h-7zM905 528h5v1h-5zM837 596h6v2h-6zM843 595h6v2h-6zM849 594h6v2h-6zM855 593h7v2h-7zM862 592h7v2h-7zM869 591h7v2h-7zM876 590h7v2h-7zM883 589h7v2h-7zM890 588h6v2h-6zM896 587h7v2h-7zM903 586h7v2h-7z" fill="#FF0000"/><path d="M912 9.5h4M912 74.5h4M912 139.5h4M912 205.5h4M912 270.5h4M912 335.5h4M912 400.5h4M912 466.5h4M912 531.5h4M912 596.5h4" stroke="#888888" fill="none"/><rect x="912" y="45" width="54" height="13" fill="#C8DED8"/></svg>
<div style="position:absolute;left:979px;top:701px;width:15px;height:13px;background:#C0C0C0;box-sizing:border-box;border:1px solid #E0E0E0"></div>
<div style="position:absolute;left:29px;top:716px;width:966px;height:22px;background:#89C0B5;box-sizing:border-box;border-left:1px solid #000;border-right:1px solid #000;border-bottom:1px solid #000"></div>
<div style="position:absolute;left:30px;top:716px;width:964px;height:1px;background:#A4D6CE"></div>
<div style="position:absolute;left:30px;top:716px;width:1px;height:21px;background:#A4D6CE"></div>
<div style="position:absolute;left:34px;top:719px;width:157px;height:16px;box-sizing:border-box;border-top:1px solid #4E8E86;border-left:1px solid #4E8E86;border-bottom:1px solid #D6EAE6;border-right:1px solid #D6EAE6"></div>
<div style="position:absolute;left:35px;top:720px;width:155px;height:1px;background:#000"></div>
<div style="position:absolute;left:35px;top:720px;width:1px;height:14px;background:#000"></div>
<div style="position:absolute;left:756px;top:719px;width:239px;height:16px;box-sizing:border-box;border-top:1px solid #4E8E86;border-left:1px solid #4E8E86;border-bottom:1px solid #D6EAE6;border-right:1px solid #D6EAE6"></div>
<div style="position:absolute;left:757px;top:720px;width:237px;height:1px;background:#000"></div>
<div style="position:absolute;left:757px;top:720px;width:1px;height:14px;background:#000"></div>
<div style="position:absolute;left:0px;top:738px;width:1024px;height:30px;background:#89C0B5"></div>
<div style="position:absolute;left:0px;top:739px;width:1024px;height:1px;background:#D6EAE6"></div>
<div style="position:absolute;left:2px;top:742px;width:51px;height:22px;box-sizing:border-box;border-top:1px solid #D6EAE6;border-left:1px solid #D6EAE6;border-right:1px solid #000;border-bottom:1px solid #000;box-shadow:inset -1px -1px 0 #4E8E86;background:#89C0B5"></div>
<svg style="position:absolute;left:4px;top:745px" width="16" height="15" viewBox="0 0 16 15" shape-rendering="crispEdges" ><g shape-rendering="auto"><path d="M2 2 Q5 0 8 1.5 L7 7 Q4 5.5 1 7 Z" fill="#f05a10"/><path d="M8.5 1.5 Q11.5 3 15 1.5 L14 7 Q11 8.5 7.5 7 Z" fill="#50c010"/><path d="M1 7.5 Q4 6 7 7.5 L6 13 Q3 11.5 0 13 Z" fill="#2a70f0"/><path d="M7.5 7.5 Q10.5 9 14 7.5 L13 13 Q10 14.5 6.5 13 Z" fill="#f8c010"/></g></svg>
<div style="position:absolute;left:59px;top:743px;width:3px;height:21px;box-sizing:border-box;border-left:1px solid #D6EAE6;border-top:1px solid #D6EAE6;border-right:1px solid #4E8E86;border-bottom:1px solid #4E8E86;"></div>
<svg style="position:absolute;left:68px;top:745px" width="17" height="16" viewBox="0 0 17 16" shape-rendering="crispEdges" ><g shape-rendering="auto"><path d="M1 4 Q1 1 4 1 H13 Q16 1 16 4 V13 Q16 16 13 16 H4 Q1 16 1 13 Z" fill="#2a78d8"/><path d="M3 5 Q3 3 5 3 H12 V14 H5 Q3 14 3 12 Z" fill="#f4ecd0"/><path d="M5 10 L12 4" stroke="#203060" stroke-width="1.5"/><circle cx="14" cy="6" r="1.5" fill="#e04020"/></g></svg>
<svg style="position:absolute;left:92px;top:745px" width="15" height="16" viewBox="0 0 15 16" shape-rendering="crispEdges" ><g shape-rendering="auto"><rect x="1" y="5" width="11" height="9" fill="#f0f0f8" stroke="#5070c0"/><path d="M4 3 Q9 -1 14 4 L11 6" stroke="#3070e0" stroke-width="2.5" fill="none"/><path d="M12 11 Q8 16 2 12 L5 10" stroke="#3070e0" stroke-width="2.5" fill="none"/><rect x="10" y="7" width="3" height="3" fill="#e05030"/></g></svg>
<svg style="position:absolute;left:115px;top:746px" width="16" height="14" viewBox="0 0 16 14" shape-rendering="crispEdges" ><g shape-rendering="auto"><path d="M0 2 H6 L8 4 H14 V14 H0 Z" fill="#e8c060" stroke="#b08020" stroke-width="0.8"/><circle cx="7" cy="8" r="4" fill="#c8e8f8" stroke="#a07020"/><path d="M10 11 L14 14" stroke="#a07020" stroke-width="2"/></g></svg>
<svg style="position:absolute;left:138px;top:745px" width="17" height="16" viewBox="0 0 17 16" shape-rendering="crispEdges" ><g shape-rendering="auto"><polygon points="8,0 16,7 9,16 1,9" fill="#000"/><polygon points="8,2 14,7 9,14 3,9" fill="#ff00a0"/><polygon points="8,2 14,7 8.5,8" fill="#00d0ff"/><polygon points="3,9 8,2 8.5,8" fill="#00b000"/><polygon points="3,9 9,14 8.5,8" fill="#4020ff"/><polygon points="14,7 9,14 8.5,8" fill="#ff2020"/><polygon points="11,4 14,7 8.5,8" fill="#ffe000"/></g></svg>
<svg style="position:absolute;left:160px;top:745px" width="18" height="16" viewBox="0 0 18 16" shape-rendering="crispEdges" ><path d="M8 0 H10 V3 H12 V4 H10 V6 L17 3 V6 L10 11 V15 H8 V11 L1 6 V3 L8 6 Z" fill="#0000f0"/></svg>
<svg style="position:absolute;left:184px;top:745px" width="17" height="16" viewBox="0 0 17 16" shape-rendering="crispEdges" ><g shape-rendering="auto"><polygon points="8,1 16,8 8,15 1,8" fill="#e8e8e8" stroke="#404040"/><path d="M11 3 L5 9 H9 L5 14 L13 7 H9 Z" fill="#f0a020" stroke="#b06000" stroke-width="0.5"/></g></svg>
<svg style="position:absolute;left:207px;top:745px" width="17" height="16" viewBox="0 0 17 16" shape-rendering="crispEdges" ><g shape-rendering="auto"><circle cx="8.5" cy="8" r="7" fill="none" stroke="#20c040" stroke-width="2.5"/><circle cx="8.5" cy="8" r="4.5" fill="#a0a8f0"/><path d="M6 6 Q8 4 11 6 M6 10 Q9 12 11 10" stroke="#2030a0" stroke-width="1.3" fill="none"/><path d="M1 8 L0 11 L3 10 M16 8 L17 5 L14 6" stroke="#103010" fill="none"/></g></svg>
<svg style="position:absolute;left:230px;top:744px" width="17" height="17" viewBox="0 0 17 17" shape-rendering="crispEdges" ><text x="0" y="8" font-family="Liberation Serif" font-weight="bold" font-size="9" fill="#ff0000">MS</text><g shape-rendering="auto"><ellipse cx="9" cy="10" rx="6" ry="3.5" fill="#101010"/><path d="M2 8 L0 14 M5 11 L3 16 M9 12 L9 16 M13 11 L14 15 M15 9 L17 12" stroke="#000"/><circle cx="4" cy="9" r="1" fill="#40a0c0"/></g></svg>
<svg style="position:absolute;left:254px;top:744px" width="15" height="17" viewBox="0 0 15 17" shape-rendering="crispEdges" ><g shape-rendering="auto"><rect x="3" y="1" width="9" height="11" rx="3" fill="#f0f0e8" stroke="#202020"/><rect x="5" y="3" width="5" height="7" fill="#e0d040"/><text x="5" y="9" font-family="Liberation Sans" font-weight="bold" font-size="6" fill="#000">B</text><path d="M0 14 H15 M1 16 H14" stroke="#102050" stroke-width="1.5"/></g></svg>
<svg style="position:absolute;left:299px;top:745px" width="16" height="16" viewBox="0 0 16 16" shape-rendering="crispEdges" ><g shape-rendering="auto"><rect x="1" y="1" width="9" height="13" fill="#e8f0f8" stroke="#a0b0c0"/><rect x="2" y="9" width="3" height="4" fill="#20a040"/><rect x="2" y="6" width="3" height="3" fill="#e04020"/><circle cx="10" cy="10" r="5.5" fill="#d8d0f0" stroke="#9090b0"/><circle cx="10" cy="10" r="1.2" fill="#fff"/></g></svg>
<svg style="position:absolute;left:322px;top:745px" width="14" height="16" viewBox="0 0 14 16" shape-rendering="crispEdges" ><g shape-rendering="auto"><path d="M1 2 H10 L13 15 H4 Z" fill="#60a8e8" stroke="#3070b0" stroke-width="0.8"/><path d="M2 2 H9" stroke="#e0a040" stroke-width="1.5" stroke-dasharray="1 1"/><path d="M3 6 L10 13" stroke="#b0d8f8" stroke-width="2"/></g></svg>
<svg style="position:absolute;left:345px;top:746px" width="17" height="16" viewBox="0 0 17 16" shape-rendering="crispEdges" ><rect x="0" y="0" width="17" height="16" fill="#000"/><g shape-rendering="auto"><ellipse cx="8.5" cy="8" rx="6" ry="4.5" fill="#7090c8"/><ellipse cx="8" cy="7" rx="3.5" ry="2" fill="#c8d8f0"/><path d="M0 14 L6 9 L9 10 L16 3" stroke="#2030f0" fill="none"/></g></svg>
<svg style="position:absolute;left:369px;top:745px" width="16" height="16" viewBox="0 0 16 16" shape-rendering="crispEdges" ><g shape-rendering="auto"><circle cx="8" cy="9" r="6" fill="#1c8ee0"/><circle cx="8" cy="9" r="3" fill="#fff"/><rect x="5" y="9" width="9" height="1.5" fill="#1c8ee0"/><rect x="8" y="10.5" width="6" height="2" fill="#fff"/><path d="M1 13 Q-1 17 4 14 Q12 9 15 3 Q16 0 12 2" stroke="#f0b020" stroke-width="1.5" fill="none"/></g></svg>
<svg style="position:absolute;left:391px;top:745px" width="14" height="16" viewBox="0 0 14 16" shape-rendering="crispEdges" ><g shape-rendering="auto"><path d="M1 4 H13 L11 15 H3 Z" fill="#e8f0f8" stroke="#a0b0c8" stroke-width="0.8"/><path d="M3 3 Q7 0 11 3" stroke="#f0e0a0" stroke-width="2" fill="none"/><path d="M5 12 L9 7 M6 8 H9 V10" stroke="#10a020" stroke-width="1.8" fill="none"/></g></svg>
<svg style="position:absolute;left:414px;top:745px" width="16" height="16" viewBox="0 0 16 16" shape-rendering="crispEdges" ><g shape-rendering="auto"><circle cx="8" cy="8" r="7.5" fill="#e87010"/><circle cx="9" cy="7" r="5" fill="#1850a8"/><path d="M1 6 Q3 15 11 14 Q5 12 5 7 Q3 4 4 1" fill="#f09020"/></g></svg>
<svg style="position:absolute;left:437px;top:745px" width="16" height="16" viewBox="0 0 16 16" shape-rendering="crispEdges" ><g shape-rendering="auto"><circle cx="8" cy="8" r="7.5" fill="#20a040"/><path d="M8 0.5 A7.5 7.5 0 0 0 0.5 8 A7.5 7.5 0 0 0 8 15.5 Z" fill="#2050d0"/><path d="M15.5 8 A7.5 7.5 0 0 1 8 15.5 V8 Z" fill="#f0a020"/><circle cx="8" cy="8" r="5.3" fill="#f0f4ff"/><path d="M6 5 L11 8 L6 11 Z" fill="#102080"/></g></svg>
<svg style="position:absolute;left:276px;top:745px" width="16" height="16" viewBox="0 0 16 16" shape-rendering="crispEdges" ><rect x="0" y="0" width="15" height="1" fill="#d8d8d8"/><rect x="15" y="0" width="1" height="1" fill="#000000"/><rect x="0" y="1" width="1" height="1" fill="#d8d8d8"/><rect x="1" y="1" width="14" height="1" fill="#ffffff"/><rect x="15" y="1" width="1" height="1" fill="#000000"/><rect x="0" y="2" width="1" height="1" fill="#d8d8d8"/><rect x="1" y="2" width="14" height="1" fill="#ffffff"/><rect x="15" y="2" width="1" height="1" fill="#000000"/><rect x="0" y="3" width="1" height="1" fill="#d8d8d8"/><rect x="1" y="3" width="2" height="1" fill="#ffffff"/><rect x="3" y="3" width="11" height="1" fill="#000000"/><rect x="14" y="3" width="1" height="1" fill="#ffffff"/><rect x="15" y="3" width="1" height="1" fill="#000000"/><rect x="0" y="4" width="1" height="1" fill="#d8d8d8"/><rect x="1" y="4" width="2" height="1" fill="#ffffff"/><rect x="3" y="4" width="11" height="1" fill="#000000"/><rect x="14" y="4" width="1" height="1" fill="#ffffff"/><rect x="15" y="4" width="1" height="1" fill="#000000"/><rect x="0" y="5" width="1" height="1" fill="#d8d8d8"/><rect x="1" y="5" width="2" height="1" fill="#ffffff"/><rect x="3" y="5" width="2" height="1" fill="#000000"/><rect x="5" y="5" width="5" height="1" fill="#ffffff"/><rect x="10" y="5" width="2" height="1" fill="#000000"/><rect x="12" y="5" width="3" height="1" fill="#ffffff"/><rect x="15" y="5" width="1" height="1" fill="#000000"/><rect x="0" y="6" width="1" height="1" fill="#d8d8d8"/><rect x="1" y="6" width="2" height="1" fill="#ffffff"/><rect x="3" y="6" width="4" height="1" fill="#000000"/><rect x="7" y="6" width="3" height="1" fill="#ffffff"/><rect x="10" y="6" width="2" height="1" fill="#000000"/><rect x="12" y="6" width="3" height="1" fill="#ffffff"/><rect x="15" y="6" width="1" height="1" fill="#000000"/><rect x="0" y="7" width="1" height="1" fill="#d8d8d8"/><rect x="1" y="7" width="2" height="1" fill="#ffffff"/><rect x="3" y="7" width="4" height="1" fill="#000000"/><rect x="7" y="7" width="3" height="1" fill="#ffffff"/><rect x="10" y="7" width="2" height="1" fill="#000000"/><rect x="12" y="7" width="3" height="1" fill="#ffffff"/><rect x="15" y="7" width="1" height="1" fill="#000000"/><rect x="0" y="8" width="1" height="1" fill="#d8d8d8"/><rect x="1" y="8" width="2" height="1" fill="#ffffff"/><rect x="3" y="8" width="2" height="1" fill="#000000"/><rect x="5" y="8" width="3" height="1" fill="#ffffff"/><rect x="8" y="8" width="1" height="1" fill="#0000ff"/><rect x="9" y="8" width="1" height="1" fill="#ffffff"/><rect x="10" y="8" width="2" height="1" fill="#000000"/><rect x="12" y="8" width="3" height="1" fill="#ffffff"/><rect x="15" y="8" width="1" height="1" fill="#000000"/><rect x="0" y="9" width="1" height="1" fill="#d8d8d8"/><rect x="1" y="9" width="2" height="1" fill="#ffffff"/><rect x="3" y="9" width="2" height="1" fill="#000000"/><rect x="5" y="9" width="2" height="1" fill="#ffffff"/><rect x="7" y="9" width="2" height="1" fill="#0000ff"/><rect x="9" y="9" width="1" height="1" fill="#ffffff"/><rect x="10" y="9" width="2" height="1" fill="#000000"/><rect x="12" y="9" width="3" height="1" fill="#ffffff"/><rect x="15" y="9" width="1" height="1" fill="#000000"/><rect x="0" y="10" width="1" height="1" fill="#d8d8d8"/><rect x="1" y="10" width="2" height="1" fill="#ffffff"/><rect x="3" y="10" width="2" height="1" fill="#000000"/><rect x="5" y="10" width="1" height="1" fill="#ffffff"/><rect x="6" y="10" width="1" height="1" fill="#0000ff"/><rect x="7" y="10" width="1" height="1" fill="#ffffff"/><rect x="8" y="10" width="1" height="1" fill="#0000ff"/><rect x="9" y="10" width="6" height="1" fill="#ffffff"/><rect x="15" y="10" width="1" height="1" fill="#000000"/><rect x="0" y="11" width="1" height="1" fill="#d8d8d8"/><rect x="1" y="11" width="4" height="1" fill="#ffffff"/><rect x="5" y="11" width="5" height="1" fill="#0000ff"/><rect x="10" y="11" width="5" height="1" fill="#ffffff"/><rect x="15" y="11" width="1" height="1" fill="#000000"/><rect x="0" y="12" width="1" height="1" fill="#d8d8d8"/><rect x="1" y="12" width="7" height="1" fill="#ffffff"/><rect x="8" y="12" width="1" height="1" fill="#0000ff"/><rect x="9" y="12" width="6" height="1" fill="#ffffff"/><rect x="15" y="12" width="1" height="1" fill="#000000"/><rect x="0" y="13" width="1" height="1" fill="#d8d8d8"/><rect x="1" y="13" width="7" height="1" fill="#ffffff"/><rect x="8" y="13" width="1" height="1" fill="#0000ff"/><rect x="9" y="13" width="6" height="1" fill="#ffffff"/><rect x="15" y="13" width="1" height="1" fill="#000000"/><rect x="0" y="14" width="1" height="1" fill="#d8d8d8"/><rect x="1" y="14" width="14" height="1" fill="#ffffff"/><rect x="15" y="14" width="1" height="1" fill="#000000"/><rect x="0" y="15" width="16" height="1" fill="#000000"/></svg>
<div style="position:absolute;left:467px;top:743px;width:3px;height:21px;box-sizing:border-box;border-left:1px solid #D6EAE6;border-top:1px solid #D6EAE6;border-right:1px solid #4E8E86;border-bottom:1px solid #4E8E86;"></div>
<div style="position:absolute;left:474px;top:742px;width:159px;height:22px;box-sizing:border-box;border-top:1px solid #D6EAE6;border-left:1px solid #D6EAE6;border-right:1px solid #000;border-bottom:1px solid #000;box-shadow:inset -1px -1px 0 #4E8E86;background:#89C0B5"></div>
<svg style="position:absolute;left:478px;top:745px" width="16" height="16" viewBox="0 0 16 16" shape-rendering="crispEdges" ><g shape-rendering="auto"><circle cx="8" cy="8" r="7.5" fill="#e87010"/><circle cx="9" cy="7" r="5" fill="#1850a8"/><path d="M1 6 Q3 15 11 14 Q5 12 5 7 Q3 4 4 1" fill="#f09020"/></g></svg>
<div style="position:absolute;left:637px;top:742px;width:160px;height:22px;box-sizing:border-box;border-top:1px solid #000;border-left:1px solid #000;border-right:1px solid #D6EAE6;border-bottom:1px solid #D6EAE6;background-color:#b8d8d2;background-image:repeating-conic-gradient(#ffffff 0 25%, #89C0B5 0 50%);background-size:2px 2px"></div>
<svg style="position:absolute;left:642px;top:745px" width="16" height="16" viewBox="0 0 16 16" shape-rendering="crispEdges" ><rect x="0" y="0" width="15" height="1" fill="#d8d8d8"/><rect x="15" y="0" width="1" height="1" fill="#000000"/><rect x="0" y="1" width="1" height="1" fill="#d8d8d8"/><rect x="1" y="1" width="14" height="1" fill="#ffffff"/><rect x="15" y="1" width="1" height="1" fill="#000000"/><rect x="0" y="2" width="1" height="1" fill="#d8d8d8"/><rect x="1" y="2" width="14" height="1" fill="#ffffff"/><rect x="15" y="2" width="1" height="1" fill="#000000"/><rect x="0" y="3" width="1" height="1" fill="#d8d8d8"/><rect x="1" y="3" width="2" height="1" fill="#ffffff"/><rect x="3" y="3" width="11" height="1" fill="#000000"/><rect x="14" y="3" width="1" height="1" fill="#ffffff"/><rect x="15" y="3" width="1" height="1" fill="#000000"/><rect x="0" y="4" width="1" height="1" fill="#d8d8d8"/><rect x="1" y="4" width="2" height="1" fill="#ffffff"/><rect x="3" y="4" width="11" height="1" fill="#000000"/><rect x="14" y="4" width="1" height="1" fill="#ffffff"/><rect x="15" y="4" width="1" height="1" fill="#000000"/><rect x="0" y="5" width="1" height="1" fill="#d8d8d8"/><rect x="1" y="5" width="2" height="1" fill="#ffffff"/><rect x="3" y="5" width="2" height="1" fill="#000000"/><rect x="5" y="5" width="5" height="1" fill="#ffffff"/><rect x="10" y="5" width="2" height="1" fill="#000000"/><rect x="12" y="5" width="3" height="1" fill="#ffffff"/><rect x="15" y="5" width="1" height="1" fill="#000000"/><rect x="0" y="6" width="1" height="1" fill="#d8d8d8"/><rect x="1" y="6" width="2" height="1" fill="#ffffff"/><rect x="3" y="6" width="4" height="1" fill="#000000"/><rect x="7" y="6" width="3" height="1" fill="#ffffff"/><rect x="10" y="6" width="2" height="1" fill="#000000"/><rect x="12" y="6" width="3" height="1" fill="#ffffff"/><rect x="15" y="6" width="1" height="1" fill="#000000"/><rect x="0" y="7" width="1" height="1" fill="#d8d8d8"/><rect x="1" y="7" width="2" height="1" fill="#ffffff"/><rect x="3" y="7" width="4" height="1" fill="#000000"/><rect x="7" y="7" width="3" height="1" fill="#ffffff"/><rect x="10" y="7" width="2" height="1" fill="#000000"/><rect x="12" y="7" width="3" height="1" fill="#ffffff"/><rect x="15" y="7" width="1" height="1" fill="#000000"/><rect x="0" y="8" width="1" height="1" fill="#d8d8d8"/><rect x="1" y="8" width="2" height="1" fill="#ffffff"/><rect x="3" y="8" width="2" height="1" fill="#000000"/><rect x="5" y="8" width="3" height="1" fill="#ffffff"/><rect x="8" y="8" width="1" height="1" fill="#0000ff"/><rect x="9" y="8" width="1" height="1" fill="#ffffff"/><rect x="10" y="8" width="2" height="1" fill="#000000"/><rect x="12" y="8" width="3" height="1" fill="#ffffff"/><rect x="15" y="8" width="1" height="1" fill="#000000"/><rect x="0" y="9" width="1" height="1" fill="#d8d8d8"/><rect x="1" y="9" width="2" height="1" fill="#ffffff"/><rect x="3" y="9" width="2" height="1" fill="#000000"/><rect x="5" y="9" width="2" height="1" fill="#ffffff"/><rect x="7" y="9" width="2" height="1" fill="#0000ff"/><rect x="9" y="9" width="1" height="1" fill="#ffffff"/><rect x="10" y="9" width="2" height="1" fill="#000000"/><rect x="12" y="9" width="3" height="1" fill="#ffffff"/><rect x="15" y="9" width="1" height="1" fill="#000000"/><rect x="0" y="10" width="1" height="1" fill="#d8d8d8"/><rect x="1" y="10" width="2" height="1" fill="#ffffff"/><rect x="3" y="10" width="2" height="1" fill="#000000"/><rect x="5" y="10" width="1" height="1" fill="#ffffff"/><rect x="6" y="10" width="1" height="1" fill="#0000ff"/><rect x="7" y="10" width="1" height="1" fill="#ffffff"/><rect x="8" y="10" width="1" height="1" fill="#0000ff"/><rect x="9" y="10" width="6" height="1" fill="#ffffff"/><rect x="15" y="10" width="1" height="1" fill="#000000"/><rect x="0" y="11" width="1" height="1" fill="#d8d8d8"/><rect x="1" y="11" width="4" height="1" fill="#ffffff"/><rect x="5" y="11" width="5" height="1" fill="#0000ff"/><rect x="10" y="11" width="5" height="1" fill="#ffffff"/><rect x="15" y="11" width="1" height="1" fill="#000000"/><rect x="0" y="12" width="1" height="1" fill="#d8d8d8"/><rect x="1" y="12" width="7" height="1" fill="#ffffff"/><rect x="8" y="12" width="1" height="1" fill="#0000ff"/><rect x="9" y="12" width="6" height="1" fill="#ffffff"/><rect x="15" y="12" width="1" height="1" fill="#000000"/><rect x="0" y="13" width="1" height="1" fill="#d8d8d8"/><rect x="1" y="13" width="7" height="1" fill="#ffffff"/><rect x="8" y="13" width="1" height="1" fill="#0000ff"/><rect x="9" y="13" width="6" height="1" fill="#ffffff"/><rect x="15" y="13" width="1" height="1" fill="#000000"/><rect x="0" y="14" width="1" height="1" fill="#d8d8d8"/><rect x="1" y="14" width="14" height="1" fill="#ffffff"/><rect x="15" y="14" width="1" height="1" fill="#000000"/><rect x="0" y="15" width="16" height="1" fill="#000000"/></svg>
<div style="position:absolute;left:883px;top:744px;width:3px;height:20px;box-sizing:border-box;border-left:1px solid #D6EAE6;border-top:1px solid #D6EAE6;border-right:1px solid #4E8E86;border-bottom:1px solid #4E8E86;"></div>
<div style="position:absolute;left:894px;top:746px;width:13px;height:16px;background:#000080"></div>
<div style="position:absolute;left:910px;top:742px;width:111px;height:24px;box-sizing:border-box;border-top:1px solid #4E8E86;border-left:1px solid #4E8E86;border-bottom:1px solid #D6EAE6;border-right:1px solid #D6EAE6;"></div>
<svg style="position:absolute;left:915px;top:752px" width="7" height="5" viewBox="0 0 7 5" shape-rendering="crispEdges" ><rect x="2" y="0" width="1" height="1" fill="#000"/><rect x="5" y="0" width="1" height="1" fill="#000"/><rect x="1" y="1" width="2" height="1" fill="#000"/><rect x="4" y="1" width="2" height="1" fill="#000"/><rect x="0" y="2" width="2" height="1" fill="#000"/><rect x="3" y="2" width="2" height="1" fill="#000"/><rect x="1" y="3" width="2" height="1" fill="#000"/><rect x="4" y="3" width="2" height="1" fill="#000"/><rect x="2" y="4" width="1" height="1" fill="#000"/><rect x="5" y="4" width="1" height="1" fill="#000"/></svg>
<svg style="position:absolute;left:928px;top:745px" width="17" height="16" viewBox="0 0 17 16" shape-rendering="crispEdges" ><g shape-rendering="auto"><rect x="1" y="4" width="8" height="7" rx="1" fill="#80b0f0" stroke="#4060a0" stroke-width="0.8"/><ellipse cx="5" cy="13.5" rx="4" ry="1.8" fill="#c0c8e0" stroke="#6070a0" stroke-width="0.8"/><path d="M10 3 Q12 6 10 9 M12.5 1.5 Q15 6 12.5 10.5 M15 0.5 Q18 6 15 11.5" stroke="#20c020" stroke-width="1.3" fill="none"/></g></svg>
<svg style="position:absolute;left:946px;top:744px" width="16" height="18" viewBox="0 0 16 18" shape-rendering="crispEdges" ><g shape-rendering="auto"><path d="M8 0 V4 M1 7 H4 M12 7 H15 M2.5 1.5 L5 4 M13.5 1.5 L11 4" stroke="#ff2000" stroke-width="1.5"/><circle cx="8" cy="8" r="4.5" fill="#ffd800" stroke="#c08000" stroke-width="0.6"/><circle cx="6.5" cy="7.5" r="0.8" fill="#000"/><circle cx="9.5" cy="7.5" r="0.8" fill="#000"/><path d="M2 13 Q2 10 5 10.5 Q7 8.5 10 10 Q14 9.5 14 13 Q14 16 10 16 H5 Q2 16 2 13 Z" fill="#60b8f0" stroke="#3070b0" stroke-width="0.6"/></g></svg>
<svg style="position:absolute;left:965px;top:747px" width="15" height="13" viewBox="0 0 15 13" shape-rendering="crispEdges" ><rect x="14" y="0" width="1" height="1" fill="#000"/><rect x="1" y="1" width="13" height="1" fill="#808080"/><rect x="14" y="1" width="1" height="1" fill="#000"/><rect x="1" y="2" width="13" height="1" fill="#808080"/><rect x="14" y="2" width="1" height="1" fill="#000"/><rect x="1" y="3" width="13" height="1" fill="#808080"/><rect x="14" y="3" width="1" height="1" fill="#000"/><rect x="1" y="4" width="13" height="1" fill="#808080"/><rect x="14" y="4" width="1" height="1" fill="#000"/><rect x="1" y="5" width="13" height="1" fill="#808080"/><rect x="14" y="5" width="1" height="1" fill="#000"/><rect x="1" y="6" width="13" height="1" fill="#808080"/><rect x="14" y="6" width="1" height="1" fill="#000"/><rect x="1" y="7" width="13" height="1" fill="#808080"/><rect x="14" y="7" width="1" height="1" fill="#000"/><rect x="1" y="8" width="13" height="1" fill="#808080"/><rect x="14" y="8" width="1" height="1" fill="#000"/><rect x="0" y="9" width="15" height="1" fill="#000"/><rect x="3" y="10" width="1" height="1" fill="#000"/><rect x="10" y="10" width="1" height="1" fill="#000"/><rect x="0" y="11" width="6" height="1" fill="#000"/><rect x="8" y="11" width="6" height="1" fill="#000"/><rect x="0" y="12" width="6" height="1" fill="#000"/><rect x="8" y="12" width="6" height="1" fill="#000"/></svg>
<svg style="position:absolute;left:0;top:0;will-change:transform" width="1024" height="768" viewBox="0 0 1024 768"><text transform="translate(21.00,13) scale(1.0151,1)" font-family="Liberation Sans" font-size="12" font-weight="bold" fill="#fff">Fibonacci/Galactic</text><text transform="translate(133.00,13) scale(0.9796,1)" font-family="Liberation Sans" font-size="12" font-weight="bold" fill="#fff">Trader</text><text transform="translate(174.00,13) scale(1.0753,1)" font-family="Liberation Sans" font-size="12" font-weight="bold" fill="#fff">4.00</text><text transform="translate(203.00,13) scale(0.8857,1)" font-family="Liberation Sans" font-size="12" font-weight="bold" fill="#fff">lip</text><text transform="translate(220.00,13) scale(1.0746,1)" font-family="Liberation Sans" font-size="12" font-weight="bold" fill="#fff">07,</text><text transform="translate(245.70,13) scale(1.0500,1)" font-family="Liberation Sans" font-size="12" font-weight="bold" fill="#fff">4:15</text><text transform="translate(274.70,13) scale(0.9611,1)" font-family="Liberation Sans" font-size="12" font-weight="bold" fill="#fff">PM</text><text transform="translate(296.70,13) scale(1.0750,1)" font-family="Liberation Sans" font-size="12" font-weight="bold" fill="#fff">-</text><text transform="translate(304.60,13) scale(1.0400,1)" font-family="Liberation Sans" font-size="12" font-weight="bold" fill="#fff">[WIG20</text><text transform="translate(351.80,13) scale(1.0092,1)" font-family="Liberation Sans" font-size="12" font-weight="bold" fill="#fff">FUTURE</text><text transform="translate(406.30,13) scale(0.9961,1)" font-family="Liberation Sans" font-size="12" font-weight="bold" fill="#fff">D-</text><text transform="translate(421.90,13) scale(1.1400,1)" font-family="Liberation Sans" font-size="12" font-weight="bold" fill="#fff">W-</text><text transform="translate(443.00,13) scale(0.9300,1)" font-family="Liberation Sans" font-size="12" font-weight="bold" fill="#fff">M</text><text transform="translate(457.00,13) scale(0.9615,1)" font-family="Liberation Sans" font-size="12" font-weight="bold" fill="#fff">EOD</text><text transform="translate(490.80,13) scale(1.0598,1)" font-family="Liberation Sans" font-size="12" font-weight="bold" fill="#fff">3871.00</text><text transform="translate(557.00,13) scale(1.0500,1)" font-family="Liberation Sans" font-size="12" font-weight="bold" fill="#fff">30.00</text><text transform="translate(593.20,13) scale(1.1000,1)" font-family="Liberation Sans" font-size="12" font-weight="bold" fill="#fff">-</text><text transform="translate(601.00,13) scale(1.0366,1)" font-family="Liberation Sans" font-size="12" font-weight="bold" fill="#fff">2007-07-06]</text><text transform="translate(32.60,36) scale(0.8519,1)" font-family="Liberation Sans" font-size="12" font-weight="normal" fill="#000">File</text><rect x="32" y="37" width="7" height="1" fill="#000"/><text transform="translate(59.00,36) scale(0.8513,1)" font-family="Liberation Sans" font-size="12" font-weight="normal" fill="#000">Chart</text><rect x="58" y="37" width="8" height="1" fill="#000"/><text transform="translate(93.00,36) scale(0.9286,1)" font-family="Liberation Sans" font-size="12" font-weight="normal" fill="#000">Page</text><rect x="93" y="37" width="7" height="1" fill="#000"/><text transform="translate(128.75,36) scale(0.8812,1)" font-family="Liberation Sans" font-size="12" font-weight="normal" fill="#000">Planets</text><rect x="156" y="37" width="5" height="1" fill="#000"/><text transform="translate(173.00,36) scale(0.9038,1)" font-family="Liberation Sans" font-size="12" font-weight="normal" fill="#000">Indicators</text><rect x="173" y="37" width="2" height="1" fill="#000"/><text transform="translate(229.50,36) scale(0.8478,1)" font-family="Liberation Sans" font-size="12" font-weight="normal" fill="#000">Systems</text><rect x="229" y="37" width="7" height="1" fill="#000"/><text transform="translate(278.75,36) scale(0.9286,1)" font-family="Liberation Sans" font-size="12" font-weight="normal" fill="#000">FT Tools</text><rect x="298" y="37" width="7" height="1" fill="#000"/><text transform="translate(330.00,36) scale(0.9250,1)" font-family="Liberation Sans" font-size="12" font-weight="normal" fill="#000">J.Z.</text><rect x="337" y="37" width="7" height="1" fill="#000"/><text transform="translate(358.00,36) scale(0.9357,1)" font-family="Liberation Sans" font-size="12" font-weight="normal" fill="#000">Window</text><rect x="358" y="37" width="11" height="1" fill="#000"/><text transform="translate(407.50,36) scale(0.8645,1)" font-family="Liberation Sans" font-size="12" font-weight="normal" fill="#000">Utilities</text><rect x="407" y="37" width="8" height="1" fill="#000"/><text transform="translate(450.50,36) scale(0.9091,1)" font-family="Liberation Sans" font-size="12" font-weight="normal" fill="#000">Help</text><rect x="450" y="37" width="8" height="1" fill="#000"/><text transform="translate(691.00,56) scale(1.0556,1)" font-family="Liberation Sans" font-size="9" font-weight="bold" fill="#000080">Live</text><text transform="translate(691.00,64) scale(1.0857,1)" font-family="Liberation Sans" font-size="9" font-weight="bold" fill="#000080">Rng</text><text transform="translate(746.00,56) scale(1.1111,1)" font-family="Liberation Sans" font-size="9" font-weight="bold" fill="#000080">Live</text><text transform="translate(746.00,64) scale(1.1429,1)" font-family="Liberation Sans" font-size="9" font-weight="bold" fill="#000080">Rng</text><text transform="translate(780.00,56) scale(0.9836,1)" font-family="Liberation Sans" font-size="11" font-weight="normal" fill="#ff0000">HP</text><text transform="translate(780.00,66) scale(1.0169,1)" font-family="Liberation Sans" font-size="12" font-weight="bold" fill="#0000ff">FZ</text><text transform="translate(802.70,59) scale(0.9625,1)" font-family="Liberation Sans" font-size="13" font-weight="bold" fill="#ff00ff">F</text><text transform="translate(810.00,66) scale(0.9655,1)" font-family="Liberation Sans" font-size="12" font-weight="bold" fill="#ff00ff">h</text><text transform="translate(814.80,57) scale(1.1818,1)" font-family="Liberation Sans" font-size="11" font-weight="bold" fill="#ff00ff">z</text><text transform="translate(835.00,63) scale(0.9846,1)" font-family="Liberation Sans" font-size="14" font-weight="bold" fill="#000">JZ</text><text transform="translate(7.00,337) scale(1.0000,1)" font-family="Liberation Serif" font-size="13" font-weight="normal" fill="#000">abc</text><text transform="translate(7.00,360) scale(1.0000,1)" font-family="Liberation Serif" font-size="13" font-weight="normal" fill="#000">abc</text><text transform="translate(12.00,386) scale(1.0938,1)" font-family="Liberation Sans" font-size="13" font-weight="bold" fill="#0000ff">F</text><text transform="translate(1001.00,130) scale(1.2093,1)" font-family="Liberation Sans" font-size="15" font-weight="bold" fill="#000">A</text><text transform="translate(1003.00,200) scale(1.0000,1)" font-family="Liberation Sans" font-size="12" font-weight="bold" fill="#000080">DL</text><text transform="translate(1001.50,465) scale(0.7273,1)" font-family="Liberation Sans" font-size="14" font-weight="normal" fill="#800080">G</text><text transform="translate(1010.50,465) scale(0.9935,1)" font-family="Liberation Sans" font-size="14" font-weight="normal" fill="#008000">9</text><text transform="translate(1001.50,489) scale(0.8148,1)" font-family="Liberation Sans" font-size="14" font-weight="normal" fill="#800080">GS</text><text transform="translate(1002.50,512) scale(1.0364,1)" font-family="Liberation Sans" font-size="13" font-weight="bold" fill="#000">LS</text><text transform="translate(1004.70,536) scale(0.9923,1)" font-family="Liberation Sans" font-size="13" font-weight="bold" fill="#000">Bi</text><text transform="translate(34.00,114) scale(0.9451,1)" font-family="Liberation Sans" font-size="10" font-weight="normal" fill="#fff">FIBONACCI/GALACTIC TRADER(R)</text><text transform="translate(43.00,133) scale(0.9673,1)" font-family="Liberation Sans" font-size="11" font-weight="normal" fill="#f00">[005] Mars Price Line G 180 N -1</text><text transform="translate(951.00,113) scale(0.9811,1)" font-family="Liberation Sans" font-size="11" font-weight="normal" fill="#fff">4000.00</text><text transform="translate(951.00,178) scale(0.9811,1)" font-family="Liberation Sans" font-size="11" font-weight="normal" fill="#fff">3800.00</text><text transform="translate(951.00,243) scale(0.9811,1)" font-family="Liberation Sans" font-size="11" font-weight="normal" fill="#fff">3600.00</text><text transform="translate(951.00,309) scale(0.9811,1)" font-family="Liberation Sans" font-size="11" font-weight="normal" fill="#fff">3400.00</text><text transform="translate(951.00,374) scale(0.9811,1)" font-family="Liberation Sans" font-size="11" font-weight="normal" fill="#fff">3200.00</text><text transform="translate(951.00,439) scale(0.9811,1)" font-family="Liberation Sans" font-size="11" font-weight="normal" fill="#fff">3000.00</text><text transform="translate(951.00,504) scale(0.9811,1)" font-family="Liberation Sans" font-size="11" font-weight="normal" fill="#fff">2800.00</text><text transform="translate(951.00,570) scale(0.9811,1)" font-family="Liberation Sans" font-size="11" font-weight="normal" fill="#fff">2600.00</text><text transform="translate(951.00,635) scale(0.9811,1)" font-family="Liberation Sans" font-size="11" font-weight="normal" fill="#fff">2400.00</text><text transform="translate(951.00,700) scale(0.9811,1)" font-family="Liberation Sans" font-size="11" font-weight="normal" fill="#fff">2200.00</text><text transform="translate(949.00,155) scale(1.0759,1)" font-family="Liberation Sans" font-size="10" font-weight="normal" fill="#000">3871.00</text><text transform="translate(34.00,711) scale(1.0090,1)" font-family="Liberation Sans" font-size="11" font-weight="normal" fill="#fff">2005-11-14</text><text transform="translate(112.00,711) scale(0.9956,1)" font-family="Liberation Sans" font-size="11" font-weight="normal" fill="#fff">2006-01-09</text><text transform="translate(192.00,711) scale(0.9956,1)" font-family="Liberation Sans" font-size="11" font-weight="normal" fill="#fff">2006-03-06</text><text transform="translate(268.00,711) scale(0.9956,1)" font-family="Liberation Sans" font-size="11" font-weight="normal" fill="#fff">2006-05-02</text><text transform="translate(342.00,711) scale(0.9956,1)" font-family="Liberation Sans" font-size="11" font-weight="normal" fill="#fff">2006-06-26</text><text transform="translate(420.00,711) scale(0.9956,1)" font-family="Liberation Sans" font-size="11" font-weight="normal" fill="#fff">2006-08-21</text><text transform="translate(500.00,711) scale(0.9956,1)" font-family="Liberation Sans" font-size="11" font-weight="normal" fill="#fff">2006-10-16</text><text transform="translate(578.00,711) scale(1.0090,1)" font-family="Liberation Sans" font-size="11" font-weight="normal" fill="#fff">2006-12-11</text><text transform="translate(652.00,711) scale(0.9956,1)" font-family="Liberation Sans" font-size="11" font-weight="normal" fill="#fff">2007-02-05</text><text transform="translate(732.00,711) scale(0.9956,1)" font-family="Liberation Sans" font-size="11" font-weight="normal" fill="#fff">2007-04-02</text><text transform="translate(804.00,711) scale(0.9956,1)" font-family="Liberation Sans" font-size="11" font-weight="normal" fill="#fff">2007-05-28</text><text transform="translate(882.00,711) scale(0.9956,1)" font-family="Liberation Sans" font-size="11" font-weight="normal" fill="#fff">2007-07-23</text><text transform="translate(980.00,711) scale(0.9796,1)" font-family="Liberation Sans" font-size="10" font-weight="bold" fill="#000">TF</text><text transform="translate(23.00,757) scale(0.9908,1)" font-family="Liberation Sans" font-size="12" font-weight="bold" fill="#000">Start</text><text transform="translate(498.50,757) scale(0.8946,1)" font-family="Liberation Sans" font-size="12" font-weight="normal" fill="#000">FUTURES :: Zobacz tem...</text><text transform="translate(663.00,757) scale(1.0470,1)" font-family="Liberation Sans" font-size="12" font-weight="bold" fill="#000">Fibonacci/Galactic T...</text><text transform="translate(896.00,759) scale(0.6250,1)" font-family="Liberation Sans" font-size="13" font-weight="normal" fill="#fff">PL</text><text transform="translate(987.60,758) scale(0.9233,1)" font-family="Liberation Sans" font-size="12" font-weight="normal" fill="#000">16:16</text></svg>
</body></html>
